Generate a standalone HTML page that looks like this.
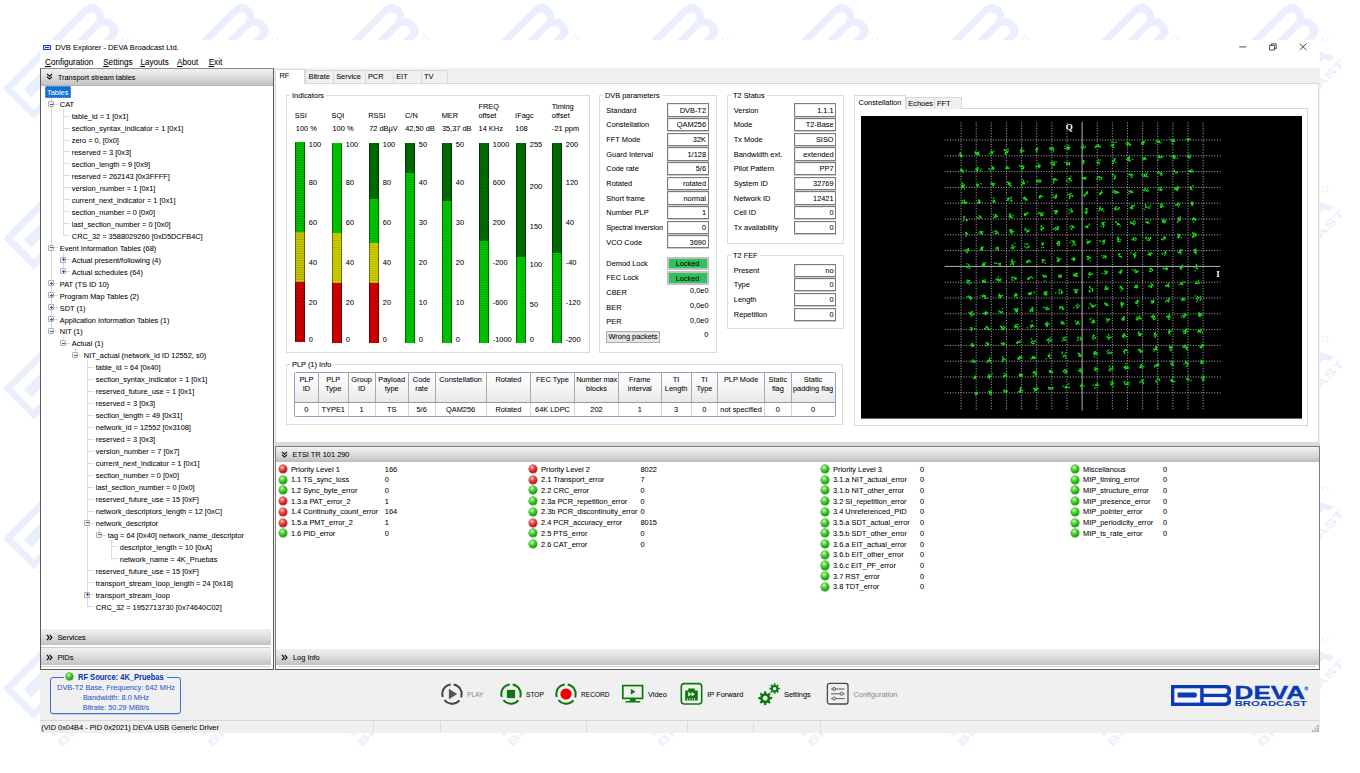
<!DOCTYPE html><html><head><meta charset="utf-8"><title>DVB Explorer</title><style>
html,body{margin:0;padding:0;}
body{width:1360px;height:773px;overflow:hidden;position:relative;background:#fff;font-family:"Liberation Sans",sans-serif;font-size:7.4px;color:#000;}
.a{position:absolute;box-sizing:border-box;}
.t{position:absolute;white-space:nowrap;-webkit-text-stroke:0.05px currentColor;}
.hdr{background:linear-gradient(#f1f1f1 0%,#e0e0e0 45%,#c2c2c2 100%);}
.grp{border:1px solid #dcdcdc;border-radius:1px;}
.leg{background:#fff;padding:0 2px;}
.fld{border:1px solid #7a7a7a;background:#fff;box-shadow:inset 0 0 0 0.5px #ddd;}
u{text-decoration:underline;text-decoration-thickness:0.6px;text-underline-offset:0.6px;}
</style></head><body>
<svg class="a" style="left:0;top:0" width="1360" height="773" viewBox="0 0 1360 773"><g transform="translate(-147 -61.599999999999994) rotate(-45) scale(2.09)"><path d="M0 0H54.5Q60.1 0 60.1 5.4Q60.1 9.4 57.6 10.45Q60.1 11.5 60.1 15.5Q60.1 20.9 54.5 20.9H0Z" fill="#e9effc"/><rect x="3.3" y="3.3" width="25.9" height="14.3" fill="#fff"/><path d="M6.6 7.5H23.4a2.5 2.5 0 0 1 0 5.1H6.6Z" fill="#e9effc"/><path d="M32.6 3.3H53.6a2.7 2.7 0 0 1 0 5.5H32.6Z" fill="#fff"/><path d="M32.6 12.1H53.6a2.7 2.7 0 0 1 0 5.5H32.6Z" fill="#fff"/><text x="-0.4" y="33.4" font-family="Liberation Sans" font-weight="bold" font-size="14.4" textLength="56" lengthAdjust="spacingAndGlyphs" fill="#e9effc">DEVA</text><text x="0" y="39.8" font-family="Liberation Sans" font-weight="bold" font-size="5.2" textLength="56.5" lengthAdjust="spacingAndGlyphs" fill="#e9effc">BROADCAST</text><circle cx="58" cy="24.6" r="1.4" fill="none" stroke="#e9effc" stroke-width="0.45"/></g><g transform="translate(3 -61.599999999999994) rotate(-45) scale(2.09)"><path d="M0 0H54.5Q60.1 0 60.1 5.4Q60.1 9.4 57.6 10.45Q60.1 11.5 60.1 15.5Q60.1 20.9 54.5 20.9H0Z" fill="#e9effc"/><rect x="3.3" y="3.3" width="25.9" height="14.3" fill="#fff"/><path d="M6.6 7.5H23.4a2.5 2.5 0 0 1 0 5.1H6.6Z" fill="#e9effc"/><path d="M32.6 3.3H53.6a2.7 2.7 0 0 1 0 5.5H32.6Z" fill="#fff"/><path d="M32.6 12.1H53.6a2.7 2.7 0 0 1 0 5.5H32.6Z" fill="#fff"/><text x="-0.4" y="33.4" font-family="Liberation Sans" font-weight="bold" font-size="14.4" textLength="56" lengthAdjust="spacingAndGlyphs" fill="#e9effc">DEVA</text><text x="0" y="39.8" font-family="Liberation Sans" font-weight="bold" font-size="5.2" textLength="56.5" lengthAdjust="spacingAndGlyphs" fill="#e9effc">BROADCAST</text><circle cx="58" cy="24.6" r="1.4" fill="none" stroke="#e9effc" stroke-width="0.45"/></g><g transform="translate(153 -61.599999999999994) rotate(-45) scale(2.09)"><path d="M0 0H54.5Q60.1 0 60.1 5.4Q60.1 9.4 57.6 10.45Q60.1 11.5 60.1 15.5Q60.1 20.9 54.5 20.9H0Z" fill="#e9effc"/><rect x="3.3" y="3.3" width="25.9" height="14.3" fill="#fff"/><path d="M6.6 7.5H23.4a2.5 2.5 0 0 1 0 5.1H6.6Z" fill="#e9effc"/><path d="M32.6 3.3H53.6a2.7 2.7 0 0 1 0 5.5H32.6Z" fill="#fff"/><path d="M32.6 12.1H53.6a2.7 2.7 0 0 1 0 5.5H32.6Z" fill="#fff"/><text x="-0.4" y="33.4" font-family="Liberation Sans" font-weight="bold" font-size="14.4" textLength="56" lengthAdjust="spacingAndGlyphs" fill="#e9effc">DEVA</text><text x="0" y="39.8" font-family="Liberation Sans" font-weight="bold" font-size="5.2" textLength="56.5" lengthAdjust="spacingAndGlyphs" fill="#e9effc">BROADCAST</text><circle cx="58" cy="24.6" r="1.4" fill="none" stroke="#e9effc" stroke-width="0.45"/></g><g transform="translate(303 -61.599999999999994) rotate(-45) scale(2.09)"><path d="M0 0H54.5Q60.1 0 60.1 5.4Q60.1 9.4 57.6 10.45Q60.1 11.5 60.1 15.5Q60.1 20.9 54.5 20.9H0Z" fill="#e9effc"/><rect x="3.3" y="3.3" width="25.9" height="14.3" fill="#fff"/><path d="M6.6 7.5H23.4a2.5 2.5 0 0 1 0 5.1H6.6Z" fill="#e9effc"/><path d="M32.6 3.3H53.6a2.7 2.7 0 0 1 0 5.5H32.6Z" fill="#fff"/><path d="M32.6 12.1H53.6a2.7 2.7 0 0 1 0 5.5H32.6Z" fill="#fff"/><text x="-0.4" y="33.4" font-family="Liberation Sans" font-weight="bold" font-size="14.4" textLength="56" lengthAdjust="spacingAndGlyphs" fill="#e9effc">DEVA</text><text x="0" y="39.8" font-family="Liberation Sans" font-weight="bold" font-size="5.2" textLength="56.5" lengthAdjust="spacingAndGlyphs" fill="#e9effc">BROADCAST</text><circle cx="58" cy="24.6" r="1.4" fill="none" stroke="#e9effc" stroke-width="0.45"/></g><g transform="translate(453 -61.599999999999994) rotate(-45) scale(2.09)"><path d="M0 0H54.5Q60.1 0 60.1 5.4Q60.1 9.4 57.6 10.45Q60.1 11.5 60.1 15.5Q60.1 20.9 54.5 20.9H0Z" fill="#e9effc"/><rect x="3.3" y="3.3" width="25.9" height="14.3" fill="#fff"/><path d="M6.6 7.5H23.4a2.5 2.5 0 0 1 0 5.1H6.6Z" fill="#e9effc"/><path d="M32.6 3.3H53.6a2.7 2.7 0 0 1 0 5.5H32.6Z" fill="#fff"/><path d="M32.6 12.1H53.6a2.7 2.7 0 0 1 0 5.5H32.6Z" fill="#fff"/><text x="-0.4" y="33.4" font-family="Liberation Sans" font-weight="bold" font-size="14.4" textLength="56" lengthAdjust="spacingAndGlyphs" fill="#e9effc">DEVA</text><text x="0" y="39.8" font-family="Liberation Sans" font-weight="bold" font-size="5.2" textLength="56.5" lengthAdjust="spacingAndGlyphs" fill="#e9effc">BROADCAST</text><circle cx="58" cy="24.6" r="1.4" fill="none" stroke="#e9effc" stroke-width="0.45"/></g><g transform="translate(603 -61.599999999999994) rotate(-45) scale(2.09)"><path d="M0 0H54.5Q60.1 0 60.1 5.4Q60.1 9.4 57.6 10.45Q60.1 11.5 60.1 15.5Q60.1 20.9 54.5 20.9H0Z" fill="#e9effc"/><rect x="3.3" y="3.3" width="25.9" height="14.3" fill="#fff"/><path d="M6.6 7.5H23.4a2.5 2.5 0 0 1 0 5.1H6.6Z" fill="#e9effc"/><path d="M32.6 3.3H53.6a2.7 2.7 0 0 1 0 5.5H32.6Z" fill="#fff"/><path d="M32.6 12.1H53.6a2.7 2.7 0 0 1 0 5.5H32.6Z" fill="#fff"/><text x="-0.4" y="33.4" font-family="Liberation Sans" font-weight="bold" font-size="14.4" textLength="56" lengthAdjust="spacingAndGlyphs" fill="#e9effc">DEVA</text><text x="0" y="39.8" font-family="Liberation Sans" font-weight="bold" font-size="5.2" textLength="56.5" lengthAdjust="spacingAndGlyphs" fill="#e9effc">BROADCAST</text><circle cx="58" cy="24.6" r="1.4" fill="none" stroke="#e9effc" stroke-width="0.45"/></g><g transform="translate(753 -61.599999999999994) rotate(-45) scale(2.09)"><path d="M0 0H54.5Q60.1 0 60.1 5.4Q60.1 9.4 57.6 10.45Q60.1 11.5 60.1 15.5Q60.1 20.9 54.5 20.9H0Z" fill="#e9effc"/><rect x="3.3" y="3.3" width="25.9" height="14.3" fill="#fff"/><path d="M6.6 7.5H23.4a2.5 2.5 0 0 1 0 5.1H6.6Z" fill="#e9effc"/><path d="M32.6 3.3H53.6a2.7 2.7 0 0 1 0 5.5H32.6Z" fill="#fff"/><path d="M32.6 12.1H53.6a2.7 2.7 0 0 1 0 5.5H32.6Z" fill="#fff"/><text x="-0.4" y="33.4" font-family="Liberation Sans" font-weight="bold" font-size="14.4" textLength="56" lengthAdjust="spacingAndGlyphs" fill="#e9effc">DEVA</text><text x="0" y="39.8" font-family="Liberation Sans" font-weight="bold" font-size="5.2" textLength="56.5" lengthAdjust="spacingAndGlyphs" fill="#e9effc">BROADCAST</text><circle cx="58" cy="24.6" r="1.4" fill="none" stroke="#e9effc" stroke-width="0.45"/></g><g transform="translate(903 -61.599999999999994) rotate(-45) scale(2.09)"><path d="M0 0H54.5Q60.1 0 60.1 5.4Q60.1 9.4 57.6 10.45Q60.1 11.5 60.1 15.5Q60.1 20.9 54.5 20.9H0Z" fill="#e9effc"/><rect x="3.3" y="3.3" width="25.9" height="14.3" fill="#fff"/><path d="M6.6 7.5H23.4a2.5 2.5 0 0 1 0 5.1H6.6Z" fill="#e9effc"/><path d="M32.6 3.3H53.6a2.7 2.7 0 0 1 0 5.5H32.6Z" fill="#fff"/><path d="M32.6 12.1H53.6a2.7 2.7 0 0 1 0 5.5H32.6Z" fill="#fff"/><text x="-0.4" y="33.4" font-family="Liberation Sans" font-weight="bold" font-size="14.4" textLength="56" lengthAdjust="spacingAndGlyphs" fill="#e9effc">DEVA</text><text x="0" y="39.8" font-family="Liberation Sans" font-weight="bold" font-size="5.2" textLength="56.5" lengthAdjust="spacingAndGlyphs" fill="#e9effc">BROADCAST</text><circle cx="58" cy="24.6" r="1.4" fill="none" stroke="#e9effc" stroke-width="0.45"/></g><g transform="translate(1053 -61.599999999999994) rotate(-45) scale(2.09)"><path d="M0 0H54.5Q60.1 0 60.1 5.4Q60.1 9.4 57.6 10.45Q60.1 11.5 60.1 15.5Q60.1 20.9 54.5 20.9H0Z" fill="#e9effc"/><rect x="3.3" y="3.3" width="25.9" height="14.3" fill="#fff"/><path d="M6.6 7.5H23.4a2.5 2.5 0 0 1 0 5.1H6.6Z" fill="#e9effc"/><path d="M32.6 3.3H53.6a2.7 2.7 0 0 1 0 5.5H32.6Z" fill="#fff"/><path d="M32.6 12.1H53.6a2.7 2.7 0 0 1 0 5.5H32.6Z" fill="#fff"/><text x="-0.4" y="33.4" font-family="Liberation Sans" font-weight="bold" font-size="14.4" textLength="56" lengthAdjust="spacingAndGlyphs" fill="#e9effc">DEVA</text><text x="0" y="39.8" font-family="Liberation Sans" font-weight="bold" font-size="5.2" textLength="56.5" lengthAdjust="spacingAndGlyphs" fill="#e9effc">BROADCAST</text><circle cx="58" cy="24.6" r="1.4" fill="none" stroke="#e9effc" stroke-width="0.45"/></g><g transform="translate(1203 -61.599999999999994) rotate(-45) scale(2.09)"><path d="M0 0H54.5Q60.1 0 60.1 5.4Q60.1 9.4 57.6 10.45Q60.1 11.5 60.1 15.5Q60.1 20.9 54.5 20.9H0Z" fill="#e9effc"/><rect x="3.3" y="3.3" width="25.9" height="14.3" fill="#fff"/><path d="M6.6 7.5H23.4a2.5 2.5 0 0 1 0 5.1H6.6Z" fill="#e9effc"/><path d="M32.6 3.3H53.6a2.7 2.7 0 0 1 0 5.5H32.6Z" fill="#fff"/><path d="M32.6 12.1H53.6a2.7 2.7 0 0 1 0 5.5H32.6Z" fill="#fff"/><text x="-0.4" y="33.4" font-family="Liberation Sans" font-weight="bold" font-size="14.4" textLength="56" lengthAdjust="spacingAndGlyphs" fill="#e9effc">DEVA</text><text x="0" y="39.8" font-family="Liberation Sans" font-weight="bold" font-size="5.2" textLength="56.5" lengthAdjust="spacingAndGlyphs" fill="#e9effc">BROADCAST</text><circle cx="58" cy="24.6" r="1.4" fill="none" stroke="#e9effc" stroke-width="0.45"/></g><g transform="translate(-147 88.4) rotate(-45) scale(2.09)"><path d="M0 0H54.5Q60.1 0 60.1 5.4Q60.1 9.4 57.6 10.45Q60.1 11.5 60.1 15.5Q60.1 20.9 54.5 20.9H0Z" fill="#e9effc"/><rect x="3.3" y="3.3" width="25.9" height="14.3" fill="#fff"/><path d="M6.6 7.5H23.4a2.5 2.5 0 0 1 0 5.1H6.6Z" fill="#e9effc"/><path d="M32.6 3.3H53.6a2.7 2.7 0 0 1 0 5.5H32.6Z" fill="#fff"/><path d="M32.6 12.1H53.6a2.7 2.7 0 0 1 0 5.5H32.6Z" fill="#fff"/><text x="-0.4" y="33.4" font-family="Liberation Sans" font-weight="bold" font-size="14.4" textLength="56" lengthAdjust="spacingAndGlyphs" fill="#e9effc">DEVA</text><text x="0" y="39.8" font-family="Liberation Sans" font-weight="bold" font-size="5.2" textLength="56.5" lengthAdjust="spacingAndGlyphs" fill="#e9effc">BROADCAST</text><circle cx="58" cy="24.6" r="1.4" fill="none" stroke="#e9effc" stroke-width="0.45"/></g><g transform="translate(3 88.4) rotate(-45) scale(2.09)"><path d="M0 0H54.5Q60.1 0 60.1 5.4Q60.1 9.4 57.6 10.45Q60.1 11.5 60.1 15.5Q60.1 20.9 54.5 20.9H0Z" fill="#e9effc"/><rect x="3.3" y="3.3" width="25.9" height="14.3" fill="#fff"/><path d="M6.6 7.5H23.4a2.5 2.5 0 0 1 0 5.1H6.6Z" fill="#e9effc"/><path d="M32.6 3.3H53.6a2.7 2.7 0 0 1 0 5.5H32.6Z" fill="#fff"/><path d="M32.6 12.1H53.6a2.7 2.7 0 0 1 0 5.5H32.6Z" fill="#fff"/><text x="-0.4" y="33.4" font-family="Liberation Sans" font-weight="bold" font-size="14.4" textLength="56" lengthAdjust="spacingAndGlyphs" fill="#e9effc">DEVA</text><text x="0" y="39.8" font-family="Liberation Sans" font-weight="bold" font-size="5.2" textLength="56.5" lengthAdjust="spacingAndGlyphs" fill="#e9effc">BROADCAST</text><circle cx="58" cy="24.6" r="1.4" fill="none" stroke="#e9effc" stroke-width="0.45"/></g><g transform="translate(153 88.4) rotate(-45) scale(2.09)"><path d="M0 0H54.5Q60.1 0 60.1 5.4Q60.1 9.4 57.6 10.45Q60.1 11.5 60.1 15.5Q60.1 20.9 54.5 20.9H0Z" fill="#e9effc"/><rect x="3.3" y="3.3" width="25.9" height="14.3" fill="#fff"/><path d="M6.6 7.5H23.4a2.5 2.5 0 0 1 0 5.1H6.6Z" fill="#e9effc"/><path d="M32.6 3.3H53.6a2.7 2.7 0 0 1 0 5.5H32.6Z" fill="#fff"/><path d="M32.6 12.1H53.6a2.7 2.7 0 0 1 0 5.5H32.6Z" fill="#fff"/><text x="-0.4" y="33.4" font-family="Liberation Sans" font-weight="bold" font-size="14.4" textLength="56" lengthAdjust="spacingAndGlyphs" fill="#e9effc">DEVA</text><text x="0" y="39.8" font-family="Liberation Sans" font-weight="bold" font-size="5.2" textLength="56.5" lengthAdjust="spacingAndGlyphs" fill="#e9effc">BROADCAST</text><circle cx="58" cy="24.6" r="1.4" fill="none" stroke="#e9effc" stroke-width="0.45"/></g><g transform="translate(303 88.4) rotate(-45) scale(2.09)"><path d="M0 0H54.5Q60.1 0 60.1 5.4Q60.1 9.4 57.6 10.45Q60.1 11.5 60.1 15.5Q60.1 20.9 54.5 20.9H0Z" fill="#e9effc"/><rect x="3.3" y="3.3" width="25.9" height="14.3" fill="#fff"/><path d="M6.6 7.5H23.4a2.5 2.5 0 0 1 0 5.1H6.6Z" fill="#e9effc"/><path d="M32.6 3.3H53.6a2.7 2.7 0 0 1 0 5.5H32.6Z" fill="#fff"/><path d="M32.6 12.1H53.6a2.7 2.7 0 0 1 0 5.5H32.6Z" fill="#fff"/><text x="-0.4" y="33.4" font-family="Liberation Sans" font-weight="bold" font-size="14.4" textLength="56" lengthAdjust="spacingAndGlyphs" fill="#e9effc">DEVA</text><text x="0" y="39.8" font-family="Liberation Sans" font-weight="bold" font-size="5.2" textLength="56.5" lengthAdjust="spacingAndGlyphs" fill="#e9effc">BROADCAST</text><circle cx="58" cy="24.6" r="1.4" fill="none" stroke="#e9effc" stroke-width="0.45"/></g><g transform="translate(453 88.4) rotate(-45) scale(2.09)"><path d="M0 0H54.5Q60.1 0 60.1 5.4Q60.1 9.4 57.6 10.45Q60.1 11.5 60.1 15.5Q60.1 20.9 54.5 20.9H0Z" fill="#e9effc"/><rect x="3.3" y="3.3" width="25.9" height="14.3" fill="#fff"/><path d="M6.6 7.5H23.4a2.5 2.5 0 0 1 0 5.1H6.6Z" fill="#e9effc"/><path d="M32.6 3.3H53.6a2.7 2.7 0 0 1 0 5.5H32.6Z" fill="#fff"/><path d="M32.6 12.1H53.6a2.7 2.7 0 0 1 0 5.5H32.6Z" fill="#fff"/><text x="-0.4" y="33.4" font-family="Liberation Sans" font-weight="bold" font-size="14.4" textLength="56" lengthAdjust="spacingAndGlyphs" fill="#e9effc">DEVA</text><text x="0" y="39.8" font-family="Liberation Sans" font-weight="bold" font-size="5.2" textLength="56.5" lengthAdjust="spacingAndGlyphs" fill="#e9effc">BROADCAST</text><circle cx="58" cy="24.6" r="1.4" fill="none" stroke="#e9effc" stroke-width="0.45"/></g><g transform="translate(603 88.4) rotate(-45) scale(2.09)"><path d="M0 0H54.5Q60.1 0 60.1 5.4Q60.1 9.4 57.6 10.45Q60.1 11.5 60.1 15.5Q60.1 20.9 54.5 20.9H0Z" fill="#e9effc"/><rect x="3.3" y="3.3" width="25.9" height="14.3" fill="#fff"/><path d="M6.6 7.5H23.4a2.5 2.5 0 0 1 0 5.1H6.6Z" fill="#e9effc"/><path d="M32.6 3.3H53.6a2.7 2.7 0 0 1 0 5.5H32.6Z" fill="#fff"/><path d="M32.6 12.1H53.6a2.7 2.7 0 0 1 0 5.5H32.6Z" fill="#fff"/><text x="-0.4" y="33.4" font-family="Liberation Sans" font-weight="bold" font-size="14.4" textLength="56" lengthAdjust="spacingAndGlyphs" fill="#e9effc">DEVA</text><text x="0" y="39.8" font-family="Liberation Sans" font-weight="bold" font-size="5.2" textLength="56.5" lengthAdjust="spacingAndGlyphs" fill="#e9effc">BROADCAST</text><circle cx="58" cy="24.6" r="1.4" fill="none" stroke="#e9effc" stroke-width="0.45"/></g><g transform="translate(753 88.4) rotate(-45) scale(2.09)"><path d="M0 0H54.5Q60.1 0 60.1 5.4Q60.1 9.4 57.6 10.45Q60.1 11.5 60.1 15.5Q60.1 20.9 54.5 20.9H0Z" fill="#e9effc"/><rect x="3.3" y="3.3" width="25.9" height="14.3" fill="#fff"/><path d="M6.6 7.5H23.4a2.5 2.5 0 0 1 0 5.1H6.6Z" fill="#e9effc"/><path d="M32.6 3.3H53.6a2.7 2.7 0 0 1 0 5.5H32.6Z" fill="#fff"/><path d="M32.6 12.1H53.6a2.7 2.7 0 0 1 0 5.5H32.6Z" fill="#fff"/><text x="-0.4" y="33.4" font-family="Liberation Sans" font-weight="bold" font-size="14.4" textLength="56" lengthAdjust="spacingAndGlyphs" fill="#e9effc">DEVA</text><text x="0" y="39.8" font-family="Liberation Sans" font-weight="bold" font-size="5.2" textLength="56.5" lengthAdjust="spacingAndGlyphs" fill="#e9effc">BROADCAST</text><circle cx="58" cy="24.6" r="1.4" fill="none" stroke="#e9effc" stroke-width="0.45"/></g><g transform="translate(903 88.4) rotate(-45) scale(2.09)"><path d="M0 0H54.5Q60.1 0 60.1 5.4Q60.1 9.4 57.6 10.45Q60.1 11.5 60.1 15.5Q60.1 20.9 54.5 20.9H0Z" fill="#e9effc"/><rect x="3.3" y="3.3" width="25.9" height="14.3" fill="#fff"/><path d="M6.6 7.5H23.4a2.5 2.5 0 0 1 0 5.1H6.6Z" fill="#e9effc"/><path d="M32.6 3.3H53.6a2.7 2.7 0 0 1 0 5.5H32.6Z" fill="#fff"/><path d="M32.6 12.1H53.6a2.7 2.7 0 0 1 0 5.5H32.6Z" fill="#fff"/><text x="-0.4" y="33.4" font-family="Liberation Sans" font-weight="bold" font-size="14.4" textLength="56" lengthAdjust="spacingAndGlyphs" fill="#e9effc">DEVA</text><text x="0" y="39.8" font-family="Liberation Sans" font-weight="bold" font-size="5.2" textLength="56.5" lengthAdjust="spacingAndGlyphs" fill="#e9effc">BROADCAST</text><circle cx="58" cy="24.6" r="1.4" fill="none" stroke="#e9effc" stroke-width="0.45"/></g><g transform="translate(1053 88.4) rotate(-45) scale(2.09)"><path d="M0 0H54.5Q60.1 0 60.1 5.4Q60.1 9.4 57.6 10.45Q60.1 11.5 60.1 15.5Q60.1 20.9 54.5 20.9H0Z" fill="#e9effc"/><rect x="3.3" y="3.3" width="25.9" height="14.3" fill="#fff"/><path d="M6.6 7.5H23.4a2.5 2.5 0 0 1 0 5.1H6.6Z" fill="#e9effc"/><path d="M32.6 3.3H53.6a2.7 2.7 0 0 1 0 5.5H32.6Z" fill="#fff"/><path d="M32.6 12.1H53.6a2.7 2.7 0 0 1 0 5.5H32.6Z" fill="#fff"/><text x="-0.4" y="33.4" font-family="Liberation Sans" font-weight="bold" font-size="14.4" textLength="56" lengthAdjust="spacingAndGlyphs" fill="#e9effc">DEVA</text><text x="0" y="39.8" font-family="Liberation Sans" font-weight="bold" font-size="5.2" textLength="56.5" lengthAdjust="spacingAndGlyphs" fill="#e9effc">BROADCAST</text><circle cx="58" cy="24.6" r="1.4" fill="none" stroke="#e9effc" stroke-width="0.45"/></g><g transform="translate(1203 88.4) rotate(-45) scale(2.09)"><path d="M0 0H54.5Q60.1 0 60.1 5.4Q60.1 9.4 57.6 10.45Q60.1 11.5 60.1 15.5Q60.1 20.9 54.5 20.9H0Z" fill="#e9effc"/><rect x="3.3" y="3.3" width="25.9" height="14.3" fill="#fff"/><path d="M6.6 7.5H23.4a2.5 2.5 0 0 1 0 5.1H6.6Z" fill="#e9effc"/><path d="M32.6 3.3H53.6a2.7 2.7 0 0 1 0 5.5H32.6Z" fill="#fff"/><path d="M32.6 12.1H53.6a2.7 2.7 0 0 1 0 5.5H32.6Z" fill="#fff"/><text x="-0.4" y="33.4" font-family="Liberation Sans" font-weight="bold" font-size="14.4" textLength="56" lengthAdjust="spacingAndGlyphs" fill="#e9effc">DEVA</text><text x="0" y="39.8" font-family="Liberation Sans" font-weight="bold" font-size="5.2" textLength="56.5" lengthAdjust="spacingAndGlyphs" fill="#e9effc">BROADCAST</text><circle cx="58" cy="24.6" r="1.4" fill="none" stroke="#e9effc" stroke-width="0.45"/></g><g transform="translate(-147 238.4) rotate(-45) scale(2.09)"><path d="M0 0H54.5Q60.1 0 60.1 5.4Q60.1 9.4 57.6 10.45Q60.1 11.5 60.1 15.5Q60.1 20.9 54.5 20.9H0Z" fill="#e9effc"/><rect x="3.3" y="3.3" width="25.9" height="14.3" fill="#fff"/><path d="M6.6 7.5H23.4a2.5 2.5 0 0 1 0 5.1H6.6Z" fill="#e9effc"/><path d="M32.6 3.3H53.6a2.7 2.7 0 0 1 0 5.5H32.6Z" fill="#fff"/><path d="M32.6 12.1H53.6a2.7 2.7 0 0 1 0 5.5H32.6Z" fill="#fff"/><text x="-0.4" y="33.4" font-family="Liberation Sans" font-weight="bold" font-size="14.4" textLength="56" lengthAdjust="spacingAndGlyphs" fill="#e9effc">DEVA</text><text x="0" y="39.8" font-family="Liberation Sans" font-weight="bold" font-size="5.2" textLength="56.5" lengthAdjust="spacingAndGlyphs" fill="#e9effc">BROADCAST</text><circle cx="58" cy="24.6" r="1.4" fill="none" stroke="#e9effc" stroke-width="0.45"/></g><g transform="translate(3 238.4) rotate(-45) scale(2.09)"><path d="M0 0H54.5Q60.1 0 60.1 5.4Q60.1 9.4 57.6 10.45Q60.1 11.5 60.1 15.5Q60.1 20.9 54.5 20.9H0Z" fill="#e9effc"/><rect x="3.3" y="3.3" width="25.9" height="14.3" fill="#fff"/><path d="M6.6 7.5H23.4a2.5 2.5 0 0 1 0 5.1H6.6Z" fill="#e9effc"/><path d="M32.6 3.3H53.6a2.7 2.7 0 0 1 0 5.5H32.6Z" fill="#fff"/><path d="M32.6 12.1H53.6a2.7 2.7 0 0 1 0 5.5H32.6Z" fill="#fff"/><text x="-0.4" y="33.4" font-family="Liberation Sans" font-weight="bold" font-size="14.4" textLength="56" lengthAdjust="spacingAndGlyphs" fill="#e9effc">DEVA</text><text x="0" y="39.8" font-family="Liberation Sans" font-weight="bold" font-size="5.2" textLength="56.5" lengthAdjust="spacingAndGlyphs" fill="#e9effc">BROADCAST</text><circle cx="58" cy="24.6" r="1.4" fill="none" stroke="#e9effc" stroke-width="0.45"/></g><g transform="translate(1203 238.4) rotate(-45) scale(2.09)"><path d="M0 0H54.5Q60.1 0 60.1 5.4Q60.1 9.4 57.6 10.45Q60.1 11.5 60.1 15.5Q60.1 20.9 54.5 20.9H0Z" fill="#e9effc"/><rect x="3.3" y="3.3" width="25.9" height="14.3" fill="#fff"/><path d="M6.6 7.5H23.4a2.5 2.5 0 0 1 0 5.1H6.6Z" fill="#e9effc"/><path d="M32.6 3.3H53.6a2.7 2.7 0 0 1 0 5.5H32.6Z" fill="#fff"/><path d="M32.6 12.1H53.6a2.7 2.7 0 0 1 0 5.5H32.6Z" fill="#fff"/><text x="-0.4" y="33.4" font-family="Liberation Sans" font-weight="bold" font-size="14.4" textLength="56" lengthAdjust="spacingAndGlyphs" fill="#e9effc">DEVA</text><text x="0" y="39.8" font-family="Liberation Sans" font-weight="bold" font-size="5.2" textLength="56.5" lengthAdjust="spacingAndGlyphs" fill="#e9effc">BROADCAST</text><circle cx="58" cy="24.6" r="1.4" fill="none" stroke="#e9effc" stroke-width="0.45"/></g><g transform="translate(-147 388.4) rotate(-45) scale(2.09)"><path d="M0 0H54.5Q60.1 0 60.1 5.4Q60.1 9.4 57.6 10.45Q60.1 11.5 60.1 15.5Q60.1 20.9 54.5 20.9H0Z" fill="#e9effc"/><rect x="3.3" y="3.3" width="25.9" height="14.3" fill="#fff"/><path d="M6.6 7.5H23.4a2.5 2.5 0 0 1 0 5.1H6.6Z" fill="#e9effc"/><path d="M32.6 3.3H53.6a2.7 2.7 0 0 1 0 5.5H32.6Z" fill="#fff"/><path d="M32.6 12.1H53.6a2.7 2.7 0 0 1 0 5.5H32.6Z" fill="#fff"/><text x="-0.4" y="33.4" font-family="Liberation Sans" font-weight="bold" font-size="14.4" textLength="56" lengthAdjust="spacingAndGlyphs" fill="#e9effc">DEVA</text><text x="0" y="39.8" font-family="Liberation Sans" font-weight="bold" font-size="5.2" textLength="56.5" lengthAdjust="spacingAndGlyphs" fill="#e9effc">BROADCAST</text><circle cx="58" cy="24.6" r="1.4" fill="none" stroke="#e9effc" stroke-width="0.45"/></g><g transform="translate(3 388.4) rotate(-45) scale(2.09)"><path d="M0 0H54.5Q60.1 0 60.1 5.4Q60.1 9.4 57.6 10.45Q60.1 11.5 60.1 15.5Q60.1 20.9 54.5 20.9H0Z" fill="#e9effc"/><rect x="3.3" y="3.3" width="25.9" height="14.3" fill="#fff"/><path d="M6.6 7.5H23.4a2.5 2.5 0 0 1 0 5.1H6.6Z" fill="#e9effc"/><path d="M32.6 3.3H53.6a2.7 2.7 0 0 1 0 5.5H32.6Z" fill="#fff"/><path d="M32.6 12.1H53.6a2.7 2.7 0 0 1 0 5.5H32.6Z" fill="#fff"/><text x="-0.4" y="33.4" font-family="Liberation Sans" font-weight="bold" font-size="14.4" textLength="56" lengthAdjust="spacingAndGlyphs" fill="#e9effc">DEVA</text><text x="0" y="39.8" font-family="Liberation Sans" font-weight="bold" font-size="5.2" textLength="56.5" lengthAdjust="spacingAndGlyphs" fill="#e9effc">BROADCAST</text><circle cx="58" cy="24.6" r="1.4" fill="none" stroke="#e9effc" stroke-width="0.45"/></g><g transform="translate(1203 388.4) rotate(-45) scale(2.09)"><path d="M0 0H54.5Q60.1 0 60.1 5.4Q60.1 9.4 57.6 10.45Q60.1 11.5 60.1 15.5Q60.1 20.9 54.5 20.9H0Z" fill="#e9effc"/><rect x="3.3" y="3.3" width="25.9" height="14.3" fill="#fff"/><path d="M6.6 7.5H23.4a2.5 2.5 0 0 1 0 5.1H6.6Z" fill="#e9effc"/><path d="M32.6 3.3H53.6a2.7 2.7 0 0 1 0 5.5H32.6Z" fill="#fff"/><path d="M32.6 12.1H53.6a2.7 2.7 0 0 1 0 5.5H32.6Z" fill="#fff"/><text x="-0.4" y="33.4" font-family="Liberation Sans" font-weight="bold" font-size="14.4" textLength="56" lengthAdjust="spacingAndGlyphs" fill="#e9effc">DEVA</text><text x="0" y="39.8" font-family="Liberation Sans" font-weight="bold" font-size="5.2" textLength="56.5" lengthAdjust="spacingAndGlyphs" fill="#e9effc">BROADCAST</text><circle cx="58" cy="24.6" r="1.4" fill="none" stroke="#e9effc" stroke-width="0.45"/></g><g transform="translate(-147 538.4) rotate(-45) scale(2.09)"><path d="M0 0H54.5Q60.1 0 60.1 5.4Q60.1 9.4 57.6 10.45Q60.1 11.5 60.1 15.5Q60.1 20.9 54.5 20.9H0Z" fill="#e9effc"/><rect x="3.3" y="3.3" width="25.9" height="14.3" fill="#fff"/><path d="M6.6 7.5H23.4a2.5 2.5 0 0 1 0 5.1H6.6Z" fill="#e9effc"/><path d="M32.6 3.3H53.6a2.7 2.7 0 0 1 0 5.5H32.6Z" fill="#fff"/><path d="M32.6 12.1H53.6a2.7 2.7 0 0 1 0 5.5H32.6Z" fill="#fff"/><text x="-0.4" y="33.4" font-family="Liberation Sans" font-weight="bold" font-size="14.4" textLength="56" lengthAdjust="spacingAndGlyphs" fill="#e9effc">DEVA</text><text x="0" y="39.8" font-family="Liberation Sans" font-weight="bold" font-size="5.2" textLength="56.5" lengthAdjust="spacingAndGlyphs" fill="#e9effc">BROADCAST</text><circle cx="58" cy="24.6" r="1.4" fill="none" stroke="#e9effc" stroke-width="0.45"/></g><g transform="translate(3 538.4) rotate(-45) scale(2.09)"><path d="M0 0H54.5Q60.1 0 60.1 5.4Q60.1 9.4 57.6 10.45Q60.1 11.5 60.1 15.5Q60.1 20.9 54.5 20.9H0Z" fill="#e9effc"/><rect x="3.3" y="3.3" width="25.9" height="14.3" fill="#fff"/><path d="M6.6 7.5H23.4a2.5 2.5 0 0 1 0 5.1H6.6Z" fill="#e9effc"/><path d="M32.6 3.3H53.6a2.7 2.7 0 0 1 0 5.5H32.6Z" fill="#fff"/><path d="M32.6 12.1H53.6a2.7 2.7 0 0 1 0 5.5H32.6Z" fill="#fff"/><text x="-0.4" y="33.4" font-family="Liberation Sans" font-weight="bold" font-size="14.4" textLength="56" lengthAdjust="spacingAndGlyphs" fill="#e9effc">DEVA</text><text x="0" y="39.8" font-family="Liberation Sans" font-weight="bold" font-size="5.2" textLength="56.5" lengthAdjust="spacingAndGlyphs" fill="#e9effc">BROADCAST</text><circle cx="58" cy="24.6" r="1.4" fill="none" stroke="#e9effc" stroke-width="0.45"/></g><g transform="translate(1203 538.4) rotate(-45) scale(2.09)"><path d="M0 0H54.5Q60.1 0 60.1 5.4Q60.1 9.4 57.6 10.45Q60.1 11.5 60.1 15.5Q60.1 20.9 54.5 20.9H0Z" fill="#e9effc"/><rect x="3.3" y="3.3" width="25.9" height="14.3" fill="#fff"/><path d="M6.6 7.5H23.4a2.5 2.5 0 0 1 0 5.1H6.6Z" fill="#e9effc"/><path d="M32.6 3.3H53.6a2.7 2.7 0 0 1 0 5.5H32.6Z" fill="#fff"/><path d="M32.6 12.1H53.6a2.7 2.7 0 0 1 0 5.5H32.6Z" fill="#fff"/><text x="-0.4" y="33.4" font-family="Liberation Sans" font-weight="bold" font-size="14.4" textLength="56" lengthAdjust="spacingAndGlyphs" fill="#e9effc">DEVA</text><text x="0" y="39.8" font-family="Liberation Sans" font-weight="bold" font-size="5.2" textLength="56.5" lengthAdjust="spacingAndGlyphs" fill="#e9effc">BROADCAST</text><circle cx="58" cy="24.6" r="1.4" fill="none" stroke="#e9effc" stroke-width="0.45"/></g><g transform="translate(-147 688.4) rotate(-45) scale(2.09)"><path d="M0 0H54.5Q60.1 0 60.1 5.4Q60.1 9.4 57.6 10.45Q60.1 11.5 60.1 15.5Q60.1 20.9 54.5 20.9H0Z" fill="#e9effc"/><rect x="3.3" y="3.3" width="25.9" height="14.3" fill="#fff"/><path d="M6.6 7.5H23.4a2.5 2.5 0 0 1 0 5.1H6.6Z" fill="#e9effc"/><path d="M32.6 3.3H53.6a2.7 2.7 0 0 1 0 5.5H32.6Z" fill="#fff"/><path d="M32.6 12.1H53.6a2.7 2.7 0 0 1 0 5.5H32.6Z" fill="#fff"/><text x="-0.4" y="33.4" font-family="Liberation Sans" font-weight="bold" font-size="14.4" textLength="56" lengthAdjust="spacingAndGlyphs" fill="#e9effc">DEVA</text><text x="0" y="39.8" font-family="Liberation Sans" font-weight="bold" font-size="5.2" textLength="56.5" lengthAdjust="spacingAndGlyphs" fill="#e9effc">BROADCAST</text><circle cx="58" cy="24.6" r="1.4" fill="none" stroke="#e9effc" stroke-width="0.45"/></g><g transform="translate(3 688.4) rotate(-45) scale(2.09)"><path d="M0 0H54.5Q60.1 0 60.1 5.4Q60.1 9.4 57.6 10.45Q60.1 11.5 60.1 15.5Q60.1 20.9 54.5 20.9H0Z" fill="#e9effc"/><rect x="3.3" y="3.3" width="25.9" height="14.3" fill="#fff"/><path d="M6.6 7.5H23.4a2.5 2.5 0 0 1 0 5.1H6.6Z" fill="#e9effc"/><path d="M32.6 3.3H53.6a2.7 2.7 0 0 1 0 5.5H32.6Z" fill="#fff"/><path d="M32.6 12.1H53.6a2.7 2.7 0 0 1 0 5.5H32.6Z" fill="#fff"/><text x="-0.4" y="33.4" font-family="Liberation Sans" font-weight="bold" font-size="14.4" textLength="56" lengthAdjust="spacingAndGlyphs" fill="#e9effc">DEVA</text><text x="0" y="39.8" font-family="Liberation Sans" font-weight="bold" font-size="5.2" textLength="56.5" lengthAdjust="spacingAndGlyphs" fill="#e9effc">BROADCAST</text><circle cx="58" cy="24.6" r="1.4" fill="none" stroke="#e9effc" stroke-width="0.45"/></g><g transform="translate(153 688.4) rotate(-45) scale(2.09)"><path d="M0 0H54.5Q60.1 0 60.1 5.4Q60.1 9.4 57.6 10.45Q60.1 11.5 60.1 15.5Q60.1 20.9 54.5 20.9H0Z" fill="#e9effc"/><rect x="3.3" y="3.3" width="25.9" height="14.3" fill="#fff"/><path d="M6.6 7.5H23.4a2.5 2.5 0 0 1 0 5.1H6.6Z" fill="#e9effc"/><path d="M32.6 3.3H53.6a2.7 2.7 0 0 1 0 5.5H32.6Z" fill="#fff"/><path d="M32.6 12.1H53.6a2.7 2.7 0 0 1 0 5.5H32.6Z" fill="#fff"/><text x="-0.4" y="33.4" font-family="Liberation Sans" font-weight="bold" font-size="14.4" textLength="56" lengthAdjust="spacingAndGlyphs" fill="#e9effc">DEVA</text><text x="0" y="39.8" font-family="Liberation Sans" font-weight="bold" font-size="5.2" textLength="56.5" lengthAdjust="spacingAndGlyphs" fill="#e9effc">BROADCAST</text><circle cx="58" cy="24.6" r="1.4" fill="none" stroke="#e9effc" stroke-width="0.45"/></g><g transform="translate(303 688.4) rotate(-45) scale(2.09)"><path d="M0 0H54.5Q60.1 0 60.1 5.4Q60.1 9.4 57.6 10.45Q60.1 11.5 60.1 15.5Q60.1 20.9 54.5 20.9H0Z" fill="#e9effc"/><rect x="3.3" y="3.3" width="25.9" height="14.3" fill="#fff"/><path d="M6.6 7.5H23.4a2.5 2.5 0 0 1 0 5.1H6.6Z" fill="#e9effc"/><path d="M32.6 3.3H53.6a2.7 2.7 0 0 1 0 5.5H32.6Z" fill="#fff"/><path d="M32.6 12.1H53.6a2.7 2.7 0 0 1 0 5.5H32.6Z" fill="#fff"/><text x="-0.4" y="33.4" font-family="Liberation Sans" font-weight="bold" font-size="14.4" textLength="56" lengthAdjust="spacingAndGlyphs" fill="#e9effc">DEVA</text><text x="0" y="39.8" font-family="Liberation Sans" font-weight="bold" font-size="5.2" textLength="56.5" lengthAdjust="spacingAndGlyphs" fill="#e9effc">BROADCAST</text><circle cx="58" cy="24.6" r="1.4" fill="none" stroke="#e9effc" stroke-width="0.45"/></g><g transform="translate(453 688.4) rotate(-45) scale(2.09)"><path d="M0 0H54.5Q60.1 0 60.1 5.4Q60.1 9.4 57.6 10.45Q60.1 11.5 60.1 15.5Q60.1 20.9 54.5 20.9H0Z" fill="#e9effc"/><rect x="3.3" y="3.3" width="25.9" height="14.3" fill="#fff"/><path d="M6.6 7.5H23.4a2.5 2.5 0 0 1 0 5.1H6.6Z" fill="#e9effc"/><path d="M32.6 3.3H53.6a2.7 2.7 0 0 1 0 5.5H32.6Z" fill="#fff"/><path d="M32.6 12.1H53.6a2.7 2.7 0 0 1 0 5.5H32.6Z" fill="#fff"/><text x="-0.4" y="33.4" font-family="Liberation Sans" font-weight="bold" font-size="14.4" textLength="56" lengthAdjust="spacingAndGlyphs" fill="#e9effc">DEVA</text><text x="0" y="39.8" font-family="Liberation Sans" font-weight="bold" font-size="5.2" textLength="56.5" lengthAdjust="spacingAndGlyphs" fill="#e9effc">BROADCAST</text><circle cx="58" cy="24.6" r="1.4" fill="none" stroke="#e9effc" stroke-width="0.45"/></g><g transform="translate(603 688.4) rotate(-45) scale(2.09)"><path d="M0 0H54.5Q60.1 0 60.1 5.4Q60.1 9.4 57.6 10.45Q60.1 11.5 60.1 15.5Q60.1 20.9 54.5 20.9H0Z" fill="#e9effc"/><rect x="3.3" y="3.3" width="25.9" height="14.3" fill="#fff"/><path d="M6.6 7.5H23.4a2.5 2.5 0 0 1 0 5.1H6.6Z" fill="#e9effc"/><path d="M32.6 3.3H53.6a2.7 2.7 0 0 1 0 5.5H32.6Z" fill="#fff"/><path d="M32.6 12.1H53.6a2.7 2.7 0 0 1 0 5.5H32.6Z" fill="#fff"/><text x="-0.4" y="33.4" font-family="Liberation Sans" font-weight="bold" font-size="14.4" textLength="56" lengthAdjust="spacingAndGlyphs" fill="#e9effc">DEVA</text><text x="0" y="39.8" font-family="Liberation Sans" font-weight="bold" font-size="5.2" textLength="56.5" lengthAdjust="spacingAndGlyphs" fill="#e9effc">BROADCAST</text><circle cx="58" cy="24.6" r="1.4" fill="none" stroke="#e9effc" stroke-width="0.45"/></g><g transform="translate(753 688.4) rotate(-45) scale(2.09)"><path d="M0 0H54.5Q60.1 0 60.1 5.4Q60.1 9.4 57.6 10.45Q60.1 11.5 60.1 15.5Q60.1 20.9 54.5 20.9H0Z" fill="#e9effc"/><rect x="3.3" y="3.3" width="25.9" height="14.3" fill="#fff"/><path d="M6.6 7.5H23.4a2.5 2.5 0 0 1 0 5.1H6.6Z" fill="#e9effc"/><path d="M32.6 3.3H53.6a2.7 2.7 0 0 1 0 5.5H32.6Z" fill="#fff"/><path d="M32.6 12.1H53.6a2.7 2.7 0 0 1 0 5.5H32.6Z" fill="#fff"/><text x="-0.4" y="33.4" font-family="Liberation Sans" font-weight="bold" font-size="14.4" textLength="56" lengthAdjust="spacingAndGlyphs" fill="#e9effc">DEVA</text><text x="0" y="39.8" font-family="Liberation Sans" font-weight="bold" font-size="5.2" textLength="56.5" lengthAdjust="spacingAndGlyphs" fill="#e9effc">BROADCAST</text><circle cx="58" cy="24.6" r="1.4" fill="none" stroke="#e9effc" stroke-width="0.45"/></g><g transform="translate(903 688.4) rotate(-45) scale(2.09)"><path d="M0 0H54.5Q60.1 0 60.1 5.4Q60.1 9.4 57.6 10.45Q60.1 11.5 60.1 15.5Q60.1 20.9 54.5 20.9H0Z" fill="#e9effc"/><rect x="3.3" y="3.3" width="25.9" height="14.3" fill="#fff"/><path d="M6.6 7.5H23.4a2.5 2.5 0 0 1 0 5.1H6.6Z" fill="#e9effc"/><path d="M32.6 3.3H53.6a2.7 2.7 0 0 1 0 5.5H32.6Z" fill="#fff"/><path d="M32.6 12.1H53.6a2.7 2.7 0 0 1 0 5.5H32.6Z" fill="#fff"/><text x="-0.4" y="33.4" font-family="Liberation Sans" font-weight="bold" font-size="14.4" textLength="56" lengthAdjust="spacingAndGlyphs" fill="#e9effc">DEVA</text><text x="0" y="39.8" font-family="Liberation Sans" font-weight="bold" font-size="5.2" textLength="56.5" lengthAdjust="spacingAndGlyphs" fill="#e9effc">BROADCAST</text><circle cx="58" cy="24.6" r="1.4" fill="none" stroke="#e9effc" stroke-width="0.45"/></g><g transform="translate(1053 688.4) rotate(-45) scale(2.09)"><path d="M0 0H54.5Q60.1 0 60.1 5.4Q60.1 9.4 57.6 10.45Q60.1 11.5 60.1 15.5Q60.1 20.9 54.5 20.9H0Z" fill="#e9effc"/><rect x="3.3" y="3.3" width="25.9" height="14.3" fill="#fff"/><path d="M6.6 7.5H23.4a2.5 2.5 0 0 1 0 5.1H6.6Z" fill="#e9effc"/><path d="M32.6 3.3H53.6a2.7 2.7 0 0 1 0 5.5H32.6Z" fill="#fff"/><path d="M32.6 12.1H53.6a2.7 2.7 0 0 1 0 5.5H32.6Z" fill="#fff"/><text x="-0.4" y="33.4" font-family="Liberation Sans" font-weight="bold" font-size="14.4" textLength="56" lengthAdjust="spacingAndGlyphs" fill="#e9effc">DEVA</text><text x="0" y="39.8" font-family="Liberation Sans" font-weight="bold" font-size="5.2" textLength="56.5" lengthAdjust="spacingAndGlyphs" fill="#e9effc">BROADCAST</text><circle cx="58" cy="24.6" r="1.4" fill="none" stroke="#e9effc" stroke-width="0.45"/></g><g transform="translate(1203 688.4) rotate(-45) scale(2.09)"><path d="M0 0H54.5Q60.1 0 60.1 5.4Q60.1 9.4 57.6 10.45Q60.1 11.5 60.1 15.5Q60.1 20.9 54.5 20.9H0Z" fill="#e9effc"/><rect x="3.3" y="3.3" width="25.9" height="14.3" fill="#fff"/><path d="M6.6 7.5H23.4a2.5 2.5 0 0 1 0 5.1H6.6Z" fill="#e9effc"/><path d="M32.6 3.3H53.6a2.7 2.7 0 0 1 0 5.5H32.6Z" fill="#fff"/><path d="M32.6 12.1H53.6a2.7 2.7 0 0 1 0 5.5H32.6Z" fill="#fff"/><text x="-0.4" y="33.4" font-family="Liberation Sans" font-weight="bold" font-size="14.4" textLength="56" lengthAdjust="spacingAndGlyphs" fill="#e9effc">DEVA</text><text x="0" y="39.8" font-family="Liberation Sans" font-weight="bold" font-size="5.2" textLength="56.5" lengthAdjust="spacingAndGlyphs" fill="#e9effc">BROADCAST</text><circle cx="58" cy="24.6" r="1.4" fill="none" stroke="#e9effc" stroke-width="0.45"/></g></svg>
<div class="a" style="left:40.0px;top:40.0px;width:1280.0px;height:693.0px;background:#f0f0f0;"></div>
<div class="a" style="left:40.0px;top:40.0px;width:1280.0px;height:28.0px;background:#fff;"></div>
<div class="a" style="left:43.0px;top:44.6px;width:8.0px;height:5.8px;background:#1430d8;border-radius:1px;"></div>
<div class="a" style="left:44.4px;top:46.0px;width:5.2px;height:3.0px;border:0.9px solid #e8ecff;border-radius:0.8px;"></div>
<div class="t" style="left:55.3px;top:41.6px;line-height:12px;font-size:7.6px;">DVB Explorer - DEVA Broadcast Ltd.</div>
<div class="t" style="left:45.0px;top:57.2px;line-height:12px;font-size:8.15px;"><u>C</u>onfiguration</div>
<div class="t" style="left:103.2px;top:57.2px;line-height:12px;font-size:8.15px;"><u>S</u>ettings</div>
<div class="t" style="left:140.4px;top:57.2px;line-height:12px;font-size:8.15px;"><u>L</u>ayouts</div>
<div class="t" style="left:177.0px;top:57.2px;line-height:12px;font-size:8.15px;"><u>A</u>bout</div>
<div class="t" style="left:208.7px;top:57.2px;line-height:12px;font-size:8.15px;"><u>E</u>xit</div>
<svg class="a" style="left:1230px;top:40px" width="90" height="16" viewBox="0 0 90 16"><g stroke="#222" stroke-width="0.8" fill="none"><path d="M9.3 6.9H16.3"/><path d="M39.6 5.4h5v4.6h-5z M41.2 5.4V3.9h5v4.6h-1.6"/><path d="M69.7 3.5l6.8 6.6M76.5 3.5l-6.8 6.6"/></g></svg>
<div class="a" style="left:40.0px;top:68.0px;width:234.0px;height:601.8px;background:#fff;border:1px solid #5a5a5a;border-top-color:#8a8a8a;"></div>
<div class="a hdr" style="left:41px;top:69px;width:232px;height:16.5px;border-bottom:1px solid #b8b8b8;"></div>
<svg class="a" style="left:45.8px;top:73.2px" width="7" height="7" viewBox="0 0 8 8"><path d="M1 1l3 2.6 3-2.6M1 4.2l3 2.6 3-2.6" stroke="#111" stroke-width="1.35" fill="none"/></svg>
<div class="t" style="left:57.8px;top:71.9px;line-height:12px;">Transport stream tables</div>
<div class="a" style="left:45.4px;top:86.2px;width:25.4px;height:11.4px;background:#0a72dc;border:1px dotted rgba(255,200,140,0.55);"></div>
<div class="t" style="left:47.0px;top:86.6px;line-height:12px;color:#fff;">Tables</div>
<div class="a" style="left:51.0px;top:103.5px;width:6.8px;height:1.0px;background:#dadada;"></div>
<div class="a" style="left:62.5px;top:109.0px;width:1.0px;height:126.7px;background:#dadada;"></div>
<div class="a" style="left:63.0px;top:115.5px;width:6.8px;height:1.0px;background:#dadada;"></div>
<div class="a" style="left:63.0px;top:127.5px;width:6.8px;height:1.0px;background:#dadada;"></div>
<div class="a" style="left:63.0px;top:139.5px;width:6.8px;height:1.0px;background:#dadada;"></div>
<div class="a" style="left:63.0px;top:151.4px;width:6.8px;height:1.0px;background:#dadada;"></div>
<div class="a" style="left:63.0px;top:163.4px;width:6.8px;height:1.0px;background:#dadada;"></div>
<div class="a" style="left:63.0px;top:175.4px;width:6.8px;height:1.0px;background:#dadada;"></div>
<div class="a" style="left:63.0px;top:187.3px;width:6.8px;height:1.0px;background:#dadada;"></div>
<div class="a" style="left:63.0px;top:199.3px;width:6.8px;height:1.0px;background:#dadada;"></div>
<div class="a" style="left:63.0px;top:211.3px;width:6.8px;height:1.0px;background:#dadada;"></div>
<div class="a" style="left:63.0px;top:223.2px;width:6.8px;height:1.0px;background:#dadada;"></div>
<div class="a" style="left:63.0px;top:235.2px;width:6.8px;height:1.0px;background:#dadada;"></div>
<div class="a" style="left:51.0px;top:247.2px;width:6.8px;height:1.0px;background:#dadada;"></div>
<div class="a" style="left:62.5px;top:252.7px;width:1.0px;height:18.9px;background:#dadada;"></div>
<div class="a" style="left:63.0px;top:259.2px;width:6.8px;height:1.0px;background:#dadada;"></div>
<div class="a" style="left:63.0px;top:271.1px;width:6.8px;height:1.0px;background:#dadada;"></div>
<div class="a" style="left:51.0px;top:283.1px;width:6.8px;height:1.0px;background:#dadada;"></div>
<div class="a" style="left:51.0px;top:295.1px;width:6.8px;height:1.0px;background:#dadada;"></div>
<div class="a" style="left:51.0px;top:307.0px;width:6.8px;height:1.0px;background:#dadada;"></div>
<div class="a" style="left:51.0px;top:319.0px;width:6.8px;height:1.0px;background:#dadada;"></div>
<div class="a" style="left:51.0px;top:331.0px;width:6.8px;height:1.0px;background:#dadada;"></div>
<div class="a" style="left:62.5px;top:336.5px;width:1.0px;height:7.0px;background:#dadada;"></div>
<div class="a" style="left:63.0px;top:342.9px;width:6.8px;height:1.0px;background:#dadada;"></div>
<div class="a" style="left:74.5px;top:348.4px;width:1.0px;height:7.0px;background:#dadada;"></div>
<div class="a" style="left:75.0px;top:354.9px;width:6.8px;height:1.0px;background:#dadada;"></div>
<div class="a" style="left:86.5px;top:360.4px;width:1.0px;height:246.4px;background:#dadada;"></div>
<div class="a" style="left:87.0px;top:366.9px;width:6.8px;height:1.0px;background:#dadada;"></div>
<div class="a" style="left:87.0px;top:378.9px;width:6.8px;height:1.0px;background:#dadada;"></div>
<div class="a" style="left:87.0px;top:390.8px;width:6.8px;height:1.0px;background:#dadada;"></div>
<div class="a" style="left:87.0px;top:402.8px;width:6.8px;height:1.0px;background:#dadada;"></div>
<div class="a" style="left:87.0px;top:414.8px;width:6.8px;height:1.0px;background:#dadada;"></div>
<div class="a" style="left:87.0px;top:426.7px;width:6.8px;height:1.0px;background:#dadada;"></div>
<div class="a" style="left:87.0px;top:438.7px;width:6.8px;height:1.0px;background:#dadada;"></div>
<div class="a" style="left:87.0px;top:450.7px;width:6.8px;height:1.0px;background:#dadada;"></div>
<div class="a" style="left:87.0px;top:462.7px;width:6.8px;height:1.0px;background:#dadada;"></div>
<div class="a" style="left:87.0px;top:474.6px;width:6.8px;height:1.0px;background:#dadada;"></div>
<div class="a" style="left:87.0px;top:486.6px;width:6.8px;height:1.0px;background:#dadada;"></div>
<div class="a" style="left:87.0px;top:498.6px;width:6.8px;height:1.0px;background:#dadada;"></div>
<div class="a" style="left:87.0px;top:510.5px;width:6.8px;height:1.0px;background:#dadada;"></div>
<div class="a" style="left:87.0px;top:522.5px;width:6.8px;height:1.0px;background:#dadada;"></div>
<div class="a" style="left:98.5px;top:528.0px;width:1.0px;height:7.0px;background:#dadada;"></div>
<div class="a" style="left:99.0px;top:534.5px;width:6.8px;height:1.0px;background:#dadada;"></div>
<div class="a" style="left:110.5px;top:540.0px;width:1.0px;height:18.9px;background:#dadada;"></div>
<div class="a" style="left:111.0px;top:546.4px;width:6.8px;height:1.0px;background:#dadada;"></div>
<div class="a" style="left:111.0px;top:558.4px;width:6.8px;height:1.0px;background:#dadada;"></div>
<div class="a" style="left:87.0px;top:570.4px;width:6.8px;height:1.0px;background:#dadada;"></div>
<div class="a" style="left:87.0px;top:582.4px;width:6.8px;height:1.0px;background:#dadada;"></div>
<div class="a" style="left:87.0px;top:594.3px;width:6.8px;height:1.0px;background:#dadada;"></div>
<div class="a" style="left:87.0px;top:606.3px;width:6.8px;height:1.0px;background:#dadada;"></div>
<div class="a" style="left:50.5px;top:98.0px;width:1.0px;height:233.5px;background:#dadada;"></div>
<div class="a" style="left:48.0px;top:100.8px;width:6.0px;height:6.0px;background:linear-gradient(135deg,#fff,#e8e8e8);border:1px solid #acacac;border-radius:1px;"></div>
<div class="a" style="left:49.5px;top:103.5px;width:3.0px;height:0.9px;background:#4558b8;"></div>
<div class="t" style="left:59.8px;top:99.0px;line-height:12px;">CAT</div>
<div class="t" style="left:71.8px;top:111.0px;line-height:12px;">table_id = 1 [0x1]</div>
<div class="t" style="left:71.8px;top:122.9px;line-height:12px;">section_syntax_indicator = 1 [0x1]</div>
<div class="t" style="left:71.8px;top:134.9px;line-height:12px;">zero = 0, [0x0]</div>
<div class="t" style="left:71.8px;top:146.9px;line-height:12px;">reserved = 3 [0x3]</div>
<div class="t" style="left:71.8px;top:158.9px;line-height:12px;">section_length = 9 [0x9]</div>
<div class="t" style="left:71.8px;top:170.8px;line-height:12px;">reserved = 262143 [0x3FFFF]</div>
<div class="t" style="left:71.8px;top:182.8px;line-height:12px;">version_number = 1 [0x1]</div>
<div class="t" style="left:71.8px;top:194.8px;line-height:12px;">current_next_indicator = 1 [0x1]</div>
<div class="t" style="left:71.8px;top:206.7px;line-height:12px;">section_number = 0 [0x0]</div>
<div class="t" style="left:71.8px;top:218.7px;line-height:12px;">last_section_number = 0 [0x0]</div>
<div class="t" style="left:71.8px;top:230.7px;line-height:12px;">CRC_32 = 3588029260 [0xD5DCFB4C]</div>
<div class="a" style="left:48.0px;top:244.5px;width:6.0px;height:6.0px;background:linear-gradient(135deg,#fff,#e8e8e8);border:1px solid #acacac;border-radius:1px;"></div>
<div class="a" style="left:49.5px;top:247.1px;width:3.0px;height:0.9px;background:#4558b8;"></div>
<div class="t" style="left:59.8px;top:242.6px;line-height:12px;">Event Information Tables (68)</div>
<div class="a" style="left:60.0px;top:256.5px;width:6.0px;height:6.0px;background:linear-gradient(135deg,#fff,#e8e8e8);border:1px solid #acacac;border-radius:1px;"></div>
<div class="a" style="left:61.5px;top:259.1px;width:3.0px;height:0.9px;background:#4558b8;"></div>
<div class="a" style="left:62.5px;top:258.0px;width:0.9px;height:3.0px;background:#4558b8;"></div>
<div class="t" style="left:71.8px;top:254.6px;line-height:12px;">Actual present/following (4)</div>
<div class="a" style="left:60.0px;top:268.4px;width:6.0px;height:6.0px;background:linear-gradient(135deg,#fff,#e8e8e8);border:1px solid #acacac;border-radius:1px;"></div>
<div class="a" style="left:61.5px;top:271.0px;width:3.0px;height:0.9px;background:#4558b8;"></div>
<div class="a" style="left:62.5px;top:269.9px;width:0.9px;height:3.0px;background:#4558b8;"></div>
<div class="t" style="left:71.8px;top:266.6px;line-height:12px;">Actual schedules (64)</div>
<div class="a" style="left:48.0px;top:280.4px;width:6.0px;height:6.0px;background:linear-gradient(135deg,#fff,#e8e8e8);border:1px solid #acacac;border-radius:1px;"></div>
<div class="a" style="left:49.5px;top:283.0px;width:3.0px;height:0.9px;background:#4558b8;"></div>
<div class="a" style="left:50.5px;top:281.9px;width:0.9px;height:3.0px;background:#4558b8;"></div>
<div class="t" style="left:59.8px;top:278.6px;line-height:12px;">PAT (TS ID 10)</div>
<div class="a" style="left:48.0px;top:292.4px;width:6.0px;height:6.0px;background:linear-gradient(135deg,#fff,#e8e8e8);border:1px solid #acacac;border-radius:1px;"></div>
<div class="a" style="left:49.5px;top:295.0px;width:3.0px;height:0.9px;background:#4558b8;"></div>
<div class="a" style="left:50.5px;top:293.9px;width:0.9px;height:3.0px;background:#4558b8;"></div>
<div class="t" style="left:59.8px;top:290.5px;line-height:12px;">Program Map Tables (2)</div>
<div class="a" style="left:48.0px;top:304.3px;width:6.0px;height:6.0px;background:linear-gradient(135deg,#fff,#e8e8e8);border:1px solid #acacac;border-radius:1px;"></div>
<div class="a" style="left:49.5px;top:306.9px;width:3.0px;height:0.9px;background:#4558b8;"></div>
<div class="a" style="left:50.5px;top:305.8px;width:0.9px;height:3.0px;background:#4558b8;"></div>
<div class="t" style="left:59.8px;top:302.5px;line-height:12px;">SDT (1)</div>
<div class="a" style="left:48.0px;top:316.3px;width:6.0px;height:6.0px;background:linear-gradient(135deg,#fff,#e8e8e8);border:1px solid #acacac;border-radius:1px;"></div>
<div class="a" style="left:49.5px;top:318.9px;width:3.0px;height:0.9px;background:#4558b8;"></div>
<div class="a" style="left:50.5px;top:317.8px;width:0.9px;height:3.0px;background:#4558b8;"></div>
<div class="t" style="left:59.8px;top:314.5px;line-height:12px;">Application Information Tables (1)</div>
<div class="a" style="left:48.0px;top:328.3px;width:6.0px;height:6.0px;background:linear-gradient(135deg,#fff,#e8e8e8);border:1px solid #acacac;border-radius:1px;"></div>
<div class="a" style="left:49.5px;top:330.9px;width:3.0px;height:0.9px;background:#4558b8;"></div>
<div class="t" style="left:59.8px;top:326.4px;line-height:12px;">NIT (1)</div>
<div class="a" style="left:60.0px;top:340.2px;width:6.0px;height:6.0px;background:linear-gradient(135deg,#fff,#e8e8e8);border:1px solid #acacac;border-radius:1px;"></div>
<div class="a" style="left:61.5px;top:342.8px;width:3.0px;height:0.9px;background:#4558b8;"></div>
<div class="t" style="left:71.8px;top:338.4px;line-height:12px;">Actual (1)</div>
<div class="a" style="left:72.0px;top:352.2px;width:6.0px;height:6.0px;background:linear-gradient(135deg,#fff,#e8e8e8);border:1px solid #acacac;border-radius:1px;"></div>
<div class="a" style="left:73.5px;top:354.8px;width:3.0px;height:0.9px;background:#4558b8;"></div>
<div class="t" style="left:83.8px;top:350.4px;line-height:12px;">NIT_actual (network_id ID 12552, s0)</div>
<div class="t" style="left:95.8px;top:362.3px;line-height:12px;">table_id = 64 [0x40]</div>
<div class="t" style="left:95.8px;top:374.3px;line-height:12px;">section_syntax_indicator = 1 [0x1]</div>
<div class="t" style="left:95.8px;top:386.3px;line-height:12px;">reserved_future_use = 1 [0x1]</div>
<div class="t" style="left:95.8px;top:398.2px;line-height:12px;">reserved = 3 [0x3]</div>
<div class="t" style="left:95.8px;top:410.2px;line-height:12px;">section_length = 49 [0x31]</div>
<div class="t" style="left:95.8px;top:422.2px;line-height:12px;">network_id = 12552 [0x3108]</div>
<div class="t" style="left:95.8px;top:434.2px;line-height:12px;">reserved = 3 [0x3]</div>
<div class="t" style="left:95.8px;top:446.1px;line-height:12px;">version_number = 7 [0x7]</div>
<div class="t" style="left:95.8px;top:458.1px;line-height:12px;">current_next_indicator = 1 [0x1]</div>
<div class="t" style="left:95.8px;top:470.1px;line-height:12px;">section_number = 0 [0x0]</div>
<div class="t" style="left:95.8px;top:482.0px;line-height:12px;">last_section_number = 0 [0x0]</div>
<div class="t" style="left:95.8px;top:494.0px;line-height:12px;">reserved_future_use = 15 [0xF]</div>
<div class="t" style="left:95.8px;top:506.0px;line-height:12px;">network_descriptors_length = 12 [0xC]</div>
<div class="a" style="left:84.0px;top:519.8px;width:6.0px;height:6.0px;background:linear-gradient(135deg,#fff,#e8e8e8);border:1px solid #acacac;border-radius:1px;"></div>
<div class="a" style="left:85.5px;top:522.4px;width:3.0px;height:0.9px;background:#4558b8;"></div>
<div class="t" style="left:95.8px;top:517.9px;line-height:12px;">network_descriptor</div>
<div class="a" style="left:96.0px;top:531.8px;width:6.0px;height:6.0px;background:linear-gradient(135deg,#fff,#e8e8e8);border:1px solid #acacac;border-radius:1px;"></div>
<div class="a" style="left:97.5px;top:534.4px;width:3.0px;height:0.9px;background:#4558b8;"></div>
<div class="t" style="left:107.8px;top:529.9px;line-height:12px;">tag = 64 [0x40] network_name_descriptor</div>
<div class="t" style="left:119.8px;top:541.9px;line-height:12px;">descriptor_length = 10 [0xA]</div>
<div class="t" style="left:119.8px;top:553.9px;line-height:12px;">network_name = 4K_Pruebas</div>
<div class="t" style="left:95.8px;top:565.8px;line-height:12px;">reserved_future_use = 15 [0xF]</div>
<div class="t" style="left:95.8px;top:577.8px;line-height:12px;">transport_stream_loop_length = 24 [0x18]</div>
<div class="a" style="left:84.0px;top:591.6px;width:6.0px;height:6.0px;background:linear-gradient(135deg,#fff,#e8e8e8);border:1px solid #acacac;border-radius:1px;"></div>
<div class="a" style="left:85.5px;top:594.2px;width:3.0px;height:0.9px;background:#4558b8;"></div>
<div class="a" style="left:86.5px;top:593.1px;width:0.9px;height:3.0px;background:#4558b8;"></div>
<div class="t" style="left:95.8px;top:589.8px;line-height:12px;">transport_stream_loop</div>
<div class="t" style="left:95.8px;top:601.7px;line-height:12px;">CRC_32 = 1952713730 [0x74640C02]</div>
<div class="a hdr" style="left:41px;top:629px;width:229.8px;height:15.6px;"></div>
<div class="a" style="left:41.0px;top:646.6px;width:228.5px;height:1.0px;background:#cdcdcd;"></div>
<div class="a hdr" style="left:41px;top:648px;width:229.8px;height:16.6px;"></div>
<div class="a" style="left:41.0px;top:666.4px;width:228.5px;height:1.0px;background:#cdcdcd;"></div>
<svg class="a" style="left:45.6px;top:633.6px" width="7" height="7" viewBox="0 0 8 8"><path d="M1 1l2.6 3-2.6 3M4.2 1l2.6 3-2.6 3" stroke="#111" stroke-width="1.35" fill="none"/></svg>
<div class="t" style="left:57.4px;top:631.6px;line-height:12px;">Services</div>
<svg class="a" style="left:45.6px;top:653.6px" width="7" height="7" viewBox="0 0 8 8"><path d="M1 1l2.6 3-2.6 3M4.2 1l2.6 3-2.6 3" stroke="#111" stroke-width="1.35" fill="none"/></svg>
<div class="t" style="left:57.4px;top:651.6px;line-height:12px;">PIDs</div>
<div class="a" style="left:275.0px;top:83.0px;width:1043.9px;height:360.3px;background:#fff;border:1px solid #d9d9d9;"></div>
<div class="a" style="left:275.4px;top:68.5px;width:29.9px;height:15.5px;background:#fff;border:1px solid #d9d9d9;border-bottom:none;"></div>
<div class="t" style="left:279.4px;top:69.6px;line-height:12px;">RF</div>
<div class="a" style="left:305.3px;top:70.0px;width:28.7px;height:13.3px;background:#f0f0f0;border:1px solid #d9d9d9;border-bottom:none;"></div>
<div class="t" style="left:308.5px;top:71.0px;line-height:12px;">Bitrate</div>
<div class="a" style="left:333.0px;top:70.0px;width:32.7px;height:13.3px;background:#f0f0f0;border:1px solid #d9d9d9;border-bottom:none;"></div>
<div class="t" style="left:336.2px;top:71.0px;line-height:12px;">Service</div>
<div class="a" style="left:364.7px;top:70.0px;width:29.3px;height:13.3px;background:#f0f0f0;border:1px solid #d9d9d9;border-bottom:none;"></div>
<div class="t" style="left:367.9px;top:71.0px;line-height:12px;">PCR</div>
<div class="a" style="left:393.0px;top:70.0px;width:28.7px;height:13.3px;background:#f0f0f0;border:1px solid #d9d9d9;border-bottom:none;"></div>
<div class="t" style="left:396.2px;top:71.0px;line-height:12px;">EIT</div>
<div class="a" style="left:420.7px;top:70.0px;width:27.8px;height:13.3px;background:#f0f0f0;border:1px solid #d9d9d9;border-bottom:none;"></div>
<div class="t" style="left:423.9px;top:71.0px;line-height:12px;">TV</div>
<div class="a" style="left:286.3px;top:95.2px;width:303.3px;height:257.8px;border:1px solid #dcdcdc;"></div>
<div class="t" style="left:290.0px;top:90.1px;line-height:12px;background:#fff;padding:0 2px;">Indicators</div>
<div class="t" style="left:294.8px;top:110.4px;line-height:12px;">SSI</div>
<div class="t" style="left:295.8px;top:122.6px;line-height:12px;">100 %</div>
<div class="a" style="left:295.0px;top:282.3px;width:10.0px;height:60.1px;background:#e00000;"></div>
<div class="a" style="left:295.0px;top:232.3px;width:10.0px;height:50.1px;background:#dcdc00;"></div>
<div class="a" style="left:295.0px;top:142.2px;width:10.0px;height:90.1px;background:#00d400;"></div>
<svg class="a" style="left:295.0px;top:142.2px" width="10" height="200.2" viewBox="0 0 10 200.2"><path d="M0 1.20h10M0 2.95h10M0 4.70h10M0 6.45h10M0 8.20h10M0 9.95h10M0 11.70h10M0 13.45h10M0 15.20h10M0 16.95h10M0 18.70h10M0 20.45h10M0 22.20h10M0 23.95h10M0 25.70h10M0 27.45h10M0 29.20h10M0 30.95h10M0 32.70h10M0 34.45h10M0 36.20h10M0 37.95h10M0 39.70h10M0 41.45h10M0 43.20h10M0 44.95h10M0 46.70h10M0 48.45h10M0 50.20h10M0 51.95h10M0 53.70h10M0 55.45h10M0 57.20h10M0 58.95h10M0 60.70h10M0 62.45h10M0 64.20h10M0 65.95h10M0 67.70h10M0 69.45h10M0 71.20h10M0 72.95h10M0 74.70h10M0 76.45h10M0 78.20h10M0 79.95h10M0 81.70h10M0 83.45h10M0 85.20h10M0 86.95h10M0 88.70h10M0 90.45h10M0 92.20h10M0 93.95h10M0 95.70h10M0 97.45h10M0 99.20h10M0 100.95h10M0 102.70h10M0 104.45h10M0 106.20h10M0 107.95h10M0 109.70h10M0 111.45h10M0 113.20h10M0 114.95h10M0 116.70h10M0 118.45h10M0 120.20h10M0 121.95h10M0 123.70h10M0 125.45h10M0 127.20h10M0 128.95h10M0 130.70h10M0 132.45h10M0 134.20h10M0 135.95h10M0 137.70h10M0 139.45h10M0 141.20h10M0 142.95h10M0 144.70h10M0 146.45h10M0 148.20h10M0 149.95h10M0 151.70h10M0 153.45h10M0 155.20h10M0 156.95h10M0 158.70h10M0 160.45h10M0 162.20h10M0 163.95h10M0 165.70h10M0 167.45h10M0 169.20h10M0 170.95h10M0 172.70h10M0 174.45h10M0 176.20h10M0 177.95h10M0 179.70h10M0 181.45h10M0 183.20h10M0 184.95h10M0 186.70h10M0 188.45h10M0 190.20h10M0 191.95h10M0 193.70h10M0 195.45h10M0 197.20h10M0 198.95h10" stroke="rgba(0,0,0,0.42)" stroke-width="0.62" fill="none"/><path d="M0.4 0V200.2M9.6 0V200.2" stroke="rgba(0,0,0,0.62)" stroke-width="0.8"/></svg>
<div class="t" style="left:308.8px;top:139.0px;line-height:12px;">100</div>
<div class="t" style="left:308.8px;top:176.6px;line-height:12px;">80</div>
<div class="t" style="left:308.8px;top:216.6px;line-height:12px;">60</div>
<div class="t" style="left:308.8px;top:256.6px;line-height:12px;">40</div>
<div class="t" style="left:308.8px;top:296.6px;line-height:12px;">20</div>
<div class="t" style="left:308.8px;top:333.8px;line-height:12px;">0</div>
<div class="t" style="left:331.5px;top:110.4px;line-height:12px;">SQI</div>
<div class="t" style="left:332.5px;top:122.6px;line-height:12px;">100 %</div>
<div class="a" style="left:332.0px;top:282.8px;width:10.0px;height:60.1px;background:#e00000;"></div>
<div class="a" style="left:332.0px;top:232.8px;width:10.0px;height:50.1px;background:#dcdc00;"></div>
<div class="a" style="left:332.0px;top:142.7px;width:10.0px;height:90.1px;background:#00d400;"></div>
<svg class="a" style="left:332.0px;top:142.7px" width="10" height="200.2" viewBox="0 0 10 200.2"><path d="M0 1.20h10M0 2.95h10M0 4.70h10M0 6.45h10M0 8.20h10M0 9.95h10M0 11.70h10M0 13.45h10M0 15.20h10M0 16.95h10M0 18.70h10M0 20.45h10M0 22.20h10M0 23.95h10M0 25.70h10M0 27.45h10M0 29.20h10M0 30.95h10M0 32.70h10M0 34.45h10M0 36.20h10M0 37.95h10M0 39.70h10M0 41.45h10M0 43.20h10M0 44.95h10M0 46.70h10M0 48.45h10M0 50.20h10M0 51.95h10M0 53.70h10M0 55.45h10M0 57.20h10M0 58.95h10M0 60.70h10M0 62.45h10M0 64.20h10M0 65.95h10M0 67.70h10M0 69.45h10M0 71.20h10M0 72.95h10M0 74.70h10M0 76.45h10M0 78.20h10M0 79.95h10M0 81.70h10M0 83.45h10M0 85.20h10M0 86.95h10M0 88.70h10M0 90.45h10M0 92.20h10M0 93.95h10M0 95.70h10M0 97.45h10M0 99.20h10M0 100.95h10M0 102.70h10M0 104.45h10M0 106.20h10M0 107.95h10M0 109.70h10M0 111.45h10M0 113.20h10M0 114.95h10M0 116.70h10M0 118.45h10M0 120.20h10M0 121.95h10M0 123.70h10M0 125.45h10M0 127.20h10M0 128.95h10M0 130.70h10M0 132.45h10M0 134.20h10M0 135.95h10M0 137.70h10M0 139.45h10M0 141.20h10M0 142.95h10M0 144.70h10M0 146.45h10M0 148.20h10M0 149.95h10M0 151.70h10M0 153.45h10M0 155.20h10M0 156.95h10M0 158.70h10M0 160.45h10M0 162.20h10M0 163.95h10M0 165.70h10M0 167.45h10M0 169.20h10M0 170.95h10M0 172.70h10M0 174.45h10M0 176.20h10M0 177.95h10M0 179.70h10M0 181.45h10M0 183.20h10M0 184.95h10M0 186.70h10M0 188.45h10M0 190.20h10M0 191.95h10M0 193.70h10M0 195.45h10M0 197.20h10M0 198.95h10" stroke="rgba(0,0,0,0.3)" stroke-width="0.62" fill="none"/><path d="M0.4 0V200.2M9.6 0V200.2" stroke="rgba(0,0,0,0.62)" stroke-width="0.8"/></svg>
<div class="t" style="left:345.8px;top:139.0px;line-height:12px;">100</div>
<div class="t" style="left:345.8px;top:176.6px;line-height:12px;">80</div>
<div class="t" style="left:345.8px;top:216.6px;line-height:12px;">60</div>
<div class="t" style="left:345.8px;top:256.6px;line-height:12px;">40</div>
<div class="t" style="left:345.8px;top:296.6px;line-height:12px;">20</div>
<div class="t" style="left:345.8px;top:333.8px;line-height:12px;">0</div>
<div class="t" style="left:368.2px;top:110.4px;line-height:12px;">RSSI</div>
<div class="t" style="left:369.2px;top:122.6px;line-height:12px;">72 dBµV</div>
<div class="a" style="left:369.0px;top:282.8px;width:10.0px;height:60.1px;background:#e00000;"></div>
<div class="a" style="left:369.0px;top:242.8px;width:10.0px;height:40.0px;background:#dcdc00;"></div>
<div class="a" style="left:369.0px;top:198.8px;width:10.0px;height:44.0px;background:#00d400;"></div>
<div class="a" style="left:369.0px;top:142.7px;width:10.0px;height:56.1px;background:#007400;"></div>
<svg class="a" style="left:369.0px;top:142.7px" width="10" height="200.2" viewBox="0 0 10 200.2"><path d="M0 1.20h10M0 2.95h10M0 4.70h10M0 6.45h10M0 8.20h10M0 9.95h10M0 11.70h10M0 13.45h10M0 15.20h10M0 16.95h10M0 18.70h10M0 20.45h10M0 22.20h10M0 23.95h10M0 25.70h10M0 27.45h10M0 29.20h10M0 30.95h10M0 32.70h10M0 34.45h10M0 36.20h10M0 37.95h10M0 39.70h10M0 41.45h10M0 43.20h10M0 44.95h10M0 46.70h10M0 48.45h10M0 50.20h10M0 51.95h10M0 53.70h10M0 55.45h10M0 57.20h10M0 58.95h10M0 60.70h10M0 62.45h10M0 64.20h10M0 65.95h10M0 67.70h10M0 69.45h10M0 71.20h10M0 72.95h10M0 74.70h10M0 76.45h10M0 78.20h10M0 79.95h10M0 81.70h10M0 83.45h10M0 85.20h10M0 86.95h10M0 88.70h10M0 90.45h10M0 92.20h10M0 93.95h10M0 95.70h10M0 97.45h10M0 99.20h10M0 100.95h10M0 102.70h10M0 104.45h10M0 106.20h10M0 107.95h10M0 109.70h10M0 111.45h10M0 113.20h10M0 114.95h10M0 116.70h10M0 118.45h10M0 120.20h10M0 121.95h10M0 123.70h10M0 125.45h10M0 127.20h10M0 128.95h10M0 130.70h10M0 132.45h10M0 134.20h10M0 135.95h10M0 137.70h10M0 139.45h10M0 141.20h10M0 142.95h10M0 144.70h10M0 146.45h10M0 148.20h10M0 149.95h10M0 151.70h10M0 153.45h10M0 155.20h10M0 156.95h10M0 158.70h10M0 160.45h10M0 162.20h10M0 163.95h10M0 165.70h10M0 167.45h10M0 169.20h10M0 170.95h10M0 172.70h10M0 174.45h10M0 176.20h10M0 177.95h10M0 179.70h10M0 181.45h10M0 183.20h10M0 184.95h10M0 186.70h10M0 188.45h10M0 190.20h10M0 191.95h10M0 193.70h10M0 195.45h10M0 197.20h10M0 198.95h10" stroke="rgba(0,0,0,0.3)" stroke-width="0.62" fill="none"/><path d="M0.4 0V200.2M9.6 0V200.2" stroke="rgba(0,0,0,0.62)" stroke-width="0.8"/></svg>
<div class="t" style="left:382.8px;top:139.0px;line-height:12px;">100</div>
<div class="t" style="left:382.8px;top:176.6px;line-height:12px;">80</div>
<div class="t" style="left:382.8px;top:216.6px;line-height:12px;">60</div>
<div class="t" style="left:382.8px;top:256.6px;line-height:12px;">40</div>
<div class="t" style="left:382.8px;top:296.6px;line-height:12px;">20</div>
<div class="t" style="left:382.8px;top:333.8px;line-height:12px;">0</div>
<div class="t" style="left:405.0px;top:110.4px;line-height:12px;">C/N</div>
<div class="t" style="left:405.2px;top:122.6px;line-height:12px;">42,50 dB</div>
<div class="a" style="left:405.0px;top:172.7px;width:10.0px;height:170.2px;background:#00d400;"></div>
<div class="a" style="left:405.0px;top:142.7px;width:10.0px;height:30.0px;background:#007400;"></div>
<svg class="a" style="left:405.0px;top:142.7px" width="10" height="200.2" viewBox="0 0 10 200.2"><path d="M0 1.20h10M0 2.95h10M0 4.70h10M0 6.45h10M0 8.20h10M0 9.95h10M0 11.70h10M0 13.45h10M0 15.20h10M0 16.95h10M0 18.70h10M0 20.45h10M0 22.20h10M0 23.95h10M0 25.70h10M0 27.45h10M0 29.20h10M0 30.95h10M0 32.70h10M0 34.45h10M0 36.20h10M0 37.95h10M0 39.70h10M0 41.45h10M0 43.20h10M0 44.95h10M0 46.70h10M0 48.45h10M0 50.20h10M0 51.95h10M0 53.70h10M0 55.45h10M0 57.20h10M0 58.95h10M0 60.70h10M0 62.45h10M0 64.20h10M0 65.95h10M0 67.70h10M0 69.45h10M0 71.20h10M0 72.95h10M0 74.70h10M0 76.45h10M0 78.20h10M0 79.95h10M0 81.70h10M0 83.45h10M0 85.20h10M0 86.95h10M0 88.70h10M0 90.45h10M0 92.20h10M0 93.95h10M0 95.70h10M0 97.45h10M0 99.20h10M0 100.95h10M0 102.70h10M0 104.45h10M0 106.20h10M0 107.95h10M0 109.70h10M0 111.45h10M0 113.20h10M0 114.95h10M0 116.70h10M0 118.45h10M0 120.20h10M0 121.95h10M0 123.70h10M0 125.45h10M0 127.20h10M0 128.95h10M0 130.70h10M0 132.45h10M0 134.20h10M0 135.95h10M0 137.70h10M0 139.45h10M0 141.20h10M0 142.95h10M0 144.70h10M0 146.45h10M0 148.20h10M0 149.95h10M0 151.70h10M0 153.45h10M0 155.20h10M0 156.95h10M0 158.70h10M0 160.45h10M0 162.20h10M0 163.95h10M0 165.70h10M0 167.45h10M0 169.20h10M0 170.95h10M0 172.70h10M0 174.45h10M0 176.20h10M0 177.95h10M0 179.70h10M0 181.45h10M0 183.20h10M0 184.95h10M0 186.70h10M0 188.45h10M0 190.20h10M0 191.95h10M0 193.70h10M0 195.45h10M0 197.20h10M0 198.95h10" stroke="rgba(0,0,0,0.3)" stroke-width="0.62" fill="none"/><path d="M0.4 0V200.2M9.6 0V200.2" stroke="rgba(0,0,0,0.62)" stroke-width="0.8"/></svg>
<div class="t" style="left:418.8px;top:139.0px;line-height:12px;">50</div>
<div class="t" style="left:418.8px;top:176.6px;line-height:12px;">40</div>
<div class="t" style="left:418.8px;top:216.6px;line-height:12px;">30</div>
<div class="t" style="left:418.8px;top:256.6px;line-height:12px;">20</div>
<div class="t" style="left:418.8px;top:296.6px;line-height:12px;">10</div>
<div class="t" style="left:418.8px;top:333.8px;line-height:12px;">0</div>
<div class="t" style="left:441.7px;top:110.4px;line-height:12px;">MER</div>
<div class="t" style="left:441.9px;top:122.6px;line-height:12px;">35,37 dB</div>
<div class="a" style="left:442.0px;top:201.3px;width:10.0px;height:141.6px;background:#00d400;"></div>
<div class="a" style="left:442.0px;top:142.7px;width:10.0px;height:58.6px;background:#007400;"></div>
<svg class="a" style="left:442.0px;top:142.7px" width="10" height="200.2" viewBox="0 0 10 200.2"><path d="M0 1.20h10M0 2.95h10M0 4.70h10M0 6.45h10M0 8.20h10M0 9.95h10M0 11.70h10M0 13.45h10M0 15.20h10M0 16.95h10M0 18.70h10M0 20.45h10M0 22.20h10M0 23.95h10M0 25.70h10M0 27.45h10M0 29.20h10M0 30.95h10M0 32.70h10M0 34.45h10M0 36.20h10M0 37.95h10M0 39.70h10M0 41.45h10M0 43.20h10M0 44.95h10M0 46.70h10M0 48.45h10M0 50.20h10M0 51.95h10M0 53.70h10M0 55.45h10M0 57.20h10M0 58.95h10M0 60.70h10M0 62.45h10M0 64.20h10M0 65.95h10M0 67.70h10M0 69.45h10M0 71.20h10M0 72.95h10M0 74.70h10M0 76.45h10M0 78.20h10M0 79.95h10M0 81.70h10M0 83.45h10M0 85.20h10M0 86.95h10M0 88.70h10M0 90.45h10M0 92.20h10M0 93.95h10M0 95.70h10M0 97.45h10M0 99.20h10M0 100.95h10M0 102.70h10M0 104.45h10M0 106.20h10M0 107.95h10M0 109.70h10M0 111.45h10M0 113.20h10M0 114.95h10M0 116.70h10M0 118.45h10M0 120.20h10M0 121.95h10M0 123.70h10M0 125.45h10M0 127.20h10M0 128.95h10M0 130.70h10M0 132.45h10M0 134.20h10M0 135.95h10M0 137.70h10M0 139.45h10M0 141.20h10M0 142.95h10M0 144.70h10M0 146.45h10M0 148.20h10M0 149.95h10M0 151.70h10M0 153.45h10M0 155.20h10M0 156.95h10M0 158.70h10M0 160.45h10M0 162.20h10M0 163.95h10M0 165.70h10M0 167.45h10M0 169.20h10M0 170.95h10M0 172.70h10M0 174.45h10M0 176.20h10M0 177.95h10M0 179.70h10M0 181.45h10M0 183.20h10M0 184.95h10M0 186.70h10M0 188.45h10M0 190.20h10M0 191.95h10M0 193.70h10M0 195.45h10M0 197.20h10M0 198.95h10" stroke="rgba(0,0,0,0.3)" stroke-width="0.62" fill="none"/><path d="M0.4 0V200.2M9.6 0V200.2" stroke="rgba(0,0,0,0.62)" stroke-width="0.8"/></svg>
<div class="t" style="left:455.8px;top:139.0px;line-height:12px;">50</div>
<div class="t" style="left:455.8px;top:176.6px;line-height:12px;">40</div>
<div class="t" style="left:455.8px;top:216.6px;line-height:12px;">30</div>
<div class="t" style="left:455.8px;top:256.6px;line-height:12px;">20</div>
<div class="t" style="left:455.8px;top:296.6px;line-height:12px;">10</div>
<div class="t" style="left:455.8px;top:333.8px;line-height:12px;">0</div>
<div class="t" style="left:478.4px;top:101.4px;line-height:12px;">FREQ</div>
<div class="t" style="left:478.4px;top:110.4px;line-height:12px;">offset</div>
<div class="t" style="left:478.6px;top:122.6px;line-height:12px;">14 KHz</div>
<div class="a" style="left:479.0px;top:241.4px;width:10.0px;height:101.5px;background:#00d400;"></div>
<div class="a" style="left:479.0px;top:142.7px;width:10.0px;height:98.7px;background:#007400;"></div>
<svg class="a" style="left:479.0px;top:142.7px" width="10" height="200.2" viewBox="0 0 10 200.2"><path d="M0 1.20h10M0 2.95h10M0 4.70h10M0 6.45h10M0 8.20h10M0 9.95h10M0 11.70h10M0 13.45h10M0 15.20h10M0 16.95h10M0 18.70h10M0 20.45h10M0 22.20h10M0 23.95h10M0 25.70h10M0 27.45h10M0 29.20h10M0 30.95h10M0 32.70h10M0 34.45h10M0 36.20h10M0 37.95h10M0 39.70h10M0 41.45h10M0 43.20h10M0 44.95h10M0 46.70h10M0 48.45h10M0 50.20h10M0 51.95h10M0 53.70h10M0 55.45h10M0 57.20h10M0 58.95h10M0 60.70h10M0 62.45h10M0 64.20h10M0 65.95h10M0 67.70h10M0 69.45h10M0 71.20h10M0 72.95h10M0 74.70h10M0 76.45h10M0 78.20h10M0 79.95h10M0 81.70h10M0 83.45h10M0 85.20h10M0 86.95h10M0 88.70h10M0 90.45h10M0 92.20h10M0 93.95h10M0 95.70h10M0 97.45h10M0 99.20h10M0 100.95h10M0 102.70h10M0 104.45h10M0 106.20h10M0 107.95h10M0 109.70h10M0 111.45h10M0 113.20h10M0 114.95h10M0 116.70h10M0 118.45h10M0 120.20h10M0 121.95h10M0 123.70h10M0 125.45h10M0 127.20h10M0 128.95h10M0 130.70h10M0 132.45h10M0 134.20h10M0 135.95h10M0 137.70h10M0 139.45h10M0 141.20h10M0 142.95h10M0 144.70h10M0 146.45h10M0 148.20h10M0 149.95h10M0 151.70h10M0 153.45h10M0 155.20h10M0 156.95h10M0 158.70h10M0 160.45h10M0 162.20h10M0 163.95h10M0 165.70h10M0 167.45h10M0 169.20h10M0 170.95h10M0 172.70h10M0 174.45h10M0 176.20h10M0 177.95h10M0 179.70h10M0 181.45h10M0 183.20h10M0 184.95h10M0 186.70h10M0 188.45h10M0 190.20h10M0 191.95h10M0 193.70h10M0 195.45h10M0 197.20h10M0 198.95h10" stroke="rgba(0,0,0,0.3)" stroke-width="0.62" fill="none"/><path d="M0.4 0V200.2M9.6 0V200.2" stroke="rgba(0,0,0,0.62)" stroke-width="0.8"/></svg>
<div class="t" style="left:492.8px;top:139.0px;line-height:12px;">1000</div>
<div class="t" style="left:492.8px;top:176.6px;line-height:12px;">600</div>
<div class="t" style="left:492.8px;top:216.6px;line-height:12px;">200</div>
<div class="t" style="left:492.8px;top:256.6px;line-height:12px;">-200</div>
<div class="t" style="left:492.8px;top:296.6px;line-height:12px;">-600</div>
<div class="t" style="left:492.8px;top:333.8px;line-height:12px;">-1000</div>
<div class="t" style="left:515.1px;top:110.4px;line-height:12px;">IFagc</div>
<div class="t" style="left:515.3px;top:122.6px;line-height:12px;">108</div>
<div class="a" style="left:516.0px;top:256.8px;width:10.0px;height:86.1px;background:#00d400;"></div>
<div class="a" style="left:516.0px;top:142.7px;width:10.0px;height:114.1px;background:#007400;"></div>
<svg class="a" style="left:516.0px;top:142.7px" width="10" height="200.2" viewBox="0 0 10 200.2"><path d="M0 1.20h10M0 2.95h10M0 4.70h10M0 6.45h10M0 8.20h10M0 9.95h10M0 11.70h10M0 13.45h10M0 15.20h10M0 16.95h10M0 18.70h10M0 20.45h10M0 22.20h10M0 23.95h10M0 25.70h10M0 27.45h10M0 29.20h10M0 30.95h10M0 32.70h10M0 34.45h10M0 36.20h10M0 37.95h10M0 39.70h10M0 41.45h10M0 43.20h10M0 44.95h10M0 46.70h10M0 48.45h10M0 50.20h10M0 51.95h10M0 53.70h10M0 55.45h10M0 57.20h10M0 58.95h10M0 60.70h10M0 62.45h10M0 64.20h10M0 65.95h10M0 67.70h10M0 69.45h10M0 71.20h10M0 72.95h10M0 74.70h10M0 76.45h10M0 78.20h10M0 79.95h10M0 81.70h10M0 83.45h10M0 85.20h10M0 86.95h10M0 88.70h10M0 90.45h10M0 92.20h10M0 93.95h10M0 95.70h10M0 97.45h10M0 99.20h10M0 100.95h10M0 102.70h10M0 104.45h10M0 106.20h10M0 107.95h10M0 109.70h10M0 111.45h10M0 113.20h10M0 114.95h10M0 116.70h10M0 118.45h10M0 120.20h10M0 121.95h10M0 123.70h10M0 125.45h10M0 127.20h10M0 128.95h10M0 130.70h10M0 132.45h10M0 134.20h10M0 135.95h10M0 137.70h10M0 139.45h10M0 141.20h10M0 142.95h10M0 144.70h10M0 146.45h10M0 148.20h10M0 149.95h10M0 151.70h10M0 153.45h10M0 155.20h10M0 156.95h10M0 158.70h10M0 160.45h10M0 162.20h10M0 163.95h10M0 165.70h10M0 167.45h10M0 169.20h10M0 170.95h10M0 172.70h10M0 174.45h10M0 176.20h10M0 177.95h10M0 179.70h10M0 181.45h10M0 183.20h10M0 184.95h10M0 186.70h10M0 188.45h10M0 190.20h10M0 191.95h10M0 193.70h10M0 195.45h10M0 197.20h10M0 198.95h10" stroke="rgba(0,0,0,0.3)" stroke-width="0.62" fill="none"/><path d="M0.4 0V200.2M9.6 0V200.2" stroke="rgba(0,0,0,0.62)" stroke-width="0.8"/></svg>
<div class="t" style="left:529.8px;top:139.0px;line-height:12px;">255</div>
<div class="t" style="left:529.8px;top:181.0px;line-height:12px;">200</div>
<div class="t" style="left:529.8px;top:221.0px;line-height:12px;">150</div>
<div class="t" style="left:529.8px;top:259.0px;line-height:12px;">100</div>
<div class="t" style="left:529.8px;top:299.0px;line-height:12px;">50</div>
<div class="t" style="left:529.8px;top:333.8px;line-height:12px;">0</div>
<div class="t" style="left:551.8px;top:101.4px;line-height:12px;">Timing</div>
<div class="t" style="left:551.8px;top:110.4px;line-height:12px;">offset</div>
<div class="t" style="left:552.0px;top:122.6px;line-height:12px;">-21 ppm</div>
<div class="a" style="left:552.0px;top:253.3px;width:10.0px;height:89.6px;background:#00d400;"></div>
<div class="a" style="left:552.0px;top:142.7px;width:10.0px;height:110.6px;background:#007400;"></div>
<svg class="a" style="left:552.0px;top:142.7px" width="10" height="200.2" viewBox="0 0 10 200.2"><path d="M0 1.20h10M0 2.95h10M0 4.70h10M0 6.45h10M0 8.20h10M0 9.95h10M0 11.70h10M0 13.45h10M0 15.20h10M0 16.95h10M0 18.70h10M0 20.45h10M0 22.20h10M0 23.95h10M0 25.70h10M0 27.45h10M0 29.20h10M0 30.95h10M0 32.70h10M0 34.45h10M0 36.20h10M0 37.95h10M0 39.70h10M0 41.45h10M0 43.20h10M0 44.95h10M0 46.70h10M0 48.45h10M0 50.20h10M0 51.95h10M0 53.70h10M0 55.45h10M0 57.20h10M0 58.95h10M0 60.70h10M0 62.45h10M0 64.20h10M0 65.95h10M0 67.70h10M0 69.45h10M0 71.20h10M0 72.95h10M0 74.70h10M0 76.45h10M0 78.20h10M0 79.95h10M0 81.70h10M0 83.45h10M0 85.20h10M0 86.95h10M0 88.70h10M0 90.45h10M0 92.20h10M0 93.95h10M0 95.70h10M0 97.45h10M0 99.20h10M0 100.95h10M0 102.70h10M0 104.45h10M0 106.20h10M0 107.95h10M0 109.70h10M0 111.45h10M0 113.20h10M0 114.95h10M0 116.70h10M0 118.45h10M0 120.20h10M0 121.95h10M0 123.70h10M0 125.45h10M0 127.20h10M0 128.95h10M0 130.70h10M0 132.45h10M0 134.20h10M0 135.95h10M0 137.70h10M0 139.45h10M0 141.20h10M0 142.95h10M0 144.70h10M0 146.45h10M0 148.20h10M0 149.95h10M0 151.70h10M0 153.45h10M0 155.20h10M0 156.95h10M0 158.70h10M0 160.45h10M0 162.20h10M0 163.95h10M0 165.70h10M0 167.45h10M0 169.20h10M0 170.95h10M0 172.70h10M0 174.45h10M0 176.20h10M0 177.95h10M0 179.70h10M0 181.45h10M0 183.20h10M0 184.95h10M0 186.70h10M0 188.45h10M0 190.20h10M0 191.95h10M0 193.70h10M0 195.45h10M0 197.20h10M0 198.95h10" stroke="rgba(0,0,0,0.3)" stroke-width="0.62" fill="none"/><path d="M0.4 0V200.2M9.6 0V200.2" stroke="rgba(0,0,0,0.62)" stroke-width="0.8"/></svg>
<div class="t" style="left:565.8px;top:139.0px;line-height:12px;">200</div>
<div class="t" style="left:565.8px;top:176.6px;line-height:12px;">120</div>
<div class="t" style="left:565.8px;top:216.6px;line-height:12px;">40</div>
<div class="t" style="left:565.8px;top:256.6px;line-height:12px;">-40</div>
<div class="t" style="left:565.8px;top:296.6px;line-height:12px;">-120</div>
<div class="t" style="left:565.8px;top:333.8px;line-height:12px;">-200</div>
<div class="a" style="left:599.2px;top:95.2px;width:117.7px;height:257.8px;border:1px solid #dcdcdc;"></div>
<div class="t" style="left:603.0px;top:90.1px;line-height:12px;background:#fff;padding:0 2px;">DVB parameters</div>
<div class="t" style="left:606.3px;top:104.6px;line-height:12px;">Standard</div>
<div class="a" style="left:666.5px;top:103.4px;width:42.1px;height:13.2px;background:#fff;border:1px solid #7d7d7d;box-shadow:0 0.9px 0 #c4c4c4, inset 0.6px 0.6px 0 #d8d8d8;"></div>
<div class="t" style="left:666.5px;top:104.6px;line-height:12px;width:39.5px;text-align:right;">DVB-T2</div>
<div class="t" style="left:606.3px;top:119.3px;line-height:12px;">Constellation</div>
<div class="a" style="left:666.5px;top:118.1px;width:42.1px;height:13.2px;background:#fff;border:1px solid #7d7d7d;box-shadow:0 0.9px 0 #c4c4c4, inset 0.6px 0.6px 0 #d8d8d8;"></div>
<div class="t" style="left:666.5px;top:119.3px;line-height:12px;width:39.5px;text-align:right;">QAM256</div>
<div class="t" style="left:606.3px;top:133.9px;line-height:12px;">FFT Mode</div>
<div class="a" style="left:666.5px;top:132.7px;width:42.1px;height:13.2px;background:#fff;border:1px solid #7d7d7d;box-shadow:0 0.9px 0 #c4c4c4, inset 0.6px 0.6px 0 #d8d8d8;"></div>
<div class="t" style="left:666.5px;top:133.9px;line-height:12px;width:39.5px;text-align:right;">32K</div>
<div class="t" style="left:606.3px;top:148.6px;line-height:12px;">Guard Interval</div>
<div class="a" style="left:666.5px;top:147.4px;width:42.1px;height:13.2px;background:#fff;border:1px solid #7d7d7d;box-shadow:0 0.9px 0 #c4c4c4, inset 0.6px 0.6px 0 #d8d8d8;"></div>
<div class="t" style="left:666.5px;top:148.6px;line-height:12px;width:39.5px;text-align:right;">1/128</div>
<div class="t" style="left:606.3px;top:163.2px;line-height:12px;">Code rate</div>
<div class="a" style="left:666.5px;top:162.0px;width:42.1px;height:13.2px;background:#fff;border:1px solid #7d7d7d;box-shadow:0 0.9px 0 #c4c4c4, inset 0.6px 0.6px 0 #d8d8d8;"></div>
<div class="t" style="left:666.5px;top:163.2px;line-height:12px;width:39.5px;text-align:right;">5/6</div>
<div class="t" style="left:606.3px;top:177.9px;line-height:12px;">Rotated</div>
<div class="a" style="left:666.5px;top:176.7px;width:42.1px;height:13.2px;background:#fff;border:1px solid #7d7d7d;box-shadow:0 0.9px 0 #c4c4c4, inset 0.6px 0.6px 0 #d8d8d8;"></div>
<div class="t" style="left:666.5px;top:177.9px;line-height:12px;width:39.5px;text-align:right;">rotated</div>
<div class="t" style="left:606.3px;top:192.6px;line-height:12px;">Short frame</div>
<div class="a" style="left:666.5px;top:191.4px;width:42.1px;height:13.2px;background:#fff;border:1px solid #7d7d7d;box-shadow:0 0.9px 0 #c4c4c4, inset 0.6px 0.6px 0 #d8d8d8;"></div>
<div class="t" style="left:666.5px;top:192.6px;line-height:12px;width:39.5px;text-align:right;">normal </div>
<div class="t" style="left:606.3px;top:207.2px;line-height:12px;">Number PLP</div>
<div class="a" style="left:666.5px;top:206.0px;width:42.1px;height:13.2px;background:#fff;border:1px solid #7d7d7d;box-shadow:0 0.9px 0 #c4c4c4, inset 0.6px 0.6px 0 #d8d8d8;"></div>
<div class="t" style="left:666.5px;top:207.2px;line-height:12px;width:39.5px;text-align:right;">1</div>
<div class="t" style="left:606.3px;top:221.9px;line-height:12px;letter-spacing:-0.12px;">Spectral inversion</div>
<div class="a" style="left:666.5px;top:220.7px;width:42.1px;height:13.2px;background:#fff;border:1px solid #7d7d7d;box-shadow:0 0.9px 0 #c4c4c4, inset 0.6px 0.6px 0 #d8d8d8;"></div>
<div class="t" style="left:666.5px;top:221.9px;line-height:12px;width:39.5px;text-align:right;">0</div>
<div class="t" style="left:606.3px;top:236.5px;line-height:12px;">VCO Code</div>
<div class="a" style="left:666.5px;top:235.3px;width:42.1px;height:13.2px;background:#fff;border:1px solid #7d7d7d;box-shadow:0 0.9px 0 #c4c4c4, inset 0.6px 0.6px 0 #d8d8d8;"></div>
<div class="t" style="left:666.5px;top:236.5px;line-height:12px;width:39.5px;text-align:right;">3690</div>
<div class="t" style="left:606.3px;top:257.7px;line-height:12px;">Demod Lock</div>
<div class="a" style="left:666.5px;top:256.5px;width:42.1px;height:13.6px;background:#2fc25c;border:2px solid #c2bec2;"></div>
<div class="t" style="left:666.5px;top:257.8px;line-height:12px;width:42.1px;text-align:center;">Locked</div>
<div class="t" style="left:606.3px;top:272.4px;line-height:12px;">FEC Lock</div>
<div class="a" style="left:666.5px;top:271.2px;width:42.1px;height:13.6px;background:#2fc25c;border:2px solid #c2bec2;"></div>
<div class="t" style="left:666.5px;top:272.5px;line-height:12px;width:42.1px;text-align:center;">Locked</div>
<div class="t" style="left:606.3px;top:287.1px;line-height:12px;">CBER</div>
<div class="t" style="left:650.0px;top:285.4px;line-height:12px;width:58.6px;text-align:right;">0,0e0</div>
<div class="t" style="left:606.3px;top:301.6px;line-height:12px;">BER</div>
<div class="t" style="left:650.0px;top:299.6px;line-height:12px;width:58.6px;text-align:right;">0,0e0</div>
<div class="t" style="left:606.3px;top:316.4px;line-height:12px;">PER</div>
<div class="t" style="left:650.0px;top:314.5px;line-height:12px;width:58.6px;text-align:right;">0,0e0</div>
<div class="a" style="left:606.0px;top:330.8px;width:54.0px;height:11.8px;background:#e6e6e6;border:1px solid #adadad;"></div>
<div class="t" style="left:606.0px;top:331.3px;line-height:12px;width:54.0px;text-align:center;">Wrong packets</div>
<div class="t" style="left:650.0px;top:329.2px;line-height:12px;width:58.3px;text-align:right;">0</div>
<div class="a" style="left:726.7px;top:95.2px;width:117.3px;height:148.8px;border:1px solid #dcdcdc;"></div>
<div class="t" style="left:731.0px;top:90.1px;line-height:12px;background:#fff;padding:0 2px;">T2 Status</div>
<div class="t" style="left:733.8px;top:104.6px;line-height:12px;">Version</div>
<div class="a" style="left:794.2px;top:103.4px;width:42.0px;height:13.2px;background:#fff;border:1px solid #7d7d7d;box-shadow:0 0.9px 0 #c4c4c4, inset 0.6px 0.6px 0 #d8d8d8;"></div>
<div class="t" style="left:794.2px;top:104.6px;line-height:12px;width:39.4px;text-align:right;">1.1.1</div>
<div class="t" style="left:733.8px;top:119.3px;line-height:12px;">Mode</div>
<div class="a" style="left:794.2px;top:118.1px;width:42.0px;height:13.2px;background:#fff;border:1px solid #7d7d7d;box-shadow:0 0.9px 0 #c4c4c4, inset 0.6px 0.6px 0 #d8d8d8;"></div>
<div class="t" style="left:794.2px;top:119.3px;line-height:12px;width:39.4px;text-align:right;">T2-Base</div>
<div class="t" style="left:733.8px;top:133.9px;line-height:12px;">Tx Mode</div>
<div class="a" style="left:794.2px;top:132.7px;width:42.0px;height:13.2px;background:#fff;border:1px solid #7d7d7d;box-shadow:0 0.9px 0 #c4c4c4, inset 0.6px 0.6px 0 #d8d8d8;"></div>
<div class="t" style="left:794.2px;top:133.9px;line-height:12px;width:39.4px;text-align:right;">SISO</div>
<div class="t" style="left:733.8px;top:148.6px;line-height:12px;">Bandwidth ext.</div>
<div class="a" style="left:794.2px;top:147.4px;width:42.0px;height:13.2px;background:#fff;border:1px solid #7d7d7d;box-shadow:0 0.9px 0 #c4c4c4, inset 0.6px 0.6px 0 #d8d8d8;"></div>
<div class="t" style="left:794.2px;top:148.6px;line-height:12px;width:39.4px;text-align:right;">extended</div>
<div class="t" style="left:733.8px;top:163.2px;line-height:12px;">Pilot Pattern</div>
<div class="a" style="left:794.2px;top:162.0px;width:42.0px;height:13.2px;background:#fff;border:1px solid #7d7d7d;box-shadow:0 0.9px 0 #c4c4c4, inset 0.6px 0.6px 0 #d8d8d8;"></div>
<div class="t" style="left:794.2px;top:163.2px;line-height:12px;width:39.4px;text-align:right;">PP7</div>
<div class="t" style="left:733.8px;top:177.9px;line-height:12px;">System ID</div>
<div class="a" style="left:794.2px;top:176.7px;width:42.0px;height:13.2px;background:#fff;border:1px solid #7d7d7d;box-shadow:0 0.9px 0 #c4c4c4, inset 0.6px 0.6px 0 #d8d8d8;"></div>
<div class="t" style="left:794.2px;top:177.9px;line-height:12px;width:39.4px;text-align:right;">32769</div>
<div class="t" style="left:733.8px;top:192.6px;line-height:12px;">Network ID</div>
<div class="a" style="left:794.2px;top:191.4px;width:42.0px;height:13.2px;background:#fff;border:1px solid #7d7d7d;box-shadow:0 0.9px 0 #c4c4c4, inset 0.6px 0.6px 0 #d8d8d8;"></div>
<div class="t" style="left:794.2px;top:192.6px;line-height:12px;width:39.4px;text-align:right;">12421</div>
<div class="t" style="left:733.8px;top:207.2px;line-height:12px;">Cell ID</div>
<div class="a" style="left:794.2px;top:206.0px;width:42.0px;height:13.2px;background:#fff;border:1px solid #7d7d7d;box-shadow:0 0.9px 0 #c4c4c4, inset 0.6px 0.6px 0 #d8d8d8;"></div>
<div class="t" style="left:794.2px;top:207.2px;line-height:12px;width:39.4px;text-align:right;">0</div>
<div class="t" style="left:733.8px;top:221.9px;line-height:12px;">Tx availability</div>
<div class="a" style="left:794.2px;top:220.7px;width:42.0px;height:13.2px;background:#fff;border:1px solid #7d7d7d;box-shadow:0 0.9px 0 #c4c4c4, inset 0.6px 0.6px 0 #d8d8d8;"></div>
<div class="t" style="left:794.2px;top:221.9px;line-height:12px;width:39.4px;text-align:right;">0</div>
<div class="a" style="left:726.7px;top:254.9px;width:117.3px;height:74.6px;border:1px solid #dcdcdc;"></div>
<div class="t" style="left:731.0px;top:249.8px;line-height:12px;background:#fff;padding:0 2px;">T2 FEF</div>
<div class="t" style="left:733.8px;top:264.8px;line-height:12px;">Present</div>
<div class="a" style="left:794.2px;top:263.6px;width:42.0px;height:13.2px;background:#fff;border:1px solid #7d7d7d;box-shadow:0 0.9px 0 #c4c4c4, inset 0.6px 0.6px 0 #d8d8d8;"></div>
<div class="t" style="left:794.2px;top:264.8px;line-height:12px;width:39.4px;text-align:right;">no</div>
<div class="t" style="left:733.8px;top:279.4px;line-height:12px;">Type</div>
<div class="a" style="left:794.2px;top:278.2px;width:42.0px;height:13.2px;background:#fff;border:1px solid #7d7d7d;box-shadow:0 0.9px 0 #c4c4c4, inset 0.6px 0.6px 0 #d8d8d8;"></div>
<div class="t" style="left:794.2px;top:279.4px;line-height:12px;width:39.4px;text-align:right;">0</div>
<div class="t" style="left:733.8px;top:294.1px;line-height:12px;">Length</div>
<div class="a" style="left:794.2px;top:292.9px;width:42.0px;height:13.2px;background:#fff;border:1px solid #7d7d7d;box-shadow:0 0.9px 0 #c4c4c4, inset 0.6px 0.6px 0 #d8d8d8;"></div>
<div class="t" style="left:794.2px;top:294.1px;line-height:12px;width:39.4px;text-align:right;">0</div>
<div class="t" style="left:733.8px;top:308.7px;line-height:12px;">Repetition</div>
<div class="a" style="left:794.2px;top:307.5px;width:42.0px;height:13.2px;background:#fff;border:1px solid #7d7d7d;box-shadow:0 0.9px 0 #c4c4c4, inset 0.6px 0.6px 0 #d8d8d8;"></div>
<div class="t" style="left:794.2px;top:308.7px;line-height:12px;width:39.4px;text-align:right;">0</div>
<div class="a" style="left:285.8px;top:364.3px;width:557.7px;height:60.7px;border:1px solid #dcdcdc;"></div>
<div class="t" style="left:290.0px;top:359.2px;line-height:12px;background:#fff;padding:0 2px;">PLP (1) Info</div>
<div class="a" style="left:293.9px;top:371.8px;width:541.8px;height:45.3px;background:#fff;border:1px solid #8da2c0;border-radius:1.5px;"></div>
<div class="a" style="left:294.9px;top:372.8px;width:539.8px;height:30.0px;background:linear-gradient(#ffffff,#f6f6f6 50%,#e8e8e8);border-bottom:1px solid #9a9a9a;"></div>
<div class="t" style="left:294.6px;top:374.4px;line-height:12px;width:23.6px;text-align:center;">PLP</div>
<div class="t" style="left:294.6px;top:383.2px;line-height:12px;width:23.6px;text-align:center;">ID</div>
<div class="t" style="left:294.6px;top:403.7px;line-height:12px;width:23.6px;text-align:center;">0</div>
<div class="a" style="left:317.8px;top:372.8px;width:1.0px;height:29.5px;background:#a9a9a9;"></div>
<div class="a" style="left:317.8px;top:402.8px;width:1.0px;height:13.4px;background:#d6d6d6;"></div>
<div class="t" style="left:318.2px;top:374.4px;line-height:12px;width:30.2px;text-align:center;">PLP</div>
<div class="t" style="left:318.2px;top:383.2px;line-height:12px;width:30.2px;text-align:center;">Type</div>
<div class="t" style="left:318.2px;top:403.7px;line-height:12px;width:30.2px;text-align:center;">TYPE1</div>
<div class="a" style="left:348.0px;top:372.8px;width:1.0px;height:29.5px;background:#a9a9a9;"></div>
<div class="a" style="left:348.0px;top:402.8px;width:1.0px;height:13.4px;background:#d6d6d6;"></div>
<div class="t" style="left:348.4px;top:374.4px;line-height:12px;width:26.5px;text-align:center;">Group</div>
<div class="t" style="left:348.4px;top:383.2px;line-height:12px;width:26.5px;text-align:center;">ID</div>
<div class="t" style="left:348.4px;top:403.7px;line-height:12px;width:26.5px;text-align:center;">1</div>
<div class="a" style="left:374.5px;top:372.8px;width:1.0px;height:29.5px;background:#a9a9a9;"></div>
<div class="a" style="left:374.5px;top:402.8px;width:1.0px;height:13.4px;background:#d6d6d6;"></div>
<div class="t" style="left:374.9px;top:374.4px;line-height:12px;width:33.5px;text-align:center;">Payload</div>
<div class="t" style="left:374.9px;top:383.2px;line-height:12px;width:33.5px;text-align:center;">type</div>
<div class="t" style="left:374.9px;top:403.7px;line-height:12px;width:33.5px;text-align:center;">TS</div>
<div class="a" style="left:408.0px;top:372.8px;width:1.0px;height:29.5px;background:#a9a9a9;"></div>
<div class="a" style="left:408.0px;top:402.8px;width:1.0px;height:13.4px;background:#d6d6d6;"></div>
<div class="t" style="left:408.4px;top:374.4px;line-height:12px;width:26.5px;text-align:center;">Code</div>
<div class="t" style="left:408.4px;top:383.2px;line-height:12px;width:26.5px;text-align:center;">rate</div>
<div class="t" style="left:408.4px;top:403.7px;line-height:12px;width:26.5px;text-align:center;">5/6</div>
<div class="a" style="left:434.5px;top:372.8px;width:1.0px;height:29.5px;background:#a9a9a9;"></div>
<div class="a" style="left:434.5px;top:402.8px;width:1.0px;height:13.4px;background:#d6d6d6;"></div>
<div class="t" style="left:434.9px;top:374.4px;line-height:12px;width:51.4px;text-align:center;">Constellation</div>
<div class="t" style="left:434.9px;top:403.7px;line-height:12px;width:51.4px;text-align:center;">QAM256</div>
<div class="a" style="left:485.9px;top:372.8px;width:1.0px;height:29.5px;background:#a9a9a9;"></div>
<div class="a" style="left:485.9px;top:402.8px;width:1.0px;height:13.4px;background:#d6d6d6;"></div>
<div class="t" style="left:486.3px;top:374.4px;line-height:12px;width:44.1px;text-align:center;">Rotated</div>
<div class="t" style="left:486.3px;top:403.7px;line-height:12px;width:44.1px;text-align:center;">Rotated</div>
<div class="a" style="left:530.0px;top:372.8px;width:1.0px;height:29.5px;background:#a9a9a9;"></div>
<div class="a" style="left:530.0px;top:402.8px;width:1.0px;height:13.4px;background:#d6d6d6;"></div>
<div class="t" style="left:530.4px;top:374.4px;line-height:12px;width:44.2px;text-align:center;">FEC Type</div>
<div class="t" style="left:530.4px;top:403.7px;line-height:12px;width:44.2px;text-align:center;">64K LDPC</div>
<div class="a" style="left:574.2px;top:372.8px;width:1.0px;height:29.5px;background:#a9a9a9;"></div>
<div class="a" style="left:574.2px;top:402.8px;width:1.0px;height:13.4px;background:#d6d6d6;"></div>
<div class="t" style="left:574.6px;top:374.4px;line-height:12px;width:43.9px;text-align:center;letter-spacing:-0.15px;">Number max</div>
<div class="t" style="left:574.6px;top:383.2px;line-height:12px;width:43.9px;text-align:center;">blocks</div>
<div class="t" style="left:574.6px;top:403.7px;line-height:12px;width:43.9px;text-align:center;">202</div>
<div class="a" style="left:618.1px;top:372.8px;width:1.0px;height:29.5px;background:#a9a9a9;"></div>
<div class="a" style="left:618.1px;top:402.8px;width:1.0px;height:13.4px;background:#d6d6d6;"></div>
<div class="t" style="left:618.5px;top:374.4px;line-height:12px;width:42.5px;text-align:center;">Frame</div>
<div class="t" style="left:618.5px;top:383.2px;line-height:12px;width:42.5px;text-align:center;">interval</div>
<div class="t" style="left:618.5px;top:403.7px;line-height:12px;width:42.5px;text-align:center;">1</div>
<div class="a" style="left:660.6px;top:372.8px;width:1.0px;height:29.5px;background:#a9a9a9;"></div>
<div class="a" style="left:660.6px;top:402.8px;width:1.0px;height:13.4px;background:#d6d6d6;"></div>
<div class="t" style="left:661.0px;top:374.4px;line-height:12px;width:30.3px;text-align:center;">TI</div>
<div class="t" style="left:661.0px;top:383.2px;line-height:12px;width:30.3px;text-align:center;">Length</div>
<div class="t" style="left:661.0px;top:403.7px;line-height:12px;width:30.3px;text-align:center;">3</div>
<div class="a" style="left:690.9px;top:372.8px;width:1.0px;height:29.5px;background:#a9a9a9;"></div>
<div class="a" style="left:690.9px;top:402.8px;width:1.0px;height:13.4px;background:#d6d6d6;"></div>
<div class="t" style="left:691.3px;top:374.4px;line-height:12px;width:26.2px;text-align:center;">TI</div>
<div class="t" style="left:691.3px;top:383.2px;line-height:12px;width:26.2px;text-align:center;">Type</div>
<div class="t" style="left:691.3px;top:403.7px;line-height:12px;width:26.2px;text-align:center;">0</div>
<div class="a" style="left:717.1px;top:372.8px;width:1.0px;height:29.5px;background:#a9a9a9;"></div>
<div class="a" style="left:717.1px;top:402.8px;width:1.0px;height:13.4px;background:#d6d6d6;"></div>
<div class="t" style="left:717.5px;top:374.4px;line-height:12px;width:47.2px;text-align:center;">PLP Mode</div>
<div class="t" style="left:717.5px;top:403.7px;line-height:12px;width:47.2px;text-align:center;">not specified</div>
<div class="a" style="left:764.3px;top:372.8px;width:1.0px;height:29.5px;background:#a9a9a9;"></div>
<div class="a" style="left:764.3px;top:402.8px;width:1.0px;height:13.4px;background:#d6d6d6;"></div>
<div class="t" style="left:764.7px;top:374.4px;line-height:12px;width:26.3px;text-align:center;">Static</div>
<div class="t" style="left:764.7px;top:383.2px;line-height:12px;width:26.3px;text-align:center;">flag</div>
<div class="t" style="left:764.7px;top:403.7px;line-height:12px;width:26.3px;text-align:center;">0</div>
<div class="a" style="left:790.6px;top:372.8px;width:1.0px;height:29.5px;background:#a9a9a9;"></div>
<div class="a" style="left:790.6px;top:402.8px;width:1.0px;height:13.4px;background:#d6d6d6;"></div>
<div class="t" style="left:791.0px;top:374.4px;line-height:12px;width:44.1px;text-align:center;">Static</div>
<div class="t" style="left:791.0px;top:383.2px;line-height:12px;width:44.1px;text-align:center;">padding flag</div>
<div class="t" style="left:791.0px;top:403.7px;line-height:12px;width:44.1px;text-align:center;">0</div>
<div class="a" style="left:854.1px;top:108.4px;width:454.1px;height:317.2px;background:#fff;border:1px solid #d9d9d9;"></div>
<div class="a" style="left:854.1px;top:95.2px;width:51.6px;height:14.0px;background:#fff;border:1px solid #d9d9d9;border-bottom:none;"></div>
<div class="t" style="left:858.6px;top:97.0px;line-height:12px;">Constellation</div>
<div class="a" style="left:905.7px;top:97.4px;width:29.7px;height:11.4px;background:#f0f0f0;border:1px solid #d9d9d9;border-bottom:none;"></div>
<div class="t" style="left:908.3px;top:98.0px;line-height:12px;">Echoes</div>
<div class="a" style="left:934.4px;top:97.4px;width:28.1px;height:11.4px;background:#f0f0f0;border:1px solid #d9d9d9;border-bottom:none;"></div>
<div class="t" style="left:937.0px;top:98.0px;line-height:12px;">FFT</div>
<svg class="a" style="left:861.2px;top:116px" width="441.3" height="302.6" viewBox="0 0 441.3 302.6"><rect width="441.3" height="302.6" fill="#000"/><path d="M100.06 6.5V294.0M115.19 6.5V294.0M130.32 6.5V294.0M145.45 6.5V294.0M160.58 6.5V294.0M175.71 6.5V294.0M190.84 6.5V294.0M205.97 6.5V294.0M236.23 6.5V294.0M251.36 6.5V294.0M266.49 6.5V294.0M281.62 6.5V294.0M296.75 6.5V294.0M311.88 6.5V294.0M327.01 6.5V294.0M342.14 6.5V294.0M83.6 24.00H359.4M83.6 39.80H359.4M83.6 55.60H359.4M83.6 71.40H359.4M83.6 87.20H359.4M83.6 103.00H359.4M83.6 118.80H359.4M83.6 134.60H359.4M83.6 166.20H359.4M83.6 182.00H359.4M83.6 197.80H359.4M83.6 213.60H359.4M83.6 229.40H359.4M83.6 245.20H359.4M83.6 261.00H359.4M83.6 276.80H359.4" stroke="#b4b4b4" stroke-width="0.95" stroke-dasharray="1.05 1.62" fill="none"/><path d="M221.10 6.0V294.5M83.6 150.40H359.4" stroke="#c8c8c8" stroke-width="0.9" fill="none"/><path d="M114.9 276.0h1.3v1.3h-1.3zM115.9 277.0h1.3v1.3h-1.3zM115.1 277.3h1.3v1.3h-1.3zM114.5 275.9h1.3v1.3h-1.3zM114.9 277.0h1.3v1.3h-1.3zM113.9 277.9h1.3v1.3h-1.3zM115.2 276.9h1.3v1.3h-1.3zM115.4 275.8h1.3v1.3h-1.3zM113.4 276.2h1.3v1.3h-1.3zM113.5 276.2h1.3v1.3h-1.3zM114.1 277.9h1.3v1.3h-1.3zM128.8 276.0h1.3v1.3h-1.3zM129.7 276.1h1.3v1.3h-1.3zM129.3 274.7h1.3v1.3h-1.3zM127.5 274.5h1.3v1.3h-1.3zM127.9 276.5h1.3v1.3h-1.3zM129.3 275.5h1.3v1.3h-1.3zM129.5 277.1h1.3v1.3h-1.3zM128.0 275.8h1.3v1.3h-1.3zM127.8 274.7h1.3v1.3h-1.3zM128.3 277.4h1.3v1.3h-1.3zM145.0 274.9h1.3v1.3h-1.3zM143.0 274.4h1.3v1.3h-1.3zM142.6 274.9h1.3v1.3h-1.3zM145.4 275.0h1.3v1.3h-1.3zM144.7 275.3h1.3v1.3h-1.3zM145.3 273.9h1.3v1.3h-1.3zM144.6 274.3h1.3v1.3h-1.3zM142.2 273.6h1.3v1.3h-1.3zM144.6 273.4h1.3v1.3h-1.3zM143.3 275.5h1.3v1.3h-1.3zM159.8 273.6h1.3v1.3h-1.3zM159.1 275.2h1.3v1.3h-1.3zM161.1 274.2h1.3v1.3h-1.3zM158.7 274.9h1.3v1.3h-1.3zM158.8 272.2h1.3v1.3h-1.3zM158.8 270.9h1.3v1.3h-1.3zM157.7 275.7h1.3v1.3h-1.3zM158.3 274.7h1.3v1.3h-1.3zM158.5 273.4h1.3v1.3h-1.3zM158.8 275.3h1.3v1.3h-1.3zM157.2 275.0h1.3v1.3h-1.3zM158.6 273.4h1.3v1.3h-1.3zM172.1 271.6h1.3v1.3h-1.3zM175.5 270.2h1.3v1.3h-1.3zM174.3 273.6h1.3v1.3h-1.3zM172.9 274.3h1.3v1.3h-1.3zM175.1 272.2h1.3v1.3h-1.3zM174.9 273.2h1.3v1.3h-1.3zM174.6 273.8h1.3v1.3h-1.3zM173.7 271.9h1.3v1.3h-1.3zM175.7 272.4h1.3v1.3h-1.3zM173.4 273.5h1.3v1.3h-1.3zM176.2 271.9h1.3v1.3h-1.3zM172.8 272.2h1.3v1.3h-1.3zM187.3 272.1h1.3v1.3h-1.3zM191.4 270.9h1.3v1.3h-1.3zM188.5 271.0h1.3v1.3h-1.3zM188.6 272.3h1.3v1.3h-1.3zM189.0 271.9h1.3v1.3h-1.3zM190.9 271.3h1.3v1.3h-1.3zM190.9 272.4h1.3v1.3h-1.3zM190.9 272.3h1.3v1.3h-1.3zM186.8 270.7h1.3v1.3h-1.3zM207.2 270.8h1.3v1.3h-1.3zM204.3 270.0h1.3v1.3h-1.3zM204.8 271.5h1.3v1.3h-1.3zM204.4 270.9h1.3v1.3h-1.3zM207.0 267.3h1.3v1.3h-1.3zM203.5 270.7h1.3v1.3h-1.3zM205.3 270.7h1.3v1.3h-1.3zM204.3 271.2h1.3v1.3h-1.3zM205.2 269.8h1.3v1.3h-1.3zM207.7 270.8h1.3v1.3h-1.3zM204.1 270.3h1.3v1.3h-1.3zM204.5 270.3h1.3v1.3h-1.3zM201.5 269.8h1.3v1.3h-1.3zM219.7 268.5h1.3v1.3h-1.3zM219.5 270.0h1.3v1.3h-1.3zM220.2 267.9h1.3v1.3h-1.3zM220.2 268.4h1.3v1.3h-1.3zM220.4 271.6h1.3v1.3h-1.3zM222.3 269.2h1.3v1.3h-1.3zM220.7 267.3h1.3v1.3h-1.3zM219.9 268.6h1.3v1.3h-1.3zM218.9 269.3h1.3v1.3h-1.3zM237.3 268.3h1.3v1.3h-1.3zM234.4 268.6h1.3v1.3h-1.3zM234.3 267.7h1.3v1.3h-1.3zM235.8 266.6h1.3v1.3h-1.3zM233.3 271.1h1.3v1.3h-1.3zM235.6 268.7h1.3v1.3h-1.3zM234.1 268.6h1.3v1.3h-1.3zM231.7 268.8h1.3v1.3h-1.3zM235.1 268.4h1.3v1.3h-1.3zM250.5 266.9h1.3v1.3h-1.3zM248.9 265.2h1.3v1.3h-1.3zM250.7 265.5h1.3v1.3h-1.3zM249.6 267.5h1.3v1.3h-1.3zM250.6 266.4h1.3v1.3h-1.3zM251.3 264.4h1.3v1.3h-1.3zM249.4 268.2h1.3v1.3h-1.3zM252.1 266.8h1.3v1.3h-1.3zM250.6 268.0h1.3v1.3h-1.3zM251.8 269.5h1.3v1.3h-1.3zM250.6 266.8h1.3v1.3h-1.3zM267.2 266.2h1.3v1.3h-1.3zM264.6 267.7h1.3v1.3h-1.3zM265.6 266.6h1.3v1.3h-1.3zM267.2 266.1h1.3v1.3h-1.3zM262.7 266.0h1.3v1.3h-1.3zM263.3 267.4h1.3v1.3h-1.3zM265.9 265.7h1.3v1.3h-1.3zM265.5 267.4h1.3v1.3h-1.3zM265.6 268.0h1.3v1.3h-1.3zM265.4 267.7h1.3v1.3h-1.3zM267.3 268.4h1.3v1.3h-1.3zM264.7 267.5h1.3v1.3h-1.3zM263.2 265.1h1.3v1.3h-1.3zM281.8 263.3h1.3v1.3h-1.3zM281.1 265.9h1.3v1.3h-1.3zM278.2 265.3h1.3v1.3h-1.3zM280.9 263.8h1.3v1.3h-1.3zM280.8 264.8h1.3v1.3h-1.3zM281.7 266.7h1.3v1.3h-1.3zM281.0 265.7h1.3v1.3h-1.3zM280.1 264.1h1.3v1.3h-1.3zM278.6 265.7h1.3v1.3h-1.3zM281.0 265.2h1.3v1.3h-1.3zM280.8 265.8h1.3v1.3h-1.3zM281.7 266.2h1.3v1.3h-1.3zM296.0 261.8h1.3v1.3h-1.3zM294.3 265.0h1.3v1.3h-1.3zM294.4 264.4h1.3v1.3h-1.3zM295.4 263.2h1.3v1.3h-1.3zM294.5 264.2h1.3v1.3h-1.3zM297.6 263.8h1.3v1.3h-1.3zM297.9 262.4h1.3v1.3h-1.3zM295.7 266.0h1.3v1.3h-1.3zM298.0 263.6h1.3v1.3h-1.3zM310.0 264.0h1.3v1.3h-1.3zM310.3 265.1h1.3v1.3h-1.3zM310.3 263.8h1.3v1.3h-1.3zM310.8 264.0h1.3v1.3h-1.3zM311.5 260.6h1.3v1.3h-1.3zM310.3 262.6h1.3v1.3h-1.3zM311.0 264.1h1.3v1.3h-1.3zM309.1 263.8h1.3v1.3h-1.3zM313.1 264.8h1.3v1.3h-1.3zM311.9 265.0h1.3v1.3h-1.3zM326.8 263.5h1.3v1.3h-1.3zM325.1 262.3h1.3v1.3h-1.3zM326.5 263.4h1.3v1.3h-1.3zM326.1 262.2h1.3v1.3h-1.3zM325.0 262.0h1.3v1.3h-1.3zM327.2 262.6h1.3v1.3h-1.3zM325.2 261.4h1.3v1.3h-1.3zM329.4 263.8h1.3v1.3h-1.3zM326.9 259.3h1.3v1.3h-1.3zM326.9 263.0h1.3v1.3h-1.3zM342.0 261.0h1.3v1.3h-1.3zM341.4 259.2h1.3v1.3h-1.3zM342.4 260.0h1.3v1.3h-1.3zM342.5 261.1h1.3v1.3h-1.3zM339.9 261.1h1.3v1.3h-1.3zM340.3 261.5h1.3v1.3h-1.3zM341.0 263.6h1.3v1.3h-1.3zM342.4 263.8h1.3v1.3h-1.3zM341.3 261.7h1.3v1.3h-1.3zM113.0 260.0h1.3v1.3h-1.3zM113.1 260.1h1.3v1.3h-1.3zM113.7 259.5h1.3v1.3h-1.3zM112.0 261.8h1.3v1.3h-1.3zM113.7 260.1h1.3v1.3h-1.3zM113.9 261.5h1.3v1.3h-1.3zM112.9 261.1h1.3v1.3h-1.3zM113.0 260.8h1.3v1.3h-1.3zM113.2 261.5h1.3v1.3h-1.3zM127.2 259.3h1.3v1.3h-1.3zM126.3 260.1h1.3v1.3h-1.3zM127.7 261.6h1.3v1.3h-1.3zM128.3 259.5h1.3v1.3h-1.3zM129.4 259.7h1.3v1.3h-1.3zM129.4 259.3h1.3v1.3h-1.3zM128.0 260.8h1.3v1.3h-1.3zM127.1 258.0h1.3v1.3h-1.3zM127.2 258.2h1.3v1.3h-1.3zM130.4 257.4h1.3v1.3h-1.3zM127.7 260.3h1.3v1.3h-1.3zM141.9 260.4h1.3v1.3h-1.3zM142.7 256.9h1.3v1.3h-1.3zM142.3 259.1h1.3v1.3h-1.3zM143.8 258.7h1.3v1.3h-1.3zM145.0 259.3h1.3v1.3h-1.3zM143.2 259.2h1.3v1.3h-1.3zM145.2 259.7h1.3v1.3h-1.3zM144.4 257.2h1.3v1.3h-1.3zM143.0 259.4h1.3v1.3h-1.3zM142.8 259.8h1.3v1.3h-1.3zM158.3 257.6h1.3v1.3h-1.3zM157.6 258.3h1.3v1.3h-1.3zM159.4 257.4h1.3v1.3h-1.3zM160.8 258.0h1.3v1.3h-1.3zM158.5 258.2h1.3v1.3h-1.3zM158.1 257.9h1.3v1.3h-1.3zM158.0 259.2h1.3v1.3h-1.3zM158.4 259.6h1.3v1.3h-1.3zM160.2 258.7h1.3v1.3h-1.3zM159.3 258.8h1.3v1.3h-1.3zM174.5 256.7h1.3v1.3h-1.3zM173.7 258.1h1.3v1.3h-1.3zM171.6 256.1h1.3v1.3h-1.3zM172.5 254.9h1.3v1.3h-1.3zM174.4 255.7h1.3v1.3h-1.3zM171.9 259.6h1.3v1.3h-1.3zM174.7 258.1h1.3v1.3h-1.3zM173.3 256.2h1.3v1.3h-1.3zM174.8 254.3h1.3v1.3h-1.3zM172.2 255.1h1.3v1.3h-1.3zM173.8 255.9h1.3v1.3h-1.3zM172.1 256.3h1.3v1.3h-1.3zM189.4 254.1h1.3v1.3h-1.3zM190.1 254.4h1.3v1.3h-1.3zM188.4 254.7h1.3v1.3h-1.3zM189.3 255.6h1.3v1.3h-1.3zM188.3 255.9h1.3v1.3h-1.3zM189.5 254.2h1.3v1.3h-1.3zM187.5 254.3h1.3v1.3h-1.3zM188.1 254.3h1.3v1.3h-1.3zM190.8 255.6h1.3v1.3h-1.3zM204.3 254.2h1.3v1.3h-1.3zM201.9 254.2h1.3v1.3h-1.3zM201.7 254.9h1.3v1.3h-1.3zM204.4 253.8h1.3v1.3h-1.3zM203.9 253.7h1.3v1.3h-1.3zM203.1 253.4h1.3v1.3h-1.3zM204.1 254.1h1.3v1.3h-1.3zM204.7 254.0h1.3v1.3h-1.3zM205.5 255.0h1.3v1.3h-1.3zM204.4 256.1h1.3v1.3h-1.3zM203.0 256.0h1.3v1.3h-1.3zM203.3 253.0h1.3v1.3h-1.3zM204.8 255.5h1.3v1.3h-1.3zM218.8 255.3h1.3v1.3h-1.3zM218.4 251.8h1.3v1.3h-1.3zM218.7 254.9h1.3v1.3h-1.3zM217.7 253.8h1.3v1.3h-1.3zM220.9 255.2h1.3v1.3h-1.3zM220.1 256.7h1.3v1.3h-1.3zM219.2 253.4h1.3v1.3h-1.3zM216.9 254.1h1.3v1.3h-1.3zM220.3 253.3h1.3v1.3h-1.3zM218.9 254.3h1.3v1.3h-1.3zM219.8 253.2h1.3v1.3h-1.3zM218.5 253.2h1.3v1.3h-1.3zM234.1 253.7h1.3v1.3h-1.3zM232.9 251.5h1.3v1.3h-1.3zM234.1 253.1h1.3v1.3h-1.3zM233.3 253.6h1.3v1.3h-1.3zM235.1 251.7h1.3v1.3h-1.3zM235.8 255.0h1.3v1.3h-1.3zM233.7 251.4h1.3v1.3h-1.3zM234.0 251.3h1.3v1.3h-1.3zM233.8 253.0h1.3v1.3h-1.3zM233.7 253.5h1.3v1.3h-1.3zM233.6 253.6h1.3v1.3h-1.3zM234.9 252.2h1.3v1.3h-1.3zM236.2 252.7h1.3v1.3h-1.3zM248.5 252.4h1.3v1.3h-1.3zM251.0 251.5h1.3v1.3h-1.3zM248.6 252.5h1.3v1.3h-1.3zM249.3 251.9h1.3v1.3h-1.3zM251.2 252.9h1.3v1.3h-1.3zM248.8 254.3h1.3v1.3h-1.3zM249.4 252.5h1.3v1.3h-1.3zM248.6 251.5h1.3v1.3h-1.3zM247.3 253.7h1.3v1.3h-1.3zM251.0 250.1h1.3v1.3h-1.3zM247.6 249.6h1.3v1.3h-1.3zM262.7 250.0h1.3v1.3h-1.3zM266.4 251.1h1.3v1.3h-1.3zM262.6 251.2h1.3v1.3h-1.3zM263.9 249.8h1.3v1.3h-1.3zM267.2 251.4h1.3v1.3h-1.3zM265.5 251.5h1.3v1.3h-1.3zM264.0 251.4h1.3v1.3h-1.3zM264.3 247.3h1.3v1.3h-1.3zM264.4 252.3h1.3v1.3h-1.3zM264.1 252.0h1.3v1.3h-1.3zM264.0 251.0h1.3v1.3h-1.3zM265.0 251.2h1.3v1.3h-1.3zM265.7 249.8h1.3v1.3h-1.3zM278.7 249.9h1.3v1.3h-1.3zM279.8 248.3h1.3v1.3h-1.3zM278.9 249.3h1.3v1.3h-1.3zM280.4 250.9h1.3v1.3h-1.3zM279.2 250.6h1.3v1.3h-1.3zM280.0 248.8h1.3v1.3h-1.3zM282.1 249.9h1.3v1.3h-1.3zM278.2 250.9h1.3v1.3h-1.3zM280.0 250.5h1.3v1.3h-1.3zM279.7 248.1h1.3v1.3h-1.3zM295.5 248.4h1.3v1.3h-1.3zM293.2 248.5h1.3v1.3h-1.3zM295.4 247.9h1.3v1.3h-1.3zM294.8 249.5h1.3v1.3h-1.3zM293.8 249.3h1.3v1.3h-1.3zM297.1 247.9h1.3v1.3h-1.3zM295.1 248.4h1.3v1.3h-1.3zM296.7 248.9h1.3v1.3h-1.3zM296.0 247.7h1.3v1.3h-1.3zM294.9 248.5h1.3v1.3h-1.3zM292.8 250.3h1.3v1.3h-1.3zM296.0 246.5h1.3v1.3h-1.3zM295.8 248.4h1.3v1.3h-1.3zM310.2 248.2h1.3v1.3h-1.3zM310.6 247.5h1.3v1.3h-1.3zM310.9 245.9h1.3v1.3h-1.3zM311.5 245.5h1.3v1.3h-1.3zM311.8 248.6h1.3v1.3h-1.3zM310.7 247.6h1.3v1.3h-1.3zM309.8 247.4h1.3v1.3h-1.3zM309.4 244.6h1.3v1.3h-1.3zM309.0 246.5h1.3v1.3h-1.3zM325.0 246.0h1.3v1.3h-1.3zM326.5 247.2h1.3v1.3h-1.3zM324.2 246.0h1.3v1.3h-1.3zM325.5 248.2h1.3v1.3h-1.3zM326.2 246.6h1.3v1.3h-1.3zM322.3 247.3h1.3v1.3h-1.3zM323.7 244.6h1.3v1.3h-1.3zM324.4 246.7h1.3v1.3h-1.3zM325.3 249.6h1.3v1.3h-1.3zM324.9 245.6h1.3v1.3h-1.3zM326.6 246.8h1.3v1.3h-1.3zM324.7 245.5h1.3v1.3h-1.3zM340.6 246.8h1.3v1.3h-1.3zM339.4 246.6h1.3v1.3h-1.3zM339.8 243.8h1.3v1.3h-1.3zM339.6 246.5h1.3v1.3h-1.3zM341.4 245.6h1.3v1.3h-1.3zM340.6 245.2h1.3v1.3h-1.3zM339.6 245.6h1.3v1.3h-1.3zM340.5 244.8h1.3v1.3h-1.3zM339.5 245.8h1.3v1.3h-1.3zM340.8 245.2h1.3v1.3h-1.3zM339.2 244.4h1.3v1.3h-1.3zM109.3 244.8h1.3v1.3h-1.3zM113.4 245.2h1.3v1.3h-1.3zM112.2 244.4h1.3v1.3h-1.3zM113.5 244.8h1.3v1.3h-1.3zM110.3 245.6h1.3v1.3h-1.3zM112.4 245.8h1.3v1.3h-1.3zM111.6 243.6h1.3v1.3h-1.3zM112.3 244.9h1.3v1.3h-1.3zM112.3 245.3h1.3v1.3h-1.3zM111.1 243.4h1.3v1.3h-1.3zM128.8 244.0h1.3v1.3h-1.3zM126.2 244.4h1.3v1.3h-1.3zM126.7 244.2h1.3v1.3h-1.3zM128.0 243.6h1.3v1.3h-1.3zM125.3 246.0h1.3v1.3h-1.3zM129.3 245.8h1.3v1.3h-1.3zM127.4 244.7h1.3v1.3h-1.3zM128.0 241.6h1.3v1.3h-1.3zM126.7 243.8h1.3v1.3h-1.3zM125.9 243.8h1.3v1.3h-1.3zM127.8 243.2h1.3v1.3h-1.3zM125.4 245.5h1.3v1.3h-1.3zM141.6 241.9h1.3v1.3h-1.3zM141.4 241.7h1.3v1.3h-1.3zM141.3 243.6h1.3v1.3h-1.3zM142.4 242.2h1.3v1.3h-1.3zM142.4 243.0h1.3v1.3h-1.3zM141.3 241.9h1.3v1.3h-1.3zM140.7 245.2h1.3v1.3h-1.3zM144.1 243.1h1.3v1.3h-1.3zM141.2 240.1h1.3v1.3h-1.3zM159.4 241.7h1.3v1.3h-1.3zM158.9 240.8h1.3v1.3h-1.3zM157.7 241.5h1.3v1.3h-1.3zM157.5 243.0h1.3v1.3h-1.3zM160.3 240.8h1.3v1.3h-1.3zM156.7 242.2h1.3v1.3h-1.3zM156.1 242.2h1.3v1.3h-1.3zM158.1 241.3h1.3v1.3h-1.3zM158.0 239.8h1.3v1.3h-1.3zM158.3 239.8h1.3v1.3h-1.3zM156.6 240.9h1.3v1.3h-1.3zM170.5 241.1h1.3v1.3h-1.3zM171.4 239.8h1.3v1.3h-1.3zM172.0 241.1h1.3v1.3h-1.3zM171.1 241.6h1.3v1.3h-1.3zM171.1 240.8h1.3v1.3h-1.3zM173.2 241.7h1.3v1.3h-1.3zM172.9 240.9h1.3v1.3h-1.3zM172.0 240.0h1.3v1.3h-1.3zM169.4 242.3h1.3v1.3h-1.3zM173.3 240.5h1.3v1.3h-1.3zM173.5 241.6h1.3v1.3h-1.3zM187.7 237.3h1.3v1.3h-1.3zM187.4 239.1h1.3v1.3h-1.3zM188.3 238.8h1.3v1.3h-1.3zM186.7 239.2h1.3v1.3h-1.3zM187.7 238.8h1.3v1.3h-1.3zM187.8 240.5h1.3v1.3h-1.3zM189.2 241.7h1.3v1.3h-1.3zM186.8 239.1h1.3v1.3h-1.3zM184.8 241.9h1.3v1.3h-1.3zM186.9 239.6h1.3v1.3h-1.3zM200.8 235.6h1.3v1.3h-1.3zM204.0 239.4h1.3v1.3h-1.3zM203.9 236.5h1.3v1.3h-1.3zM203.2 238.5h1.3v1.3h-1.3zM202.8 239.2h1.3v1.3h-1.3zM204.1 241.6h1.3v1.3h-1.3zM200.5 237.2h1.3v1.3h-1.3zM201.2 240.4h1.3v1.3h-1.3zM202.0 238.9h1.3v1.3h-1.3zM219.4 238.6h1.3v1.3h-1.3zM217.5 237.1h1.3v1.3h-1.3zM217.6 238.1h1.3v1.3h-1.3zM218.3 238.5h1.3v1.3h-1.3zM216.7 236.6h1.3v1.3h-1.3zM218.1 237.8h1.3v1.3h-1.3zM217.2 239.2h1.3v1.3h-1.3zM218.5 238.6h1.3v1.3h-1.3zM218.7 239.7h1.3v1.3h-1.3zM232.0 236.8h1.3v1.3h-1.3zM233.8 234.9h1.3v1.3h-1.3zM234.1 237.9h1.3v1.3h-1.3zM232.6 235.7h1.3v1.3h-1.3zM232.8 240.2h1.3v1.3h-1.3zM232.6 235.6h1.3v1.3h-1.3zM235.1 237.3h1.3v1.3h-1.3zM234.2 235.8h1.3v1.3h-1.3zM235.3 236.9h1.3v1.3h-1.3zM233.8 235.0h1.3v1.3h-1.3zM232.3 237.4h1.3v1.3h-1.3zM234.5 236.2h1.3v1.3h-1.3zM233.6 237.1h1.3v1.3h-1.3zM246.4 237.0h1.3v1.3h-1.3zM247.7 235.8h1.3v1.3h-1.3zM249.9 235.8h1.3v1.3h-1.3zM246.8 233.6h1.3v1.3h-1.3zM249.8 236.5h1.3v1.3h-1.3zM247.4 236.7h1.3v1.3h-1.3zM249.0 236.4h1.3v1.3h-1.3zM245.7 235.3h1.3v1.3h-1.3zM249.5 236.5h1.3v1.3h-1.3zM262.9 236.8h1.3v1.3h-1.3zM266.1 235.4h1.3v1.3h-1.3zM262.9 236.2h1.3v1.3h-1.3zM263.3 234.3h1.3v1.3h-1.3zM263.2 232.9h1.3v1.3h-1.3zM264.9 233.6h1.3v1.3h-1.3zM264.6 233.3h1.3v1.3h-1.3zM263.0 234.1h1.3v1.3h-1.3zM262.1 234.9h1.3v1.3h-1.3zM266.3 235.4h1.3v1.3h-1.3zM278.3 234.1h1.3v1.3h-1.3zM278.8 235.6h1.3v1.3h-1.3zM279.0 233.5h1.3v1.3h-1.3zM276.9 232.9h1.3v1.3h-1.3zM281.0 234.2h1.3v1.3h-1.3zM280.0 234.8h1.3v1.3h-1.3zM277.2 233.1h1.3v1.3h-1.3zM278.3 234.8h1.3v1.3h-1.3zM277.7 233.0h1.3v1.3h-1.3zM278.1 232.6h1.3v1.3h-1.3zM294.0 232.8h1.3v1.3h-1.3zM295.3 232.5h1.3v1.3h-1.3zM292.4 233.2h1.3v1.3h-1.3zM294.9 230.6h1.3v1.3h-1.3zM294.4 231.5h1.3v1.3h-1.3zM295.0 233.1h1.3v1.3h-1.3zM292.5 234.3h1.3v1.3h-1.3zM292.2 232.6h1.3v1.3h-1.3zM294.6 232.8h1.3v1.3h-1.3zM294.9 232.2h1.3v1.3h-1.3zM293.8 232.2h1.3v1.3h-1.3zM294.0 230.1h1.3v1.3h-1.3zM309.5 231.7h1.3v1.3h-1.3zM307.7 230.5h1.3v1.3h-1.3zM309.6 232.1h1.3v1.3h-1.3zM309.9 231.0h1.3v1.3h-1.3zM309.9 229.7h1.3v1.3h-1.3zM308.4 229.9h1.3v1.3h-1.3zM309.5 233.9h1.3v1.3h-1.3zM308.4 231.1h1.3v1.3h-1.3zM308.4 233.2h1.3v1.3h-1.3zM310.2 230.9h1.3v1.3h-1.3zM321.6 230.6h1.3v1.3h-1.3zM324.5 231.6h1.3v1.3h-1.3zM323.2 230.6h1.3v1.3h-1.3zM325.0 230.9h1.3v1.3h-1.3zM325.8 233.1h1.3v1.3h-1.3zM323.2 228.4h1.3v1.3h-1.3zM325.3 232.5h1.3v1.3h-1.3zM325.4 231.7h1.3v1.3h-1.3zM323.5 229.8h1.3v1.3h-1.3zM325.3 229.6h1.3v1.3h-1.3zM322.1 229.5h1.3v1.3h-1.3zM339.4 231.2h1.3v1.3h-1.3zM340.7 228.1h1.3v1.3h-1.3zM338.6 230.5h1.3v1.3h-1.3zM339.0 230.2h1.3v1.3h-1.3zM339.2 230.1h1.3v1.3h-1.3zM339.7 231.3h1.3v1.3h-1.3zM340.4 229.4h1.3v1.3h-1.3zM338.4 229.6h1.3v1.3h-1.3zM341.8 229.2h1.3v1.3h-1.3zM110.7 226.7h1.3v1.3h-1.3zM111.1 229.7h1.3v1.3h-1.3zM110.1 227.8h1.3v1.3h-1.3zM110.7 229.0h1.3v1.3h-1.3zM109.3 228.8h1.3v1.3h-1.3zM111.3 228.8h1.3v1.3h-1.3zM110.0 228.3h1.3v1.3h-1.3zM109.5 228.5h1.3v1.3h-1.3zM110.1 229.2h1.3v1.3h-1.3zM111.7 229.6h1.3v1.3h-1.3zM111.3 228.1h1.3v1.3h-1.3zM126.9 227.4h1.3v1.3h-1.3zM126.4 228.1h1.3v1.3h-1.3zM124.5 225.9h1.3v1.3h-1.3zM126.4 226.5h1.3v1.3h-1.3zM126.1 227.9h1.3v1.3h-1.3zM125.2 226.5h1.3v1.3h-1.3zM125.1 229.1h1.3v1.3h-1.3zM123.5 228.7h1.3v1.3h-1.3zM126.0 226.8h1.3v1.3h-1.3zM142.7 227.1h1.3v1.3h-1.3zM140.5 227.2h1.3v1.3h-1.3zM143.2 227.5h1.3v1.3h-1.3zM142.8 226.8h1.3v1.3h-1.3zM141.9 226.5h1.3v1.3h-1.3zM141.8 228.3h1.3v1.3h-1.3zM139.6 226.6h1.3v1.3h-1.3zM141.6 226.0h1.3v1.3h-1.3zM140.9 227.7h1.3v1.3h-1.3zM158.4 225.7h1.3v1.3h-1.3zM155.0 225.9h1.3v1.3h-1.3zM155.5 226.6h1.3v1.3h-1.3zM156.9 225.5h1.3v1.3h-1.3zM156.0 225.1h1.3v1.3h-1.3zM157.4 225.7h1.3v1.3h-1.3zM156.1 225.2h1.3v1.3h-1.3zM158.6 224.0h1.3v1.3h-1.3zM157.3 225.4h1.3v1.3h-1.3zM171.5 226.2h1.3v1.3h-1.3zM169.7 225.6h1.3v1.3h-1.3zM170.7 224.6h1.3v1.3h-1.3zM169.7 222.3h1.3v1.3h-1.3zM172.1 227.1h1.3v1.3h-1.3zM172.6 224.8h1.3v1.3h-1.3zM171.8 226.7h1.3v1.3h-1.3zM173.5 224.1h1.3v1.3h-1.3zM170.5 226.9h1.3v1.3h-1.3zM185.9 223.0h1.3v1.3h-1.3zM188.4 221.6h1.3v1.3h-1.3zM189.1 223.5h1.3v1.3h-1.3zM185.5 223.4h1.3v1.3h-1.3zM186.7 223.7h1.3v1.3h-1.3zM189.7 224.2h1.3v1.3h-1.3zM187.0 226.2h1.3v1.3h-1.3zM187.1 222.6h1.3v1.3h-1.3zM185.5 222.9h1.3v1.3h-1.3zM186.9 224.0h1.3v1.3h-1.3zM188.1 224.8h1.3v1.3h-1.3zM201.6 223.3h1.3v1.3h-1.3zM202.3 222.8h1.3v1.3h-1.3zM201.4 221.1h1.3v1.3h-1.3zM201.3 220.9h1.3v1.3h-1.3zM203.4 223.4h1.3v1.3h-1.3zM200.5 224.4h1.3v1.3h-1.3zM203.0 220.5h1.3v1.3h-1.3zM204.2 223.7h1.3v1.3h-1.3zM204.4 221.3h1.3v1.3h-1.3zM202.6 223.2h1.3v1.3h-1.3zM220.0 222.4h1.3v1.3h-1.3zM218.8 220.7h1.3v1.3h-1.3zM218.8 222.8h1.3v1.3h-1.3zM216.2 220.7h1.3v1.3h-1.3zM218.6 223.3h1.3v1.3h-1.3zM216.5 221.0h1.3v1.3h-1.3zM216.7 222.5h1.3v1.3h-1.3zM215.5 224.0h1.3v1.3h-1.3zM219.1 222.4h1.3v1.3h-1.3zM232.5 219.1h1.3v1.3h-1.3zM231.3 220.9h1.3v1.3h-1.3zM232.2 218.6h1.3v1.3h-1.3zM233.7 221.0h1.3v1.3h-1.3zM233.4 221.5h1.3v1.3h-1.3zM233.8 221.2h1.3v1.3h-1.3zM231.8 218.6h1.3v1.3h-1.3zM231.4 220.3h1.3v1.3h-1.3zM231.0 221.3h1.3v1.3h-1.3zM231.8 222.7h1.3v1.3h-1.3zM233.4 221.1h1.3v1.3h-1.3zM245.3 219.9h1.3v1.3h-1.3zM248.0 221.0h1.3v1.3h-1.3zM246.2 221.6h1.3v1.3h-1.3zM247.3 222.6h1.3v1.3h-1.3zM247.3 220.6h1.3v1.3h-1.3zM247.0 218.4h1.3v1.3h-1.3zM248.8 220.8h1.3v1.3h-1.3zM249.3 220.8h1.3v1.3h-1.3zM246.8 217.8h1.3v1.3h-1.3zM261.9 219.7h1.3v1.3h-1.3zM260.7 220.3h1.3v1.3h-1.3zM264.8 220.1h1.3v1.3h-1.3zM263.5 218.9h1.3v1.3h-1.3zM262.4 221.3h1.3v1.3h-1.3zM261.5 218.8h1.3v1.3h-1.3zM263.3 218.2h1.3v1.3h-1.3zM261.2 219.1h1.3v1.3h-1.3zM262.7 216.8h1.3v1.3h-1.3zM262.0 217.9h1.3v1.3h-1.3zM262.3 219.4h1.3v1.3h-1.3zM276.8 216.1h1.3v1.3h-1.3zM278.4 218.9h1.3v1.3h-1.3zM278.0 216.2h1.3v1.3h-1.3zM278.8 218.7h1.3v1.3h-1.3zM278.5 217.2h1.3v1.3h-1.3zM278.2 218.7h1.3v1.3h-1.3zM277.1 215.6h1.3v1.3h-1.3zM278.2 218.3h1.3v1.3h-1.3zM277.8 218.8h1.3v1.3h-1.3zM277.1 217.7h1.3v1.3h-1.3zM277.5 218.5h1.3v1.3h-1.3zM279.7 217.5h1.3v1.3h-1.3zM293.9 218.3h1.3v1.3h-1.3zM293.2 217.4h1.3v1.3h-1.3zM293.6 217.6h1.3v1.3h-1.3zM292.7 217.7h1.3v1.3h-1.3zM295.0 218.5h1.3v1.3h-1.3zM292.5 219.2h1.3v1.3h-1.3zM292.8 216.8h1.3v1.3h-1.3zM293.8 215.8h1.3v1.3h-1.3zM293.6 220.1h1.3v1.3h-1.3zM307.5 215.9h1.3v1.3h-1.3zM307.2 215.0h1.3v1.3h-1.3zM308.0 213.2h1.3v1.3h-1.3zM306.7 216.4h1.3v1.3h-1.3zM308.2 214.5h1.3v1.3h-1.3zM308.4 217.7h1.3v1.3h-1.3zM309.7 214.4h1.3v1.3h-1.3zM307.4 213.5h1.3v1.3h-1.3zM307.4 214.2h1.3v1.3h-1.3zM307.2 216.1h1.3v1.3h-1.3zM307.8 215.4h1.3v1.3h-1.3zM323.4 216.0h1.3v1.3h-1.3zM323.2 214.1h1.3v1.3h-1.3zM324.1 213.7h1.3v1.3h-1.3zM325.7 215.1h1.3v1.3h-1.3zM321.6 214.6h1.3v1.3h-1.3zM325.1 213.0h1.3v1.3h-1.3zM323.2 214.9h1.3v1.3h-1.3zM324.6 212.5h1.3v1.3h-1.3zM324.0 215.4h1.3v1.3h-1.3zM323.7 216.7h1.3v1.3h-1.3zM324.1 214.5h1.3v1.3h-1.3zM322.0 216.7h1.3v1.3h-1.3zM336.7 213.3h1.3v1.3h-1.3zM336.8 213.7h1.3v1.3h-1.3zM339.2 212.5h1.3v1.3h-1.3zM336.0 215.4h1.3v1.3h-1.3zM339.0 215.6h1.3v1.3h-1.3zM336.9 215.1h1.3v1.3h-1.3zM341.0 216.2h1.3v1.3h-1.3zM338.2 214.1h1.3v1.3h-1.3zM338.3 215.0h1.3v1.3h-1.3zM339.7 213.9h1.3v1.3h-1.3zM336.9 214.7h1.3v1.3h-1.3zM337.9 214.5h1.3v1.3h-1.3zM109.6 214.0h1.3v1.3h-1.3zM113.1 211.9h1.3v1.3h-1.3zM113.0 212.7h1.3v1.3h-1.3zM109.3 213.0h1.3v1.3h-1.3zM110.4 212.6h1.3v1.3h-1.3zM110.2 212.1h1.3v1.3h-1.3zM108.8 211.3h1.3v1.3h-1.3zM110.3 212.2h1.3v1.3h-1.3zM108.9 210.9h1.3v1.3h-1.3zM110.3 211.6h1.3v1.3h-1.3zM125.3 210.1h1.3v1.3h-1.3zM125.4 210.5h1.3v1.3h-1.3zM125.3 211.0h1.3v1.3h-1.3zM124.6 210.1h1.3v1.3h-1.3zM127.0 211.6h1.3v1.3h-1.3zM123.0 212.1h1.3v1.3h-1.3zM125.5 210.7h1.3v1.3h-1.3zM124.6 211.0h1.3v1.3h-1.3zM123.5 212.0h1.3v1.3h-1.3zM127.4 213.1h1.3v1.3h-1.3zM125.7 212.7h1.3v1.3h-1.3zM142.4 211.6h1.3v1.3h-1.3zM142.1 209.7h1.3v1.3h-1.3zM141.8 212.6h1.3v1.3h-1.3zM140.2 210.7h1.3v1.3h-1.3zM143.3 211.0h1.3v1.3h-1.3zM139.8 210.1h1.3v1.3h-1.3zM140.9 211.2h1.3v1.3h-1.3zM140.5 212.9h1.3v1.3h-1.3zM139.9 211.4h1.3v1.3h-1.3zM142.1 209.6h1.3v1.3h-1.3zM141.6 213.0h1.3v1.3h-1.3zM138.7 209.5h1.3v1.3h-1.3zM156.0 207.6h1.3v1.3h-1.3zM156.1 211.6h1.3v1.3h-1.3zM153.6 209.5h1.3v1.3h-1.3zM153.2 210.8h1.3v1.3h-1.3zM154.6 209.5h1.3v1.3h-1.3zM155.6 210.5h1.3v1.3h-1.3zM155.1 209.9h1.3v1.3h-1.3zM154.8 210.0h1.3v1.3h-1.3zM154.1 209.9h1.3v1.3h-1.3zM153.2 209.2h1.3v1.3h-1.3zM157.8 209.9h1.3v1.3h-1.3zM154.0 210.1h1.3v1.3h-1.3zM154.3 207.9h1.3v1.3h-1.3zM165.9 211.2h1.3v1.3h-1.3zM170.3 208.2h1.3v1.3h-1.3zM169.6 210.2h1.3v1.3h-1.3zM171.0 208.9h1.3v1.3h-1.3zM170.3 204.4h1.3v1.3h-1.3zM170.9 208.3h1.3v1.3h-1.3zM168.7 209.0h1.3v1.3h-1.3zM171.2 209.5h1.3v1.3h-1.3zM170.1 209.2h1.3v1.3h-1.3zM172.1 209.8h1.3v1.3h-1.3zM169.5 210.6h1.3v1.3h-1.3zM186.0 207.0h1.3v1.3h-1.3zM184.7 208.3h1.3v1.3h-1.3zM183.7 207.1h1.3v1.3h-1.3zM185.2 210.0h1.3v1.3h-1.3zM184.7 208.7h1.3v1.3h-1.3zM185.7 209.3h1.3v1.3h-1.3zM187.6 207.6h1.3v1.3h-1.3zM186.1 206.8h1.3v1.3h-1.3zM185.4 208.8h1.3v1.3h-1.3zM184.4 207.0h1.3v1.3h-1.3zM185.9 207.5h1.3v1.3h-1.3zM185.4 205.4h1.3v1.3h-1.3zM185.5 207.7h1.3v1.3h-1.3zM201.3 207.1h1.3v1.3h-1.3zM201.6 205.6h1.3v1.3h-1.3zM201.1 206.4h1.3v1.3h-1.3zM199.5 206.8h1.3v1.3h-1.3zM200.5 207.3h1.3v1.3h-1.3zM200.2 205.2h1.3v1.3h-1.3zM201.4 206.5h1.3v1.3h-1.3zM202.7 207.3h1.3v1.3h-1.3zM200.5 206.3h1.3v1.3h-1.3zM199.8 204.8h1.3v1.3h-1.3zM200.5 207.1h1.3v1.3h-1.3zM214.7 207.5h1.3v1.3h-1.3zM216.5 204.4h1.3v1.3h-1.3zM216.1 206.9h1.3v1.3h-1.3zM215.3 206.4h1.3v1.3h-1.3zM214.6 206.6h1.3v1.3h-1.3zM216.6 205.7h1.3v1.3h-1.3zM215.9 205.7h1.3v1.3h-1.3zM217.8 207.3h1.3v1.3h-1.3zM213.8 204.6h1.3v1.3h-1.3zM233.0 205.6h1.3v1.3h-1.3zM228.2 202.8h1.3v1.3h-1.3zM231.0 204.3h1.3v1.3h-1.3zM231.5 203.4h1.3v1.3h-1.3zM232.5 205.5h1.3v1.3h-1.3zM232.7 203.8h1.3v1.3h-1.3zM231.2 204.9h1.3v1.3h-1.3zM229.6 201.8h1.3v1.3h-1.3zM231.9 204.2h1.3v1.3h-1.3zM232.3 205.8h1.3v1.3h-1.3zM231.1 206.4h1.3v1.3h-1.3zM229.5 205.5h1.3v1.3h-1.3zM245.2 205.4h1.3v1.3h-1.3zM246.3 203.2h1.3v1.3h-1.3zM246.6 202.9h1.3v1.3h-1.3zM245.2 203.4h1.3v1.3h-1.3zM245.3 201.7h1.3v1.3h-1.3zM246.9 203.7h1.3v1.3h-1.3zM246.9 204.0h1.3v1.3h-1.3zM247.9 202.6h1.3v1.3h-1.3zM245.7 203.1h1.3v1.3h-1.3zM261.6 202.2h1.3v1.3h-1.3zM262.6 201.8h1.3v1.3h-1.3zM262.8 203.3h1.3v1.3h-1.3zM260.5 202.3h1.3v1.3h-1.3zM261.4 202.3h1.3v1.3h-1.3zM262.0 201.8h1.3v1.3h-1.3zM260.7 201.5h1.3v1.3h-1.3zM260.7 203.5h1.3v1.3h-1.3zM262.4 200.1h1.3v1.3h-1.3zM262.0 201.4h1.3v1.3h-1.3zM261.6 203.3h1.3v1.3h-1.3zM276.1 203.3h1.3v1.3h-1.3zM279.1 201.6h1.3v1.3h-1.3zM276.0 201.3h1.3v1.3h-1.3zM274.6 203.0h1.3v1.3h-1.3zM275.6 203.2h1.3v1.3h-1.3zM274.8 200.4h1.3v1.3h-1.3zM277.2 201.0h1.3v1.3h-1.3zM277.8 201.9h1.3v1.3h-1.3zM275.5 202.6h1.3v1.3h-1.3zM277.9 199.6h1.3v1.3h-1.3zM279.1 202.5h1.3v1.3h-1.3zM277.8 199.6h1.3v1.3h-1.3zM276.0 201.5h1.3v1.3h-1.3zM291.0 198.5h1.3v1.3h-1.3zM291.7 201.3h1.3v1.3h-1.3zM290.0 200.2h1.3v1.3h-1.3zM292.7 202.8h1.3v1.3h-1.3zM292.8 200.5h1.3v1.3h-1.3zM290.6 199.8h1.3v1.3h-1.3zM291.2 201.1h1.3v1.3h-1.3zM292.0 202.9h1.3v1.3h-1.3zM292.4 199.6h1.3v1.3h-1.3zM293.9 202.0h1.3v1.3h-1.3zM292.2 200.0h1.3v1.3h-1.3zM289.8 199.7h1.3v1.3h-1.3zM293.1 199.9h1.3v1.3h-1.3zM306.4 199.9h1.3v1.3h-1.3zM307.3 200.4h1.3v1.3h-1.3zM307.6 199.0h1.3v1.3h-1.3zM306.2 199.4h1.3v1.3h-1.3zM307.6 197.6h1.3v1.3h-1.3zM307.3 202.6h1.3v1.3h-1.3zM304.8 200.0h1.3v1.3h-1.3zM306.3 200.9h1.3v1.3h-1.3zM308.1 200.4h1.3v1.3h-1.3zM308.2 200.1h1.3v1.3h-1.3zM306.8 199.6h1.3v1.3h-1.3zM307.9 202.2h1.3v1.3h-1.3zM320.8 199.0h1.3v1.3h-1.3zM322.2 201.0h1.3v1.3h-1.3zM319.8 200.2h1.3v1.3h-1.3zM322.6 196.7h1.3v1.3h-1.3zM323.3 198.7h1.3v1.3h-1.3zM323.2 199.1h1.3v1.3h-1.3zM322.6 199.4h1.3v1.3h-1.3zM323.8 199.4h1.3v1.3h-1.3zM323.3 197.9h1.3v1.3h-1.3zM324.9 198.0h1.3v1.3h-1.3zM323.9 199.5h1.3v1.3h-1.3zM321.9 199.3h1.3v1.3h-1.3zM323.3 198.7h1.3v1.3h-1.3zM337.6 198.4h1.3v1.3h-1.3zM338.8 197.2h1.3v1.3h-1.3zM338.5 200.0h1.3v1.3h-1.3zM336.9 198.5h1.3v1.3h-1.3zM337.4 197.2h1.3v1.3h-1.3zM340.2 196.9h1.3v1.3h-1.3zM339.0 198.5h1.3v1.3h-1.3zM340.2 198.4h1.3v1.3h-1.3zM337.5 199.3h1.3v1.3h-1.3zM337.4 195.9h1.3v1.3h-1.3zM337.0 198.0h1.3v1.3h-1.3zM337.5 198.0h1.3v1.3h-1.3zM338.2 199.8h1.3v1.3h-1.3zM107.3 195.8h1.3v1.3h-1.3zM109.9 197.6h1.3v1.3h-1.3zM109.0 197.5h1.3v1.3h-1.3zM108.3 197.0h1.3v1.3h-1.3zM109.1 197.6h1.3v1.3h-1.3zM109.0 196.8h1.3v1.3h-1.3zM108.9 196.2h1.3v1.3h-1.3zM111.7 197.5h1.3v1.3h-1.3zM109.6 199.7h1.3v1.3h-1.3zM110.7 195.1h1.3v1.3h-1.3zM109.9 197.9h1.3v1.3h-1.3zM111.3 198.5h1.3v1.3h-1.3zM110.0 195.5h1.3v1.3h-1.3zM125.3 195.8h1.3v1.3h-1.3zM124.3 196.5h1.3v1.3h-1.3zM123.5 196.7h1.3v1.3h-1.3zM124.1 195.2h1.3v1.3h-1.3zM121.8 196.7h1.3v1.3h-1.3zM123.6 196.2h1.3v1.3h-1.3zM123.4 196.4h1.3v1.3h-1.3zM125.8 196.2h1.3v1.3h-1.3zM123.6 198.0h1.3v1.3h-1.3zM124.2 196.5h1.3v1.3h-1.3zM122.9 196.3h1.3v1.3h-1.3zM125.0 197.1h1.3v1.3h-1.3zM137.3 194.1h1.3v1.3h-1.3zM140.9 196.3h1.3v1.3h-1.3zM140.6 194.7h1.3v1.3h-1.3zM139.3 195.8h1.3v1.3h-1.3zM139.5 196.1h1.3v1.3h-1.3zM138.8 195.3h1.3v1.3h-1.3zM141.0 192.0h1.3v1.3h-1.3zM140.4 196.3h1.3v1.3h-1.3zM138.1 195.4h1.3v1.3h-1.3zM138.1 194.9h1.3v1.3h-1.3zM154.3 195.1h1.3v1.3h-1.3zM155.7 194.3h1.3v1.3h-1.3zM154.4 194.7h1.3v1.3h-1.3zM155.4 192.7h1.3v1.3h-1.3zM154.6 194.7h1.3v1.3h-1.3zM152.7 192.6h1.3v1.3h-1.3zM156.0 192.7h1.3v1.3h-1.3zM154.6 193.2h1.3v1.3h-1.3zM155.7 195.3h1.3v1.3h-1.3zM154.0 193.4h1.3v1.3h-1.3zM154.5 194.1h1.3v1.3h-1.3zM154.0 192.6h1.3v1.3h-1.3zM156.0 191.7h1.3v1.3h-1.3zM170.1 191.9h1.3v1.3h-1.3zM171.0 190.9h1.3v1.3h-1.3zM169.5 193.0h1.3v1.3h-1.3zM170.9 192.2h1.3v1.3h-1.3zM170.4 192.3h1.3v1.3h-1.3zM170.6 195.0h1.3v1.3h-1.3zM169.2 193.5h1.3v1.3h-1.3zM168.6 194.1h1.3v1.3h-1.3zM171.2 193.0h1.3v1.3h-1.3zM168.4 193.4h1.3v1.3h-1.3zM171.1 194.3h1.3v1.3h-1.3zM170.7 190.8h1.3v1.3h-1.3zM168.9 194.7h1.3v1.3h-1.3zM182.6 190.8h1.3v1.3h-1.3zM184.7 192.5h1.3v1.3h-1.3zM184.7 190.7h1.3v1.3h-1.3zM187.0 192.3h1.3v1.3h-1.3zM185.5 192.6h1.3v1.3h-1.3zM186.3 192.8h1.3v1.3h-1.3zM185.4 192.9h1.3v1.3h-1.3zM182.1 190.9h1.3v1.3h-1.3zM187.6 192.3h1.3v1.3h-1.3zM184.8 191.0h1.3v1.3h-1.3zM185.8 190.5h1.3v1.3h-1.3zM184.0 192.2h1.3v1.3h-1.3zM202.0 192.4h1.3v1.3h-1.3zM200.0 190.6h1.3v1.3h-1.3zM201.1 191.9h1.3v1.3h-1.3zM199.1 191.0h1.3v1.3h-1.3zM200.9 191.8h1.3v1.3h-1.3zM201.1 192.2h1.3v1.3h-1.3zM200.5 190.4h1.3v1.3h-1.3zM198.3 190.1h1.3v1.3h-1.3zM201.2 192.9h1.3v1.3h-1.3zM201.2 190.5h1.3v1.3h-1.3zM198.1 192.1h1.3v1.3h-1.3zM198.9 190.8h1.3v1.3h-1.3zM215.4 188.9h1.3v1.3h-1.3zM215.3 191.1h1.3v1.3h-1.3zM212.1 191.3h1.3v1.3h-1.3zM216.1 187.5h1.3v1.3h-1.3zM216.2 187.8h1.3v1.3h-1.3zM216.6 190.4h1.3v1.3h-1.3zM217.9 189.2h1.3v1.3h-1.3zM215.2 191.2h1.3v1.3h-1.3zM214.5 189.1h1.3v1.3h-1.3zM230.8 190.0h1.3v1.3h-1.3zM231.0 190.7h1.3v1.3h-1.3zM230.6 190.2h1.3v1.3h-1.3zM227.1 191.5h1.3v1.3h-1.3zM230.1 189.1h1.3v1.3h-1.3zM233.6 188.6h1.3v1.3h-1.3zM232.7 189.6h1.3v1.3h-1.3zM228.5 187.1h1.3v1.3h-1.3zM229.2 187.8h1.3v1.3h-1.3zM230.5 188.7h1.3v1.3h-1.3zM230.9 189.3h1.3v1.3h-1.3zM231.3 189.1h1.3v1.3h-1.3zM231.0 189.1h1.3v1.3h-1.3zM245.2 187.5h1.3v1.3h-1.3zM243.1 186.3h1.3v1.3h-1.3zM244.6 187.9h1.3v1.3h-1.3zM244.1 188.3h1.3v1.3h-1.3zM245.9 188.5h1.3v1.3h-1.3zM246.3 188.7h1.3v1.3h-1.3zM244.8 188.5h1.3v1.3h-1.3zM245.6 188.5h1.3v1.3h-1.3zM243.4 187.3h1.3v1.3h-1.3zM244.4 187.0h1.3v1.3h-1.3zM245.1 187.3h1.3v1.3h-1.3zM259.3 187.4h1.3v1.3h-1.3zM259.7 186.1h1.3v1.3h-1.3zM260.4 187.8h1.3v1.3h-1.3zM261.0 188.4h1.3v1.3h-1.3zM259.6 188.1h1.3v1.3h-1.3zM261.9 187.1h1.3v1.3h-1.3zM261.3 186.3h1.3v1.3h-1.3zM259.4 186.5h1.3v1.3h-1.3zM260.0 190.5h1.3v1.3h-1.3zM260.2 189.0h1.3v1.3h-1.3zM261.0 187.4h1.3v1.3h-1.3zM275.5 186.2h1.3v1.3h-1.3zM274.9 186.8h1.3v1.3h-1.3zM275.9 185.4h1.3v1.3h-1.3zM276.4 189.0h1.3v1.3h-1.3zM275.9 185.3h1.3v1.3h-1.3zM275.3 186.9h1.3v1.3h-1.3zM275.2 184.5h1.3v1.3h-1.3zM277.2 184.2h1.3v1.3h-1.3zM274.0 185.8h1.3v1.3h-1.3zM275.8 184.0h1.3v1.3h-1.3zM273.8 186.3h1.3v1.3h-1.3zM290.6 185.3h1.3v1.3h-1.3zM289.8 185.8h1.3v1.3h-1.3zM292.0 185.8h1.3v1.3h-1.3zM291.8 185.0h1.3v1.3h-1.3zM291.7 184.2h1.3v1.3h-1.3zM290.7 184.6h1.3v1.3h-1.3zM292.2 183.5h1.3v1.3h-1.3zM290.8 186.1h1.3v1.3h-1.3zM290.2 186.2h1.3v1.3h-1.3zM289.7 184.0h1.3v1.3h-1.3zM306.8 181.7h1.3v1.3h-1.3zM305.0 184.0h1.3v1.3h-1.3zM306.7 184.9h1.3v1.3h-1.3zM307.2 185.2h1.3v1.3h-1.3zM305.8 183.8h1.3v1.3h-1.3zM307.2 183.5h1.3v1.3h-1.3zM307.5 182.1h1.3v1.3h-1.3zM307.0 183.8h1.3v1.3h-1.3zM303.9 185.2h1.3v1.3h-1.3zM322.3 183.2h1.3v1.3h-1.3zM322.2 182.4h1.3v1.3h-1.3zM320.4 182.8h1.3v1.3h-1.3zM320.5 182.1h1.3v1.3h-1.3zM322.3 181.3h1.3v1.3h-1.3zM320.2 183.6h1.3v1.3h-1.3zM323.2 183.5h1.3v1.3h-1.3zM321.3 183.1h1.3v1.3h-1.3zM322.2 183.4h1.3v1.3h-1.3zM335.7 182.9h1.3v1.3h-1.3zM335.1 181.4h1.3v1.3h-1.3zM338.9 179.9h1.3v1.3h-1.3zM335.3 182.1h1.3v1.3h-1.3zM333.8 179.2h1.3v1.3h-1.3zM335.8 183.2h1.3v1.3h-1.3zM336.9 181.3h1.3v1.3h-1.3zM335.2 185.0h1.3v1.3h-1.3zM337.3 180.7h1.3v1.3h-1.3zM338.6 183.6h1.3v1.3h-1.3zM335.8 179.9h1.3v1.3h-1.3zM339.1 181.9h1.3v1.3h-1.3zM107.1 180.0h1.3v1.3h-1.3zM108.4 180.3h1.3v1.3h-1.3zM109.1 180.3h1.3v1.3h-1.3zM109.5 181.6h1.3v1.3h-1.3zM109.3 182.0h1.3v1.3h-1.3zM106.8 179.6h1.3v1.3h-1.3zM108.0 180.9h1.3v1.3h-1.3zM110.0 181.1h1.3v1.3h-1.3zM105.6 180.2h1.3v1.3h-1.3zM107.7 181.4h1.3v1.3h-1.3zM108.4 181.1h1.3v1.3h-1.3zM109.0 182.9h1.3v1.3h-1.3zM123.1 181.8h1.3v1.3h-1.3zM119.2 179.2h1.3v1.3h-1.3zM122.2 179.5h1.3v1.3h-1.3zM123.8 180.5h1.3v1.3h-1.3zM123.3 179.5h1.3v1.3h-1.3zM123.9 180.5h1.3v1.3h-1.3zM121.1 179.7h1.3v1.3h-1.3zM121.6 178.6h1.3v1.3h-1.3zM123.4 180.1h1.3v1.3h-1.3zM123.4 179.0h1.3v1.3h-1.3zM123.0 178.9h1.3v1.3h-1.3zM123.7 180.9h1.3v1.3h-1.3zM125.4 181.6h1.3v1.3h-1.3zM139.2 179.4h1.3v1.3h-1.3zM138.3 178.9h1.3v1.3h-1.3zM138.7 180.2h1.3v1.3h-1.3zM138.5 178.7h1.3v1.3h-1.3zM139.3 179.3h1.3v1.3h-1.3zM138.6 179.7h1.3v1.3h-1.3zM137.8 178.7h1.3v1.3h-1.3zM140.8 179.1h1.3v1.3h-1.3zM137.2 179.4h1.3v1.3h-1.3zM138.4 181.6h1.3v1.3h-1.3zM138.9 179.0h1.3v1.3h-1.3zM137.6 177.4h1.3v1.3h-1.3zM137.4 178.4h1.3v1.3h-1.3zM154.6 177.1h1.3v1.3h-1.3zM153.8 177.2h1.3v1.3h-1.3zM154.1 179.1h1.3v1.3h-1.3zM154.9 181.0h1.3v1.3h-1.3zM153.2 179.5h1.3v1.3h-1.3zM154.7 179.0h1.3v1.3h-1.3zM152.7 178.9h1.3v1.3h-1.3zM154.2 178.3h1.3v1.3h-1.3zM154.1 177.1h1.3v1.3h-1.3zM153.6 178.8h1.3v1.3h-1.3zM153.4 178.9h1.3v1.3h-1.3zM155.3 178.4h1.3v1.3h-1.3zM169.1 176.2h1.3v1.3h-1.3zM169.3 177.6h1.3v1.3h-1.3zM166.7 176.5h1.3v1.3h-1.3zM167.5 176.6h1.3v1.3h-1.3zM169.0 176.2h1.3v1.3h-1.3zM168.2 177.7h1.3v1.3h-1.3zM167.4 178.0h1.3v1.3h-1.3zM167.9 176.6h1.3v1.3h-1.3zM168.0 177.2h1.3v1.3h-1.3zM169.9 175.7h1.3v1.3h-1.3zM172.7 175.6h1.3v1.3h-1.3zM185.2 175.1h1.3v1.3h-1.3zM183.3 176.7h1.3v1.3h-1.3zM183.3 175.5h1.3v1.3h-1.3zM184.4 175.6h1.3v1.3h-1.3zM182.5 175.9h1.3v1.3h-1.3zM183.7 178.1h1.3v1.3h-1.3zM182.6 177.2h1.3v1.3h-1.3zM183.0 175.6h1.3v1.3h-1.3zM183.6 176.4h1.3v1.3h-1.3zM185.0 178.2h1.3v1.3h-1.3zM183.2 177.7h1.3v1.3h-1.3zM185.1 177.0h1.3v1.3h-1.3zM183.0 177.1h1.3v1.3h-1.3zM199.8 176.9h1.3v1.3h-1.3zM200.0 175.6h1.3v1.3h-1.3zM199.6 174.0h1.3v1.3h-1.3zM197.7 176.9h1.3v1.3h-1.3zM197.5 175.4h1.3v1.3h-1.3zM197.5 173.3h1.3v1.3h-1.3zM199.8 174.8h1.3v1.3h-1.3zM197.7 176.7h1.3v1.3h-1.3zM198.2 172.7h1.3v1.3h-1.3zM201.0 175.4h1.3v1.3h-1.3zM194.0 176.3h1.3v1.3h-1.3zM213.3 175.4h1.3v1.3h-1.3zM214.5 174.6h1.3v1.3h-1.3zM216.0 173.1h1.3v1.3h-1.3zM214.2 173.7h1.3v1.3h-1.3zM215.0 174.3h1.3v1.3h-1.3zM214.6 175.0h1.3v1.3h-1.3zM214.0 174.3h1.3v1.3h-1.3zM213.6 175.7h1.3v1.3h-1.3zM215.3 176.2h1.3v1.3h-1.3zM212.6 173.3h1.3v1.3h-1.3zM214.3 175.4h1.3v1.3h-1.3zM213.8 173.1h1.3v1.3h-1.3zM231.0 174.4h1.3v1.3h-1.3zM228.0 170.9h1.3v1.3h-1.3zM230.6 172.0h1.3v1.3h-1.3zM228.4 170.0h1.3v1.3h-1.3zM229.3 172.8h1.3v1.3h-1.3zM228.6 175.0h1.3v1.3h-1.3zM228.0 175.3h1.3v1.3h-1.3zM227.7 174.1h1.3v1.3h-1.3zM231.1 173.1h1.3v1.3h-1.3zM244.5 172.6h1.3v1.3h-1.3zM245.8 171.7h1.3v1.3h-1.3zM246.3 171.3h1.3v1.3h-1.3zM244.5 169.8h1.3v1.3h-1.3zM243.7 171.1h1.3v1.3h-1.3zM246.4 172.7h1.3v1.3h-1.3zM243.3 172.7h1.3v1.3h-1.3zM245.2 171.8h1.3v1.3h-1.3zM244.7 171.7h1.3v1.3h-1.3zM244.0 170.0h1.3v1.3h-1.3zM260.1 171.7h1.3v1.3h-1.3zM260.0 170.2h1.3v1.3h-1.3zM259.6 174.2h1.3v1.3h-1.3zM260.3 172.1h1.3v1.3h-1.3zM261.2 172.0h1.3v1.3h-1.3zM261.0 172.5h1.3v1.3h-1.3zM258.4 171.2h1.3v1.3h-1.3zM259.8 171.0h1.3v1.3h-1.3zM259.6 170.5h1.3v1.3h-1.3zM258.6 169.7h1.3v1.3h-1.3zM261.1 172.5h1.3v1.3h-1.3zM274.0 169.7h1.3v1.3h-1.3zM275.6 168.7h1.3v1.3h-1.3zM275.0 169.4h1.3v1.3h-1.3zM274.2 168.7h1.3v1.3h-1.3zM273.0 170.6h1.3v1.3h-1.3zM275.3 169.6h1.3v1.3h-1.3zM274.7 171.2h1.3v1.3h-1.3zM275.1 170.5h1.3v1.3h-1.3zM274.8 170.9h1.3v1.3h-1.3zM274.6 168.9h1.3v1.3h-1.3zM275.8 170.8h1.3v1.3h-1.3zM273.9 170.3h1.3v1.3h-1.3zM275.2 170.5h1.3v1.3h-1.3zM286.9 169.8h1.3v1.3h-1.3zM288.2 169.3h1.3v1.3h-1.3zM289.2 170.8h1.3v1.3h-1.3zM290.0 170.8h1.3v1.3h-1.3zM291.5 168.7h1.3v1.3h-1.3zM290.4 168.1h1.3v1.3h-1.3zM289.8 169.5h1.3v1.3h-1.3zM289.8 170.7h1.3v1.3h-1.3zM289.9 167.3h1.3v1.3h-1.3zM307.1 169.1h1.3v1.3h-1.3zM306.5 168.3h1.3v1.3h-1.3zM306.0 169.0h1.3v1.3h-1.3zM306.7 167.8h1.3v1.3h-1.3zM306.8 167.0h1.3v1.3h-1.3zM306.8 169.3h1.3v1.3h-1.3zM304.7 169.7h1.3v1.3h-1.3zM304.1 169.3h1.3v1.3h-1.3zM304.8 168.8h1.3v1.3h-1.3zM307.1 170.2h1.3v1.3h-1.3zM320.5 167.5h1.3v1.3h-1.3zM318.9 166.4h1.3v1.3h-1.3zM321.3 165.4h1.3v1.3h-1.3zM322.9 165.5h1.3v1.3h-1.3zM319.1 167.2h1.3v1.3h-1.3zM321.0 168.0h1.3v1.3h-1.3zM320.1 166.9h1.3v1.3h-1.3zM320.2 166.5h1.3v1.3h-1.3zM317.5 168.2h1.3v1.3h-1.3zM320.8 167.3h1.3v1.3h-1.3zM319.8 167.4h1.3v1.3h-1.3zM338.0 166.2h1.3v1.3h-1.3zM336.9 164.5h1.3v1.3h-1.3zM334.8 166.6h1.3v1.3h-1.3zM334.9 164.9h1.3v1.3h-1.3zM334.7 166.6h1.3v1.3h-1.3zM334.0 166.8h1.3v1.3h-1.3zM336.8 163.8h1.3v1.3h-1.3zM336.2 167.0h1.3v1.3h-1.3zM334.2 166.7h1.3v1.3h-1.3zM335.2 166.8h1.3v1.3h-1.3zM336.6 166.7h1.3v1.3h-1.3zM105.8 165.8h1.3v1.3h-1.3zM106.7 164.7h1.3v1.3h-1.3zM105.8 166.1h1.3v1.3h-1.3zM109.1 166.2h1.3v1.3h-1.3zM107.0 164.1h1.3v1.3h-1.3zM106.3 163.9h1.3v1.3h-1.3zM106.1 165.7h1.3v1.3h-1.3zM106.8 164.6h1.3v1.3h-1.3zM108.1 164.0h1.3v1.3h-1.3zM105.6 163.4h1.3v1.3h-1.3zM107.5 167.1h1.3v1.3h-1.3zM106.9 164.5h1.3v1.3h-1.3zM121.2 165.3h1.3v1.3h-1.3zM121.0 164.9h1.3v1.3h-1.3zM121.2 163.7h1.3v1.3h-1.3zM122.9 164.7h1.3v1.3h-1.3zM123.5 163.2h1.3v1.3h-1.3zM124.1 165.7h1.3v1.3h-1.3zM122.3 164.7h1.3v1.3h-1.3zM121.4 164.0h1.3v1.3h-1.3zM120.8 164.3h1.3v1.3h-1.3zM122.5 165.7h1.3v1.3h-1.3zM123.4 165.1h1.3v1.3h-1.3zM121.9 163.9h1.3v1.3h-1.3zM121.9 164.4h1.3v1.3h-1.3zM138.4 164.2h1.3v1.3h-1.3zM135.2 163.1h1.3v1.3h-1.3zM139.1 162.6h1.3v1.3h-1.3zM138.9 162.8h1.3v1.3h-1.3zM135.7 163.6h1.3v1.3h-1.3zM134.5 162.3h1.3v1.3h-1.3zM138.0 164.4h1.3v1.3h-1.3zM138.5 163.8h1.3v1.3h-1.3zM136.6 162.3h1.3v1.3h-1.3zM137.8 163.3h1.3v1.3h-1.3zM136.6 160.3h1.3v1.3h-1.3zM136.9 163.3h1.3v1.3h-1.3zM150.4 163.3h1.3v1.3h-1.3zM150.9 160.5h1.3v1.3h-1.3zM150.2 161.1h1.3v1.3h-1.3zM153.2 161.6h1.3v1.3h-1.3zM152.6 161.1h1.3v1.3h-1.3zM152.8 160.4h1.3v1.3h-1.3zM152.9 161.6h1.3v1.3h-1.3zM151.3 163.6h1.3v1.3h-1.3zM154.5 161.6h1.3v1.3h-1.3zM154.2 162.6h1.3v1.3h-1.3zM167.2 162.0h1.3v1.3h-1.3zM167.6 161.0h1.3v1.3h-1.3zM168.6 160.7h1.3v1.3h-1.3zM166.7 162.6h1.3v1.3h-1.3zM171.4 161.7h1.3v1.3h-1.3zM165.9 162.0h1.3v1.3h-1.3zM167.4 161.2h1.3v1.3h-1.3zM167.8 161.9h1.3v1.3h-1.3zM170.0 160.1h1.3v1.3h-1.3zM183.8 158.8h1.3v1.3h-1.3zM183.0 164.3h1.3v1.3h-1.3zM183.1 159.2h1.3v1.3h-1.3zM182.7 160.3h1.3v1.3h-1.3zM184.4 160.1h1.3v1.3h-1.3zM182.7 160.2h1.3v1.3h-1.3zM183.2 159.8h1.3v1.3h-1.3zM181.7 159.0h1.3v1.3h-1.3zM181.1 158.8h1.3v1.3h-1.3zM184.8 159.8h1.3v1.3h-1.3zM182.2 160.5h1.3v1.3h-1.3zM184.4 159.8h1.3v1.3h-1.3zM197.8 159.9h1.3v1.3h-1.3zM199.4 158.2h1.3v1.3h-1.3zM198.9 159.4h1.3v1.3h-1.3zM197.3 160.2h1.3v1.3h-1.3zM197.1 158.6h1.3v1.3h-1.3zM198.1 159.3h1.3v1.3h-1.3zM197.2 158.7h1.3v1.3h-1.3zM199.5 159.4h1.3v1.3h-1.3zM198.5 159.2h1.3v1.3h-1.3zM199.3 160.6h1.3v1.3h-1.3zM198.0 160.1h1.3v1.3h-1.3zM214.5 158.1h1.3v1.3h-1.3zM211.9 157.5h1.3v1.3h-1.3zM214.5 159.6h1.3v1.3h-1.3zM215.6 156.9h1.3v1.3h-1.3zM214.0 158.6h1.3v1.3h-1.3zM211.9 158.9h1.3v1.3h-1.3zM215.1 159.4h1.3v1.3h-1.3zM213.6 157.3h1.3v1.3h-1.3zM213.5 157.6h1.3v1.3h-1.3zM216.1 159.5h1.3v1.3h-1.3zM212.7 159.1h1.3v1.3h-1.3zM213.9 157.5h1.3v1.3h-1.3zM214.7 156.8h1.3v1.3h-1.3zM229.5 157.6h1.3v1.3h-1.3zM226.9 160.4h1.3v1.3h-1.3zM227.4 157.3h1.3v1.3h-1.3zM228.5 158.1h1.3v1.3h-1.3zM228.1 157.7h1.3v1.3h-1.3zM230.9 157.3h1.3v1.3h-1.3zM227.3 157.6h1.3v1.3h-1.3zM227.6 156.8h1.3v1.3h-1.3zM228.7 157.6h1.3v1.3h-1.3zM228.2 158.2h1.3v1.3h-1.3zM228.3 155.7h1.3v1.3h-1.3zM244.4 156.6h1.3v1.3h-1.3zM245.1 155.5h1.3v1.3h-1.3zM243.3 157.3h1.3v1.3h-1.3zM240.6 156.8h1.3v1.3h-1.3zM243.0 154.4h1.3v1.3h-1.3zM245.7 155.1h1.3v1.3h-1.3zM243.4 156.9h1.3v1.3h-1.3zM244.9 155.3h1.3v1.3h-1.3zM243.8 154.5h1.3v1.3h-1.3zM243.7 156.4h1.3v1.3h-1.3zM244.9 156.6h1.3v1.3h-1.3zM258.6 156.6h1.3v1.3h-1.3zM259.6 155.7h1.3v1.3h-1.3zM259.4 155.4h1.3v1.3h-1.3zM259.3 155.4h1.3v1.3h-1.3zM259.5 153.8h1.3v1.3h-1.3zM258.8 155.1h1.3v1.3h-1.3zM258.6 156.9h1.3v1.3h-1.3zM259.9 155.3h1.3v1.3h-1.3zM259.9 155.4h1.3v1.3h-1.3zM259.0 155.0h1.3v1.3h-1.3zM257.2 155.4h1.3v1.3h-1.3zM259.1 154.5h1.3v1.3h-1.3zM260.2 153.6h1.3v1.3h-1.3zM273.3 153.4h1.3v1.3h-1.3zM272.4 154.3h1.3v1.3h-1.3zM274.0 155.6h1.3v1.3h-1.3zM276.7 154.4h1.3v1.3h-1.3zM270.8 152.8h1.3v1.3h-1.3zM275.6 154.8h1.3v1.3h-1.3zM273.8 153.2h1.3v1.3h-1.3zM274.6 154.6h1.3v1.3h-1.3zM275.3 155.8h1.3v1.3h-1.3zM288.5 154.1h1.3v1.3h-1.3zM288.2 154.7h1.3v1.3h-1.3zM289.7 152.7h1.3v1.3h-1.3zM290.8 153.0h1.3v1.3h-1.3zM289.4 154.9h1.3v1.3h-1.3zM289.7 152.0h1.3v1.3h-1.3zM290.9 153.6h1.3v1.3h-1.3zM288.3 152.0h1.3v1.3h-1.3zM288.8 151.7h1.3v1.3h-1.3zM301.5 151.8h1.3v1.3h-1.3zM304.5 152.3h1.3v1.3h-1.3zM302.6 152.5h1.3v1.3h-1.3zM304.5 151.1h1.3v1.3h-1.3zM305.2 152.2h1.3v1.3h-1.3zM304.4 151.7h1.3v1.3h-1.3zM305.0 152.3h1.3v1.3h-1.3zM305.7 152.7h1.3v1.3h-1.3zM303.6 152.0h1.3v1.3h-1.3zM305.4 151.8h1.3v1.3h-1.3zM304.8 152.8h1.3v1.3h-1.3zM318.4 151.0h1.3v1.3h-1.3zM319.2 150.0h1.3v1.3h-1.3zM320.1 150.6h1.3v1.3h-1.3zM321.7 149.9h1.3v1.3h-1.3zM318.9 151.8h1.3v1.3h-1.3zM319.6 151.0h1.3v1.3h-1.3zM319.4 151.1h1.3v1.3h-1.3zM320.5 148.7h1.3v1.3h-1.3zM319.0 150.2h1.3v1.3h-1.3zM319.7 152.4h1.3v1.3h-1.3zM336.3 149.7h1.3v1.3h-1.3zM334.9 151.1h1.3v1.3h-1.3zM334.6 151.5h1.3v1.3h-1.3zM334.8 151.0h1.3v1.3h-1.3zM334.8 148.5h1.3v1.3h-1.3zM333.5 153.9h1.3v1.3h-1.3zM335.0 151.8h1.3v1.3h-1.3zM336.0 152.2h1.3v1.3h-1.3zM335.3 149.5h1.3v1.3h-1.3zM334.7 148.0h1.3v1.3h-1.3zM334.5 151.3h1.3v1.3h-1.3zM332.2 150.5h1.3v1.3h-1.3zM105.5 150.8h1.3v1.3h-1.3zM107.0 149.0h1.3v1.3h-1.3zM108.2 149.9h1.3v1.3h-1.3zM107.4 147.7h1.3v1.3h-1.3zM108.2 149.9h1.3v1.3h-1.3zM105.0 149.7h1.3v1.3h-1.3zM108.0 151.4h1.3v1.3h-1.3zM105.3 147.3h1.3v1.3h-1.3zM107.7 151.4h1.3v1.3h-1.3zM106.9 150.0h1.3v1.3h-1.3zM121.3 147.7h1.3v1.3h-1.3zM122.3 149.9h1.3v1.3h-1.3zM122.3 148.9h1.3v1.3h-1.3zM123.0 147.3h1.3v1.3h-1.3zM123.8 146.0h1.3v1.3h-1.3zM122.2 148.4h1.3v1.3h-1.3zM121.8 146.5h1.3v1.3h-1.3zM122.8 148.6h1.3v1.3h-1.3zM121.5 149.5h1.3v1.3h-1.3zM121.6 148.4h1.3v1.3h-1.3zM122.4 148.2h1.3v1.3h-1.3zM121.8 147.8h1.3v1.3h-1.3zM120.7 148.3h1.3v1.3h-1.3zM137.4 147.3h1.3v1.3h-1.3zM134.9 146.8h1.3v1.3h-1.3zM132.9 146.2h1.3v1.3h-1.3zM134.3 146.8h1.3v1.3h-1.3zM137.0 147.1h1.3v1.3h-1.3zM138.8 146.8h1.3v1.3h-1.3zM137.4 147.1h1.3v1.3h-1.3zM138.2 148.1h1.3v1.3h-1.3zM137.5 147.4h1.3v1.3h-1.3zM137.3 147.1h1.3v1.3h-1.3zM138.6 147.9h1.3v1.3h-1.3zM137.4 147.0h1.3v1.3h-1.3zM151.0 144.7h1.3v1.3h-1.3zM150.3 145.9h1.3v1.3h-1.3zM150.5 143.1h1.3v1.3h-1.3zM153.1 144.9h1.3v1.3h-1.3zM150.9 146.9h1.3v1.3h-1.3zM148.9 147.8h1.3v1.3h-1.3zM150.8 147.1h1.3v1.3h-1.3zM151.1 146.6h1.3v1.3h-1.3zM151.8 146.3h1.3v1.3h-1.3zM149.6 144.6h1.3v1.3h-1.3zM151.7 147.9h1.3v1.3h-1.3zM169.1 145.2h1.3v1.3h-1.3zM166.6 144.8h1.3v1.3h-1.3zM166.7 145.1h1.3v1.3h-1.3zM166.6 144.1h1.3v1.3h-1.3zM165.2 144.6h1.3v1.3h-1.3zM165.2 145.9h1.3v1.3h-1.3zM165.4 145.7h1.3v1.3h-1.3zM165.2 145.6h1.3v1.3h-1.3zM165.8 145.5h1.3v1.3h-1.3zM165.8 144.9h1.3v1.3h-1.3zM167.8 143.4h1.3v1.3h-1.3zM167.6 144.5h1.3v1.3h-1.3zM180.9 145.2h1.3v1.3h-1.3zM180.7 143.1h1.3v1.3h-1.3zM181.3 145.8h1.3v1.3h-1.3zM181.2 144.1h1.3v1.3h-1.3zM181.3 143.7h1.3v1.3h-1.3zM183.2 143.6h1.3v1.3h-1.3zM181.8 142.9h1.3v1.3h-1.3zM181.2 144.4h1.3v1.3h-1.3zM183.8 146.4h1.3v1.3h-1.3zM196.7 143.9h1.3v1.3h-1.3zM197.8 144.3h1.3v1.3h-1.3zM196.9 142.7h1.3v1.3h-1.3zM196.8 142.7h1.3v1.3h-1.3zM199.5 142.5h1.3v1.3h-1.3zM195.7 141.1h1.3v1.3h-1.3zM196.7 144.3h1.3v1.3h-1.3zM198.1 142.3h1.3v1.3h-1.3zM195.6 144.3h1.3v1.3h-1.3zM196.4 144.1h1.3v1.3h-1.3zM196.5 142.1h1.3v1.3h-1.3zM196.6 145.0h1.3v1.3h-1.3zM197.1 144.3h1.3v1.3h-1.3zM211.9 141.1h1.3v1.3h-1.3zM210.3 142.6h1.3v1.3h-1.3zM212.4 141.6h1.3v1.3h-1.3zM211.9 141.3h1.3v1.3h-1.3zM211.5 142.2h1.3v1.3h-1.3zM211.6 143.1h1.3v1.3h-1.3zM212.2 142.5h1.3v1.3h-1.3zM212.9 143.8h1.3v1.3h-1.3zM213.1 142.6h1.3v1.3h-1.3zM212.2 141.4h1.3v1.3h-1.3zM212.0 143.1h1.3v1.3h-1.3zM212.7 141.8h1.3v1.3h-1.3zM228.1 140.7h1.3v1.3h-1.3zM225.7 142.3h1.3v1.3h-1.3zM226.7 140.5h1.3v1.3h-1.3zM228.8 141.7h1.3v1.3h-1.3zM226.3 142.7h1.3v1.3h-1.3zM227.2 142.5h1.3v1.3h-1.3zM226.3 139.6h1.3v1.3h-1.3zM226.9 142.3h1.3v1.3h-1.3zM225.2 140.0h1.3v1.3h-1.3zM228.7 144.3h1.3v1.3h-1.3zM227.3 140.2h1.3v1.3h-1.3zM227.0 140.4h1.3v1.3h-1.3zM243.9 140.9h1.3v1.3h-1.3zM241.8 141.1h1.3v1.3h-1.3zM244.3 139.6h1.3v1.3h-1.3zM242.9 139.8h1.3v1.3h-1.3zM240.1 139.2h1.3v1.3h-1.3zM242.3 139.1h1.3v1.3h-1.3zM243.5 140.3h1.3v1.3h-1.3zM243.8 140.8h1.3v1.3h-1.3zM244.1 141.8h1.3v1.3h-1.3zM257.0 137.6h1.3v1.3h-1.3zM257.6 139.5h1.3v1.3h-1.3zM257.3 137.9h1.3v1.3h-1.3zM258.1 137.3h1.3v1.3h-1.3zM258.5 139.9h1.3v1.3h-1.3zM259.9 140.4h1.3v1.3h-1.3zM258.3 139.6h1.3v1.3h-1.3zM257.9 137.8h1.3v1.3h-1.3zM259.6 139.9h1.3v1.3h-1.3zM272.7 138.4h1.3v1.3h-1.3zM272.6 137.2h1.3v1.3h-1.3zM269.4 136.2h1.3v1.3h-1.3zM274.1 136.1h1.3v1.3h-1.3zM273.7 139.2h1.3v1.3h-1.3zM272.9 138.3h1.3v1.3h-1.3zM274.0 138.3h1.3v1.3h-1.3zM273.0 139.4h1.3v1.3h-1.3zM273.0 140.7h1.3v1.3h-1.3zM271.7 137.8h1.3v1.3h-1.3zM272.7 138.5h1.3v1.3h-1.3zM288.3 138.5h1.3v1.3h-1.3zM286.9 137.9h1.3v1.3h-1.3zM288.0 137.9h1.3v1.3h-1.3zM288.7 139.0h1.3v1.3h-1.3zM289.8 136.6h1.3v1.3h-1.3zM288.1 136.7h1.3v1.3h-1.3zM289.2 136.9h1.3v1.3h-1.3zM286.4 137.8h1.3v1.3h-1.3zM287.2 135.7h1.3v1.3h-1.3zM288.7 137.4h1.3v1.3h-1.3zM290.4 136.7h1.3v1.3h-1.3zM303.1 138.5h1.3v1.3h-1.3zM302.9 138.2h1.3v1.3h-1.3zM303.9 134.8h1.3v1.3h-1.3zM300.7 137.1h1.3v1.3h-1.3zM301.1 137.2h1.3v1.3h-1.3zM304.6 136.8h1.3v1.3h-1.3zM303.2 136.0h1.3v1.3h-1.3zM303.7 136.0h1.3v1.3h-1.3zM302.8 135.9h1.3v1.3h-1.3zM318.5 134.6h1.3v1.3h-1.3zM318.9 137.2h1.3v1.3h-1.3zM318.6 133.2h1.3v1.3h-1.3zM317.9 135.2h1.3v1.3h-1.3zM318.9 133.5h1.3v1.3h-1.3zM317.2 135.2h1.3v1.3h-1.3zM318.7 135.8h1.3v1.3h-1.3zM319.4 135.6h1.3v1.3h-1.3zM319.5 133.7h1.3v1.3h-1.3zM317.4 135.8h1.3v1.3h-1.3zM320.4 133.3h1.3v1.3h-1.3zM319.1 135.9h1.3v1.3h-1.3zM316.7 136.0h1.3v1.3h-1.3zM334.3 132.6h1.3v1.3h-1.3zM333.6 133.3h1.3v1.3h-1.3zM333.7 135.9h1.3v1.3h-1.3zM334.4 137.2h1.3v1.3h-1.3zM333.3 133.6h1.3v1.3h-1.3zM334.8 134.2h1.3v1.3h-1.3zM334.3 135.2h1.3v1.3h-1.3zM332.7 132.8h1.3v1.3h-1.3zM334.0 135.0h1.3v1.3h-1.3zM334.2 135.3h1.3v1.3h-1.3zM333.5 134.5h1.3v1.3h-1.3zM332.7 135.8h1.3v1.3h-1.3zM334.2 136.0h1.3v1.3h-1.3zM104.3 133.2h1.3v1.3h-1.3zM104.1 135.0h1.3v1.3h-1.3zM102.5 133.4h1.3v1.3h-1.3zM106.4 134.1h1.3v1.3h-1.3zM106.3 132.2h1.3v1.3h-1.3zM104.7 133.2h1.3v1.3h-1.3zM105.9 134.1h1.3v1.3h-1.3zM107.1 131.9h1.3v1.3h-1.3zM105.6 136.1h1.3v1.3h-1.3zM106.8 133.7h1.3v1.3h-1.3zM106.3 133.1h1.3v1.3h-1.3zM106.9 132.8h1.3v1.3h-1.3zM106.3 133.7h1.3v1.3h-1.3zM119.4 132.5h1.3v1.3h-1.3zM120.0 132.8h1.3v1.3h-1.3zM121.5 130.5h1.3v1.3h-1.3zM120.2 131.1h1.3v1.3h-1.3zM120.4 131.8h1.3v1.3h-1.3zM121.1 133.4h1.3v1.3h-1.3zM120.8 132.5h1.3v1.3h-1.3zM119.3 131.8h1.3v1.3h-1.3zM120.0 131.2h1.3v1.3h-1.3zM120.7 132.0h1.3v1.3h-1.3zM120.1 130.4h1.3v1.3h-1.3zM119.3 133.7h1.3v1.3h-1.3zM134.5 133.4h1.3v1.3h-1.3zM136.6 130.4h1.3v1.3h-1.3zM135.9 131.8h1.3v1.3h-1.3zM136.0 131.0h1.3v1.3h-1.3zM134.1 131.4h1.3v1.3h-1.3zM136.6 132.3h1.3v1.3h-1.3zM136.4 132.7h1.3v1.3h-1.3zM134.4 131.3h1.3v1.3h-1.3zM136.0 132.5h1.3v1.3h-1.3zM153.4 130.2h1.3v1.3h-1.3zM150.5 128.9h1.3v1.3h-1.3zM150.8 130.9h1.3v1.3h-1.3zM151.1 130.6h1.3v1.3h-1.3zM151.2 128.6h1.3v1.3h-1.3zM151.2 132.3h1.3v1.3h-1.3zM151.4 130.8h1.3v1.3h-1.3zM153.1 126.8h1.3v1.3h-1.3zM149.3 131.2h1.3v1.3h-1.3zM152.0 131.4h1.3v1.3h-1.3zM167.3 130.2h1.3v1.3h-1.3zM166.1 131.0h1.3v1.3h-1.3zM166.3 127.5h1.3v1.3h-1.3zM166.8 129.7h1.3v1.3h-1.3zM163.1 127.4h1.3v1.3h-1.3zM167.5 129.8h1.3v1.3h-1.3zM165.1 127.3h1.3v1.3h-1.3zM164.7 131.2h1.3v1.3h-1.3zM163.3 130.0h1.3v1.3h-1.3zM180.0 130.9h1.3v1.3h-1.3zM181.2 128.1h1.3v1.3h-1.3zM181.3 127.7h1.3v1.3h-1.3zM180.4 128.3h1.3v1.3h-1.3zM181.7 126.4h1.3v1.3h-1.3zM181.9 131.0h1.3v1.3h-1.3zM180.4 126.7h1.3v1.3h-1.3zM181.2 128.4h1.3v1.3h-1.3zM181.3 128.2h1.3v1.3h-1.3zM196.8 124.8h1.3v1.3h-1.3zM196.3 125.7h1.3v1.3h-1.3zM196.8 129.0h1.3v1.3h-1.3zM197.5 125.7h1.3v1.3h-1.3zM197.9 128.5h1.3v1.3h-1.3zM195.9 128.0h1.3v1.3h-1.3zM198.0 127.0h1.3v1.3h-1.3zM196.3 126.8h1.3v1.3h-1.3zM197.6 124.9h1.3v1.3h-1.3zM197.9 126.3h1.3v1.3h-1.3zM197.3 125.5h1.3v1.3h-1.3zM195.2 126.7h1.3v1.3h-1.3zM197.2 125.5h1.3v1.3h-1.3zM210.5 129.3h1.3v1.3h-1.3zM208.6 125.8h1.3v1.3h-1.3zM213.8 128.5h1.3v1.3h-1.3zM211.7 125.5h1.3v1.3h-1.3zM211.9 125.7h1.3v1.3h-1.3zM211.9 127.7h1.3v1.3h-1.3zM211.6 127.8h1.3v1.3h-1.3zM213.0 125.4h1.3v1.3h-1.3zM211.1 125.3h1.3v1.3h-1.3zM211.9 124.3h1.3v1.3h-1.3zM210.3 123.8h1.3v1.3h-1.3zM212.0 125.3h1.3v1.3h-1.3zM212.9 127.3h1.3v1.3h-1.3zM225.3 123.2h1.3v1.3h-1.3zM225.7 125.9h1.3v1.3h-1.3zM226.1 127.0h1.3v1.3h-1.3zM229.0 124.7h1.3v1.3h-1.3zM225.4 125.6h1.3v1.3h-1.3zM226.4 126.1h1.3v1.3h-1.3zM226.1 125.3h1.3v1.3h-1.3zM225.6 126.3h1.3v1.3h-1.3zM227.7 125.6h1.3v1.3h-1.3zM227.4 125.4h1.3v1.3h-1.3zM227.6 124.6h1.3v1.3h-1.3zM242.0 123.9h1.3v1.3h-1.3zM241.6 124.1h1.3v1.3h-1.3zM242.1 123.7h1.3v1.3h-1.3zM241.4 127.4h1.3v1.3h-1.3zM241.2 125.1h1.3v1.3h-1.3zM243.1 123.4h1.3v1.3h-1.3zM242.7 123.7h1.3v1.3h-1.3zM238.8 124.4h1.3v1.3h-1.3zM238.2 124.3h1.3v1.3h-1.3zM242.6 126.5h1.3v1.3h-1.3zM242.6 125.7h1.3v1.3h-1.3zM242.5 124.4h1.3v1.3h-1.3zM243.0 124.0h1.3v1.3h-1.3zM256.8 121.6h1.3v1.3h-1.3zM258.9 123.2h1.3v1.3h-1.3zM257.0 121.7h1.3v1.3h-1.3zM258.3 124.9h1.3v1.3h-1.3zM256.9 124.7h1.3v1.3h-1.3zM255.9 123.3h1.3v1.3h-1.3zM256.8 124.4h1.3v1.3h-1.3zM256.3 125.2h1.3v1.3h-1.3zM255.9 120.8h1.3v1.3h-1.3zM257.1 123.0h1.3v1.3h-1.3zM256.2 122.3h1.3v1.3h-1.3zM274.3 123.2h1.3v1.3h-1.3zM271.5 121.0h1.3v1.3h-1.3zM270.2 123.1h1.3v1.3h-1.3zM273.6 121.2h1.3v1.3h-1.3zM272.1 122.1h1.3v1.3h-1.3zM271.8 123.0h1.3v1.3h-1.3zM274.5 121.7h1.3v1.3h-1.3zM273.1 123.7h1.3v1.3h-1.3zM271.8 122.3h1.3v1.3h-1.3zM288.0 122.9h1.3v1.3h-1.3zM289.0 121.3h1.3v1.3h-1.3zM287.4 123.5h1.3v1.3h-1.3zM288.8 121.7h1.3v1.3h-1.3zM286.9 121.7h1.3v1.3h-1.3zM288.9 120.9h1.3v1.3h-1.3zM284.0 121.6h1.3v1.3h-1.3zM285.6 123.4h1.3v1.3h-1.3zM286.3 123.5h1.3v1.3h-1.3zM286.9 121.5h1.3v1.3h-1.3zM284.8 120.9h1.3v1.3h-1.3zM288.0 123.5h1.3v1.3h-1.3zM303.5 122.1h1.3v1.3h-1.3zM303.0 121.4h1.3v1.3h-1.3zM303.4 120.8h1.3v1.3h-1.3zM300.1 122.6h1.3v1.3h-1.3zM303.2 120.3h1.3v1.3h-1.3zM301.4 123.1h1.3v1.3h-1.3zM302.8 121.4h1.3v1.3h-1.3zM301.9 120.7h1.3v1.3h-1.3zM302.4 121.6h1.3v1.3h-1.3zM318.0 118.1h1.3v1.3h-1.3zM319.7 121.2h1.3v1.3h-1.3zM316.6 118.5h1.3v1.3h-1.3zM317.0 119.8h1.3v1.3h-1.3zM317.9 119.2h1.3v1.3h-1.3zM317.4 120.9h1.3v1.3h-1.3zM316.4 117.5h1.3v1.3h-1.3zM317.2 119.7h1.3v1.3h-1.3zM316.2 120.7h1.3v1.3h-1.3zM315.9 120.8h1.3v1.3h-1.3zM318.0 119.0h1.3v1.3h-1.3zM317.5 119.5h1.3v1.3h-1.3zM333.5 117.1h1.3v1.3h-1.3zM331.1 120.7h1.3v1.3h-1.3zM332.7 119.4h1.3v1.3h-1.3zM334.2 119.1h1.3v1.3h-1.3zM332.8 116.7h1.3v1.3h-1.3zM330.9 119.6h1.3v1.3h-1.3zM333.6 119.1h1.3v1.3h-1.3zM330.9 116.0h1.3v1.3h-1.3zM331.6 117.1h1.3v1.3h-1.3zM333.0 117.3h1.3v1.3h-1.3zM334.6 117.7h1.3v1.3h-1.3zM332.2 119.5h1.3v1.3h-1.3zM333.2 117.4h1.3v1.3h-1.3zM104.1 116.8h1.3v1.3h-1.3zM104.2 116.2h1.3v1.3h-1.3zM105.2 117.0h1.3v1.3h-1.3zM104.7 119.3h1.3v1.3h-1.3zM104.7 117.3h1.3v1.3h-1.3zM105.9 117.5h1.3v1.3h-1.3zM104.4 118.8h1.3v1.3h-1.3zM104.7 119.4h1.3v1.3h-1.3zM104.7 115.7h1.3v1.3h-1.3zM104.7 117.0h1.3v1.3h-1.3zM118.5 114.7h1.3v1.3h-1.3zM116.9 116.5h1.3v1.3h-1.3zM121.1 115.3h1.3v1.3h-1.3zM120.2 114.9h1.3v1.3h-1.3zM119.9 116.0h1.3v1.3h-1.3zM118.9 114.7h1.3v1.3h-1.3zM118.7 115.9h1.3v1.3h-1.3zM121.0 117.2h1.3v1.3h-1.3zM119.9 115.6h1.3v1.3h-1.3zM119.7 117.3h1.3v1.3h-1.3zM133.6 116.7h1.3v1.3h-1.3zM135.0 115.2h1.3v1.3h-1.3zM136.1 115.7h1.3v1.3h-1.3zM136.8 117.6h1.3v1.3h-1.3zM134.9 116.8h1.3v1.3h-1.3zM134.8 114.2h1.3v1.3h-1.3zM131.3 115.4h1.3v1.3h-1.3zM133.3 114.6h1.3v1.3h-1.3zM136.1 115.8h1.3v1.3h-1.3zM150.5 115.0h1.3v1.3h-1.3zM149.1 113.7h1.3v1.3h-1.3zM149.1 115.9h1.3v1.3h-1.3zM150.2 116.6h1.3v1.3h-1.3zM150.4 116.7h1.3v1.3h-1.3zM150.3 113.1h1.3v1.3h-1.3zM151.9 114.9h1.3v1.3h-1.3zM151.2 114.8h1.3v1.3h-1.3zM149.4 114.7h1.3v1.3h-1.3zM148.5 113.1h1.3v1.3h-1.3zM148.8 113.9h1.3v1.3h-1.3zM148.2 114.4h1.3v1.3h-1.3zM163.7 111.4h1.3v1.3h-1.3zM166.1 113.9h1.3v1.3h-1.3zM163.3 113.2h1.3v1.3h-1.3zM165.0 115.2h1.3v1.3h-1.3zM163.8 112.9h1.3v1.3h-1.3zM167.4 113.0h1.3v1.3h-1.3zM164.4 113.0h1.3v1.3h-1.3zM164.5 113.1h1.3v1.3h-1.3zM166.0 115.3h1.3v1.3h-1.3zM167.3 114.7h1.3v1.3h-1.3zM179.4 112.8h1.3v1.3h-1.3zM179.9 111.8h1.3v1.3h-1.3zM180.0 114.0h1.3v1.3h-1.3zM179.2 109.4h1.3v1.3h-1.3zM180.1 109.6h1.3v1.3h-1.3zM181.8 111.6h1.3v1.3h-1.3zM180.1 112.1h1.3v1.3h-1.3zM180.2 112.7h1.3v1.3h-1.3zM181.4 111.1h1.3v1.3h-1.3zM195.2 112.6h1.3v1.3h-1.3zM196.2 113.0h1.3v1.3h-1.3zM196.3 111.5h1.3v1.3h-1.3zM196.0 111.7h1.3v1.3h-1.3zM193.7 113.5h1.3v1.3h-1.3zM195.8 110.3h1.3v1.3h-1.3zM195.8 111.9h1.3v1.3h-1.3zM196.5 113.2h1.3v1.3h-1.3zM191.7 112.2h1.3v1.3h-1.3zM197.1 110.4h1.3v1.3h-1.3zM193.1 111.9h1.3v1.3h-1.3zM195.7 111.9h1.3v1.3h-1.3zM194.0 111.0h1.3v1.3h-1.3zM209.4 111.9h1.3v1.3h-1.3zM211.2 110.2h1.3v1.3h-1.3zM210.1 112.7h1.3v1.3h-1.3zM208.4 110.3h1.3v1.3h-1.3zM210.4 109.8h1.3v1.3h-1.3zM211.5 109.7h1.3v1.3h-1.3zM210.9 111.0h1.3v1.3h-1.3zM210.3 109.1h1.3v1.3h-1.3zM212.7 110.9h1.3v1.3h-1.3zM211.0 110.4h1.3v1.3h-1.3zM226.1 111.0h1.3v1.3h-1.3zM227.7 108.3h1.3v1.3h-1.3zM224.9 110.8h1.3v1.3h-1.3zM223.7 110.0h1.3v1.3h-1.3zM225.8 109.4h1.3v1.3h-1.3zM226.0 110.6h1.3v1.3h-1.3zM226.1 109.2h1.3v1.3h-1.3zM227.7 107.5h1.3v1.3h-1.3zM224.2 110.1h1.3v1.3h-1.3zM240.9 107.0h1.3v1.3h-1.3zM240.4 106.2h1.3v1.3h-1.3zM241.7 110.1h1.3v1.3h-1.3zM243.2 105.8h1.3v1.3h-1.3zM240.6 107.2h1.3v1.3h-1.3zM242.0 107.4h1.3v1.3h-1.3zM241.9 109.5h1.3v1.3h-1.3zM239.5 109.8h1.3v1.3h-1.3zM241.6 106.1h1.3v1.3h-1.3zM242.4 108.6h1.3v1.3h-1.3zM240.8 107.7h1.3v1.3h-1.3zM240.7 106.8h1.3v1.3h-1.3zM258.7 109.4h1.3v1.3h-1.3zM256.1 107.2h1.3v1.3h-1.3zM256.9 107.8h1.3v1.3h-1.3zM256.8 107.2h1.3v1.3h-1.3zM254.7 105.1h1.3v1.3h-1.3zM254.3 105.5h1.3v1.3h-1.3zM255.9 108.2h1.3v1.3h-1.3zM258.0 107.8h1.3v1.3h-1.3zM258.6 109.5h1.3v1.3h-1.3zM255.8 106.8h1.3v1.3h-1.3zM271.9 107.8h1.3v1.3h-1.3zM272.8 107.9h1.3v1.3h-1.3zM273.2 104.8h1.3v1.3h-1.3zM273.5 106.6h1.3v1.3h-1.3zM269.1 105.8h1.3v1.3h-1.3zM269.5 106.5h1.3v1.3h-1.3zM269.4 105.3h1.3v1.3h-1.3zM271.5 106.7h1.3v1.3h-1.3zM270.2 106.3h1.3v1.3h-1.3zM271.1 106.6h1.3v1.3h-1.3zM271.2 106.3h1.3v1.3h-1.3zM272.2 104.6h1.3v1.3h-1.3zM270.6 106.7h1.3v1.3h-1.3zM284.7 102.5h1.3v1.3h-1.3zM286.0 105.2h1.3v1.3h-1.3zM284.6 105.3h1.3v1.3h-1.3zM287.1 106.0h1.3v1.3h-1.3zM288.9 103.2h1.3v1.3h-1.3zM287.2 106.1h1.3v1.3h-1.3zM286.0 106.5h1.3v1.3h-1.3zM284.8 105.6h1.3v1.3h-1.3zM285.9 106.2h1.3v1.3h-1.3zM286.7 105.7h1.3v1.3h-1.3zM301.8 105.7h1.3v1.3h-1.3zM304.2 104.3h1.3v1.3h-1.3zM300.8 104.2h1.3v1.3h-1.3zM301.6 102.6h1.3v1.3h-1.3zM301.7 104.7h1.3v1.3h-1.3zM303.3 105.3h1.3v1.3h-1.3zM301.2 104.0h1.3v1.3h-1.3zM303.3 103.4h1.3v1.3h-1.3zM303.1 105.1h1.3v1.3h-1.3zM301.3 105.4h1.3v1.3h-1.3zM302.9 106.1h1.3v1.3h-1.3zM301.7 104.3h1.3v1.3h-1.3zM301.0 105.0h1.3v1.3h-1.3zM318.4 103.4h1.3v1.3h-1.3zM318.5 102.7h1.3v1.3h-1.3zM318.7 100.3h1.3v1.3h-1.3zM316.7 102.6h1.3v1.3h-1.3zM316.7 104.8h1.3v1.3h-1.3zM317.5 103.7h1.3v1.3h-1.3zM318.7 101.8h1.3v1.3h-1.3zM315.7 105.4h1.3v1.3h-1.3zM317.1 101.1h1.3v1.3h-1.3zM317.1 102.1h1.3v1.3h-1.3zM334.1 103.1h1.3v1.3h-1.3zM330.9 103.1h1.3v1.3h-1.3zM332.4 102.8h1.3v1.3h-1.3zM331.1 102.8h1.3v1.3h-1.3zM333.5 103.2h1.3v1.3h-1.3zM331.9 105.2h1.3v1.3h-1.3zM333.2 102.0h1.3v1.3h-1.3zM332.1 100.9h1.3v1.3h-1.3zM331.4 101.9h1.3v1.3h-1.3zM103.1 100.4h1.3v1.3h-1.3zM105.5 103.6h1.3v1.3h-1.3zM102.1 100.5h1.3v1.3h-1.3zM104.8 104.1h1.3v1.3h-1.3zM103.1 102.8h1.3v1.3h-1.3zM101.7 104.2h1.3v1.3h-1.3zM105.4 102.9h1.3v1.3h-1.3zM102.3 100.3h1.3v1.3h-1.3zM102.3 100.0h1.3v1.3h-1.3zM117.6 99.3h1.3v1.3h-1.3zM118.2 99.6h1.3v1.3h-1.3zM118.9 100.8h1.3v1.3h-1.3zM119.7 100.7h1.3v1.3h-1.3zM118.9 101.1h1.3v1.3h-1.3zM115.4 100.7h1.3v1.3h-1.3zM118.2 99.7h1.3v1.3h-1.3zM118.6 99.9h1.3v1.3h-1.3zM119.3 101.2h1.3v1.3h-1.3zM117.0 101.6h1.3v1.3h-1.3zM136.1 99.4h1.3v1.3h-1.3zM134.5 98.6h1.3v1.3h-1.3zM133.3 100.3h1.3v1.3h-1.3zM132.1 101.0h1.3v1.3h-1.3zM134.3 100.1h1.3v1.3h-1.3zM133.0 100.5h1.3v1.3h-1.3zM132.0 98.0h1.3v1.3h-1.3zM134.2 99.8h1.3v1.3h-1.3zM134.0 97.9h1.3v1.3h-1.3zM133.3 100.5h1.3v1.3h-1.3zM135.0 100.0h1.3v1.3h-1.3zM133.9 99.3h1.3v1.3h-1.3zM148.0 97.3h1.3v1.3h-1.3zM148.9 99.0h1.3v1.3h-1.3zM151.2 98.8h1.3v1.3h-1.3zM151.0 100.9h1.3v1.3h-1.3zM147.6 100.1h1.3v1.3h-1.3zM150.2 100.2h1.3v1.3h-1.3zM148.8 99.8h1.3v1.3h-1.3zM148.3 98.5h1.3v1.3h-1.3zM148.9 100.8h1.3v1.3h-1.3zM148.6 99.8h1.3v1.3h-1.3zM148.9 97.8h1.3v1.3h-1.3zM165.6 96.3h1.3v1.3h-1.3zM164.6 96.9h1.3v1.3h-1.3zM164.8 97.0h1.3v1.3h-1.3zM164.6 97.6h1.3v1.3h-1.3zM163.2 98.4h1.3v1.3h-1.3zM163.8 98.9h1.3v1.3h-1.3zM163.5 97.7h1.3v1.3h-1.3zM162.7 97.1h1.3v1.3h-1.3zM162.9 98.4h1.3v1.3h-1.3zM166.4 96.4h1.3v1.3h-1.3zM178.6 96.8h1.3v1.3h-1.3zM180.2 97.1h1.3v1.3h-1.3zM176.4 97.2h1.3v1.3h-1.3zM178.8 96.5h1.3v1.3h-1.3zM179.5 98.6h1.3v1.3h-1.3zM177.0 95.7h1.3v1.3h-1.3zM181.5 96.1h1.3v1.3h-1.3zM181.4 98.5h1.3v1.3h-1.3zM178.3 96.5h1.3v1.3h-1.3zM180.3 98.7h1.3v1.3h-1.3zM179.3 97.1h1.3v1.3h-1.3zM178.9 99.3h1.3v1.3h-1.3zM194.5 95.0h1.3v1.3h-1.3zM195.0 94.0h1.3v1.3h-1.3zM195.2 96.2h1.3v1.3h-1.3zM194.5 95.2h1.3v1.3h-1.3zM194.0 94.3h1.3v1.3h-1.3zM194.3 97.1h1.3v1.3h-1.3zM192.8 94.1h1.3v1.3h-1.3zM195.8 94.6h1.3v1.3h-1.3zM194.3 95.3h1.3v1.3h-1.3zM193.1 94.0h1.3v1.3h-1.3zM194.0 95.1h1.3v1.3h-1.3zM193.6 96.5h1.3v1.3h-1.3zM209.4 92.3h1.3v1.3h-1.3zM207.8 96.5h1.3v1.3h-1.3zM209.9 95.4h1.3v1.3h-1.3zM207.4 93.1h1.3v1.3h-1.3zM210.3 95.0h1.3v1.3h-1.3zM210.8 94.9h1.3v1.3h-1.3zM210.0 95.2h1.3v1.3h-1.3zM209.5 93.0h1.3v1.3h-1.3zM210.7 94.2h1.3v1.3h-1.3zM209.5 94.5h1.3v1.3h-1.3zM210.4 94.4h1.3v1.3h-1.3zM223.1 95.3h1.3v1.3h-1.3zM224.6 91.9h1.3v1.3h-1.3zM225.3 96.2h1.3v1.3h-1.3zM225.2 94.9h1.3v1.3h-1.3zM223.9 95.6h1.3v1.3h-1.3zM224.3 96.9h1.3v1.3h-1.3zM224.7 93.3h1.3v1.3h-1.3zM225.3 94.8h1.3v1.3h-1.3zM224.3 92.1h1.3v1.3h-1.3zM224.8 92.8h1.3v1.3h-1.3zM225.1 93.0h1.3v1.3h-1.3zM225.3 92.1h1.3v1.3h-1.3zM238.1 91.9h1.3v1.3h-1.3zM240.5 93.3h1.3v1.3h-1.3zM242.1 94.7h1.3v1.3h-1.3zM240.3 93.2h1.3v1.3h-1.3zM238.3 92.4h1.3v1.3h-1.3zM240.2 92.4h1.3v1.3h-1.3zM240.0 93.4h1.3v1.3h-1.3zM238.8 92.0h1.3v1.3h-1.3zM237.8 94.0h1.3v1.3h-1.3zM238.6 90.6h1.3v1.3h-1.3zM240.8 92.4h1.3v1.3h-1.3zM241.0 92.2h1.3v1.3h-1.3zM253.0 92.5h1.3v1.3h-1.3zM257.6 91.1h1.3v1.3h-1.3zM256.9 92.5h1.3v1.3h-1.3zM255.4 92.2h1.3v1.3h-1.3zM256.1 92.2h1.3v1.3h-1.3zM254.5 93.3h1.3v1.3h-1.3zM254.6 90.1h1.3v1.3h-1.3zM253.7 92.1h1.3v1.3h-1.3zM253.3 91.3h1.3v1.3h-1.3zM272.7 88.8h1.3v1.3h-1.3zM270.4 91.1h1.3v1.3h-1.3zM271.5 89.7h1.3v1.3h-1.3zM271.0 92.3h1.3v1.3h-1.3zM270.2 91.5h1.3v1.3h-1.3zM269.2 91.7h1.3v1.3h-1.3zM270.0 90.2h1.3v1.3h-1.3zM270.1 89.0h1.3v1.3h-1.3zM268.5 91.0h1.3v1.3h-1.3zM270.3 90.5h1.3v1.3h-1.3zM268.4 90.9h1.3v1.3h-1.3zM284.4 89.9h1.3v1.3h-1.3zM288.7 89.1h1.3v1.3h-1.3zM288.1 91.4h1.3v1.3h-1.3zM284.2 89.3h1.3v1.3h-1.3zM286.7 91.1h1.3v1.3h-1.3zM284.1 91.0h1.3v1.3h-1.3zM284.4 90.6h1.3v1.3h-1.3zM282.6 92.8h1.3v1.3h-1.3zM283.8 87.8h1.3v1.3h-1.3zM286.5 90.6h1.3v1.3h-1.3zM299.3 87.5h1.3v1.3h-1.3zM299.3 88.9h1.3v1.3h-1.3zM299.8 90.0h1.3v1.3h-1.3zM299.4 90.3h1.3v1.3h-1.3zM299.7 90.7h1.3v1.3h-1.3zM299.9 87.0h1.3v1.3h-1.3zM300.8 87.5h1.3v1.3h-1.3zM301.8 89.8h1.3v1.3h-1.3zM300.2 90.1h1.3v1.3h-1.3zM300.8 89.5h1.3v1.3h-1.3zM298.8 87.5h1.3v1.3h-1.3zM299.0 90.4h1.3v1.3h-1.3zM316.0 88.1h1.3v1.3h-1.3zM314.0 88.2h1.3v1.3h-1.3zM315.8 87.3h1.3v1.3h-1.3zM317.0 86.7h1.3v1.3h-1.3zM314.4 88.5h1.3v1.3h-1.3zM317.8 88.1h1.3v1.3h-1.3zM316.0 87.2h1.3v1.3h-1.3zM315.7 88.4h1.3v1.3h-1.3zM316.9 90.0h1.3v1.3h-1.3zM315.9 86.8h1.3v1.3h-1.3zM316.2 87.8h1.3v1.3h-1.3zM331.6 86.6h1.3v1.3h-1.3zM330.2 87.9h1.3v1.3h-1.3zM330.4 87.8h1.3v1.3h-1.3zM330.0 86.8h1.3v1.3h-1.3zM331.4 86.9h1.3v1.3h-1.3zM331.2 87.1h1.3v1.3h-1.3zM329.6 85.4h1.3v1.3h-1.3zM330.7 88.8h1.3v1.3h-1.3zM330.8 85.6h1.3v1.3h-1.3zM103.4 87.0h1.3v1.3h-1.3zM104.6 85.6h1.3v1.3h-1.3zM102.4 83.4h1.3v1.3h-1.3zM101.5 86.2h1.3v1.3h-1.3zM103.4 85.8h1.3v1.3h-1.3zM103.6 86.3h1.3v1.3h-1.3zM103.0 86.0h1.3v1.3h-1.3zM102.8 84.4h1.3v1.3h-1.3zM100.2 86.1h1.3v1.3h-1.3zM100.8 84.1h1.3v1.3h-1.3zM101.1 85.9h1.3v1.3h-1.3zM105.2 85.9h1.3v1.3h-1.3zM118.9 85.8h1.3v1.3h-1.3zM117.6 85.6h1.3v1.3h-1.3zM116.3 85.4h1.3v1.3h-1.3zM117.5 84.4h1.3v1.3h-1.3zM117.4 83.9h1.3v1.3h-1.3zM117.1 86.4h1.3v1.3h-1.3zM117.0 83.2h1.3v1.3h-1.3zM118.2 84.2h1.3v1.3h-1.3zM116.9 86.4h1.3v1.3h-1.3zM117.5 85.4h1.3v1.3h-1.3zM131.7 84.0h1.3v1.3h-1.3zM132.2 82.0h1.3v1.3h-1.3zM132.1 81.6h1.3v1.3h-1.3zM131.6 84.6h1.3v1.3h-1.3zM132.0 85.7h1.3v1.3h-1.3zM132.3 84.6h1.3v1.3h-1.3zM132.3 84.5h1.3v1.3h-1.3zM133.5 85.2h1.3v1.3h-1.3zM132.8 84.0h1.3v1.3h-1.3zM131.8 85.6h1.3v1.3h-1.3zM149.2 81.4h1.3v1.3h-1.3zM146.9 82.9h1.3v1.3h-1.3zM149.5 83.5h1.3v1.3h-1.3zM147.0 81.8h1.3v1.3h-1.3zM149.9 83.6h1.3v1.3h-1.3zM146.6 82.6h1.3v1.3h-1.3zM149.6 80.5h1.3v1.3h-1.3zM146.3 83.6h1.3v1.3h-1.3zM145.9 82.3h1.3v1.3h-1.3zM147.7 81.7h1.3v1.3h-1.3zM149.9 83.4h1.3v1.3h-1.3zM150.2 84.1h1.3v1.3h-1.3zM149.5 84.5h1.3v1.3h-1.3zM164.0 82.7h1.3v1.3h-1.3zM162.3 81.0h1.3v1.3h-1.3zM164.9 82.6h1.3v1.3h-1.3zM163.3 80.5h1.3v1.3h-1.3zM164.1 82.3h1.3v1.3h-1.3zM165.6 83.4h1.3v1.3h-1.3zM164.0 82.0h1.3v1.3h-1.3zM163.2 81.1h1.3v1.3h-1.3zM163.4 82.0h1.3v1.3h-1.3zM163.8 83.0h1.3v1.3h-1.3zM163.4 81.1h1.3v1.3h-1.3zM164.0 83.5h1.3v1.3h-1.3zM162.1 82.2h1.3v1.3h-1.3zM179.3 79.9h1.3v1.3h-1.3zM177.8 80.6h1.3v1.3h-1.3zM180.9 79.7h1.3v1.3h-1.3zM178.0 79.6h1.3v1.3h-1.3zM178.4 81.5h1.3v1.3h-1.3zM179.0 78.9h1.3v1.3h-1.3zM177.6 81.2h1.3v1.3h-1.3zM178.7 78.8h1.3v1.3h-1.3zM179.5 80.0h1.3v1.3h-1.3zM192.9 80.5h1.3v1.3h-1.3zM193.4 81.1h1.3v1.3h-1.3zM194.1 79.7h1.3v1.3h-1.3zM194.1 78.9h1.3v1.3h-1.3zM194.3 81.5h1.3v1.3h-1.3zM193.0 80.4h1.3v1.3h-1.3zM191.5 80.8h1.3v1.3h-1.3zM194.4 78.6h1.3v1.3h-1.3zM195.5 79.9h1.3v1.3h-1.3zM191.4 78.1h1.3v1.3h-1.3zM194.4 79.4h1.3v1.3h-1.3zM194.7 77.9h1.3v1.3h-1.3zM193.3 80.9h1.3v1.3h-1.3zM207.7 77.9h1.3v1.3h-1.3zM208.0 81.6h1.3v1.3h-1.3zM210.4 78.9h1.3v1.3h-1.3zM208.7 76.7h1.3v1.3h-1.3zM206.2 77.7h1.3v1.3h-1.3zM209.3 77.2h1.3v1.3h-1.3zM211.0 79.6h1.3v1.3h-1.3zM208.9 79.4h1.3v1.3h-1.3zM208.1 80.1h1.3v1.3h-1.3zM208.0 79.9h1.3v1.3h-1.3zM208.3 79.6h1.3v1.3h-1.3zM223.6 77.4h1.3v1.3h-1.3zM224.4 77.3h1.3v1.3h-1.3zM222.9 79.6h1.3v1.3h-1.3zM225.6 75.4h1.3v1.3h-1.3zM224.8 76.7h1.3v1.3h-1.3zM225.6 76.6h1.3v1.3h-1.3zM225.6 75.0h1.3v1.3h-1.3zM225.0 77.3h1.3v1.3h-1.3zM221.8 78.2h1.3v1.3h-1.3zM224.8 76.1h1.3v1.3h-1.3zM223.5 78.1h1.3v1.3h-1.3zM238.8 77.0h1.3v1.3h-1.3zM239.2 75.9h1.3v1.3h-1.3zM239.3 77.0h1.3v1.3h-1.3zM238.9 76.0h1.3v1.3h-1.3zM237.8 77.0h1.3v1.3h-1.3zM239.9 73.9h1.3v1.3h-1.3zM238.3 78.3h1.3v1.3h-1.3zM240.0 75.9h1.3v1.3h-1.3zM240.5 75.6h1.3v1.3h-1.3zM254.0 74.6h1.3v1.3h-1.3zM255.5 74.9h1.3v1.3h-1.3zM256.7 75.7h1.3v1.3h-1.3zM255.3 76.3h1.3v1.3h-1.3zM257.1 76.0h1.3v1.3h-1.3zM254.2 76.6h1.3v1.3h-1.3zM251.5 75.0h1.3v1.3h-1.3zM252.8 73.8h1.3v1.3h-1.3zM253.2 74.5h1.3v1.3h-1.3zM252.6 76.1h1.3v1.3h-1.3zM254.7 75.9h1.3v1.3h-1.3zM269.7 75.7h1.3v1.3h-1.3zM267.3 74.6h1.3v1.3h-1.3zM271.0 76.0h1.3v1.3h-1.3zM268.9 74.5h1.3v1.3h-1.3zM267.4 76.9h1.3v1.3h-1.3zM269.2 74.1h1.3v1.3h-1.3zM269.0 74.4h1.3v1.3h-1.3zM268.3 75.3h1.3v1.3h-1.3zM270.7 74.7h1.3v1.3h-1.3zM282.4 73.9h1.3v1.3h-1.3zM286.9 73.9h1.3v1.3h-1.3zM283.5 73.1h1.3v1.3h-1.3zM285.7 71.5h1.3v1.3h-1.3zM284.6 74.0h1.3v1.3h-1.3zM283.0 71.8h1.3v1.3h-1.3zM285.6 74.8h1.3v1.3h-1.3zM284.8 73.9h1.3v1.3h-1.3zM281.9 73.7h1.3v1.3h-1.3zM285.6 72.2h1.3v1.3h-1.3zM296.8 72.6h1.3v1.3h-1.3zM299.0 72.5h1.3v1.3h-1.3zM298.1 71.2h1.3v1.3h-1.3zM298.2 73.5h1.3v1.3h-1.3zM299.6 73.7h1.3v1.3h-1.3zM298.4 73.5h1.3v1.3h-1.3zM299.1 72.9h1.3v1.3h-1.3zM300.7 72.8h1.3v1.3h-1.3zM299.2 70.8h1.3v1.3h-1.3zM299.7 73.7h1.3v1.3h-1.3zM315.2 71.0h1.3v1.3h-1.3zM315.9 74.0h1.3v1.3h-1.3zM316.7 71.5h1.3v1.3h-1.3zM315.8 72.6h1.3v1.3h-1.3zM314.1 71.3h1.3v1.3h-1.3zM315.4 70.7h1.3v1.3h-1.3zM313.4 71.7h1.3v1.3h-1.3zM317.2 71.8h1.3v1.3h-1.3zM316.5 69.9h1.3v1.3h-1.3zM313.6 71.3h1.3v1.3h-1.3zM314.5 72.5h1.3v1.3h-1.3zM315.1 73.3h1.3v1.3h-1.3zM313.2 72.8h1.3v1.3h-1.3zM330.3 73.2h1.3v1.3h-1.3zM329.2 71.8h1.3v1.3h-1.3zM329.3 72.4h1.3v1.3h-1.3zM329.3 71.0h1.3v1.3h-1.3zM329.4 70.5h1.3v1.3h-1.3zM329.6 72.0h1.3v1.3h-1.3zM331.1 69.1h1.3v1.3h-1.3zM328.8 70.1h1.3v1.3h-1.3zM329.7 72.2h1.3v1.3h-1.3zM328.5 71.0h1.3v1.3h-1.3zM101.7 70.2h1.3v1.3h-1.3zM100.5 66.8h1.3v1.3h-1.3zM100.5 70.5h1.3v1.3h-1.3zM100.5 70.3h1.3v1.3h-1.3zM101.0 68.7h1.3v1.3h-1.3zM102.8 71.8h1.3v1.3h-1.3zM101.3 69.8h1.3v1.3h-1.3zM102.6 68.2h1.3v1.3h-1.3zM100.4 71.2h1.3v1.3h-1.3zM102.5 69.2h1.3v1.3h-1.3zM100.5 70.2h1.3v1.3h-1.3zM99.8 69.2h1.3v1.3h-1.3zM101.2 66.9h1.3v1.3h-1.3zM115.4 67.5h1.3v1.3h-1.3zM115.8 69.5h1.3v1.3h-1.3zM115.9 68.5h1.3v1.3h-1.3zM116.8 68.2h1.3v1.3h-1.3zM115.0 68.3h1.3v1.3h-1.3zM116.5 69.5h1.3v1.3h-1.3zM119.3 67.0h1.3v1.3h-1.3zM115.0 67.4h1.3v1.3h-1.3zM115.7 69.2h1.3v1.3h-1.3zM116.4 68.8h1.3v1.3h-1.3zM129.1 67.3h1.3v1.3h-1.3zM130.9 66.8h1.3v1.3h-1.3zM131.2 68.9h1.3v1.3h-1.3zM130.2 66.5h1.3v1.3h-1.3zM131.7 69.0h1.3v1.3h-1.3zM130.9 68.6h1.3v1.3h-1.3zM133.1 67.1h1.3v1.3h-1.3zM131.6 68.9h1.3v1.3h-1.3zM132.1 67.2h1.3v1.3h-1.3zM131.7 67.6h1.3v1.3h-1.3zM131.9 68.2h1.3v1.3h-1.3zM132.0 67.2h1.3v1.3h-1.3zM131.8 68.2h1.3v1.3h-1.3zM149.3 69.1h1.3v1.3h-1.3zM147.4 66.5h1.3v1.3h-1.3zM147.9 68.0h1.3v1.3h-1.3zM149.0 66.5h1.3v1.3h-1.3zM148.3 68.7h1.3v1.3h-1.3zM148.3 67.2h1.3v1.3h-1.3zM146.8 65.6h1.3v1.3h-1.3zM145.7 65.5h1.3v1.3h-1.3zM147.2 67.4h1.3v1.3h-1.3zM146.8 67.3h1.3v1.3h-1.3zM147.1 67.1h1.3v1.3h-1.3zM161.7 64.2h1.3v1.3h-1.3zM162.7 66.3h1.3v1.3h-1.3zM162.8 67.3h1.3v1.3h-1.3zM160.6 63.0h1.3v1.3h-1.3zM160.0 68.4h1.3v1.3h-1.3zM161.0 66.3h1.3v1.3h-1.3zM162.1 66.7h1.3v1.3h-1.3zM166.0 65.2h1.3v1.3h-1.3zM161.9 65.1h1.3v1.3h-1.3zM162.4 66.5h1.3v1.3h-1.3zM161.0 67.4h1.3v1.3h-1.3zM175.7 65.4h1.3v1.3h-1.3zM179.0 63.7h1.3v1.3h-1.3zM174.9 64.1h1.3v1.3h-1.3zM178.6 65.0h1.3v1.3h-1.3zM179.0 65.1h1.3v1.3h-1.3zM176.5 63.6h1.3v1.3h-1.3zM177.5 65.1h1.3v1.3h-1.3zM177.6 63.4h1.3v1.3h-1.3zM175.5 64.9h1.3v1.3h-1.3zM192.4 63.7h1.3v1.3h-1.3zM193.2 61.9h1.3v1.3h-1.3zM192.3 63.8h1.3v1.3h-1.3zM192.8 62.7h1.3v1.3h-1.3zM191.7 62.5h1.3v1.3h-1.3zM192.3 62.6h1.3v1.3h-1.3zM195.4 63.1h1.3v1.3h-1.3zM194.0 63.1h1.3v1.3h-1.3zM192.0 64.9h1.3v1.3h-1.3zM192.2 66.4h1.3v1.3h-1.3zM209.2 59.5h1.3v1.3h-1.3zM207.2 61.9h1.3v1.3h-1.3zM207.7 61.9h1.3v1.3h-1.3zM207.1 62.4h1.3v1.3h-1.3zM208.5 61.8h1.3v1.3h-1.3zM207.2 65.5h1.3v1.3h-1.3zM210.0 64.2h1.3v1.3h-1.3zM207.7 62.2h1.3v1.3h-1.3zM207.8 61.3h1.3v1.3h-1.3zM209.0 62.0h1.3v1.3h-1.3zM205.1 64.1h1.3v1.3h-1.3zM209.4 63.9h1.3v1.3h-1.3zM208.4 63.4h1.3v1.3h-1.3zM221.8 61.1h1.3v1.3h-1.3zM224.4 60.4h1.3v1.3h-1.3zM224.0 62.5h1.3v1.3h-1.3zM222.6 62.1h1.3v1.3h-1.3zM223.3 61.0h1.3v1.3h-1.3zM223.7 62.2h1.3v1.3h-1.3zM223.0 61.1h1.3v1.3h-1.3zM221.4 61.8h1.3v1.3h-1.3zM220.8 61.5h1.3v1.3h-1.3zM235.7 61.5h1.3v1.3h-1.3zM235.6 62.6h1.3v1.3h-1.3zM237.4 61.0h1.3v1.3h-1.3zM238.0 60.2h1.3v1.3h-1.3zM237.8 60.5h1.3v1.3h-1.3zM239.5 60.8h1.3v1.3h-1.3zM237.9 60.2h1.3v1.3h-1.3zM237.2 60.0h1.3v1.3h-1.3zM238.0 63.1h1.3v1.3h-1.3zM239.3 61.2h1.3v1.3h-1.3zM240.0 62.1h1.3v1.3h-1.3zM253.5 61.5h1.3v1.3h-1.3zM253.5 59.5h1.3v1.3h-1.3zM252.6 62.1h1.3v1.3h-1.3zM250.8 58.0h1.3v1.3h-1.3zM251.9 58.3h1.3v1.3h-1.3zM251.8 58.1h1.3v1.3h-1.3zM253.1 60.6h1.3v1.3h-1.3zM253.9 59.4h1.3v1.3h-1.3zM253.7 59.2h1.3v1.3h-1.3zM269.0 58.4h1.3v1.3h-1.3zM269.7 58.0h1.3v1.3h-1.3zM270.4 58.5h1.3v1.3h-1.3zM267.3 57.8h1.3v1.3h-1.3zM269.1 57.9h1.3v1.3h-1.3zM270.5 60.4h1.3v1.3h-1.3zM268.9 57.2h1.3v1.3h-1.3zM268.3 58.0h1.3v1.3h-1.3zM266.2 59.4h1.3v1.3h-1.3zM271.0 58.2h1.3v1.3h-1.3zM269.3 60.4h1.3v1.3h-1.3zM282.4 60.2h1.3v1.3h-1.3zM285.7 56.6h1.3v1.3h-1.3zM280.8 58.4h1.3v1.3h-1.3zM283.0 57.7h1.3v1.3h-1.3zM280.3 57.9h1.3v1.3h-1.3zM283.0 58.9h1.3v1.3h-1.3zM284.5 58.5h1.3v1.3h-1.3zM285.9 59.9h1.3v1.3h-1.3zM282.5 57.9h1.3v1.3h-1.3zM282.7 59.3h1.3v1.3h-1.3zM284.4 59.7h1.3v1.3h-1.3zM282.9 59.1h1.3v1.3h-1.3zM284.8 57.5h1.3v1.3h-1.3zM296.0 55.8h1.3v1.3h-1.3zM298.2 55.8h1.3v1.3h-1.3zM300.3 56.4h1.3v1.3h-1.3zM296.4 56.3h1.3v1.3h-1.3zM298.1 55.9h1.3v1.3h-1.3zM297.9 56.3h1.3v1.3h-1.3zM299.5 56.7h1.3v1.3h-1.3zM299.1 56.8h1.3v1.3h-1.3zM300.2 57.0h1.3v1.3h-1.3zM299.1 58.3h1.3v1.3h-1.3zM300.4 58.4h1.3v1.3h-1.3zM312.7 53.4h1.3v1.3h-1.3zM315.6 55.8h1.3v1.3h-1.3zM313.8 55.8h1.3v1.3h-1.3zM315.0 56.3h1.3v1.3h-1.3zM314.9 55.7h1.3v1.3h-1.3zM313.7 55.8h1.3v1.3h-1.3zM311.6 57.2h1.3v1.3h-1.3zM311.9 54.7h1.3v1.3h-1.3zM314.6 56.0h1.3v1.3h-1.3zM329.7 54.4h1.3v1.3h-1.3zM329.2 55.5h1.3v1.3h-1.3zM327.3 53.9h1.3v1.3h-1.3zM330.7 54.4h1.3v1.3h-1.3zM326.2 57.4h1.3v1.3h-1.3zM330.6 55.2h1.3v1.3h-1.3zM328.6 53.7h1.3v1.3h-1.3zM330.2 52.7h1.3v1.3h-1.3zM327.7 54.8h1.3v1.3h-1.3zM329.2 54.7h1.3v1.3h-1.3zM104.3 53.8h1.3v1.3h-1.3zM99.3 52.7h1.3v1.3h-1.3zM101.5 55.6h1.3v1.3h-1.3zM99.4 53.6h1.3v1.3h-1.3zM101.2 53.4h1.3v1.3h-1.3zM100.9 54.5h1.3v1.3h-1.3zM101.4 55.2h1.3v1.3h-1.3zM100.7 53.3h1.3v1.3h-1.3zM98.9 53.9h1.3v1.3h-1.3zM114.3 53.0h1.3v1.3h-1.3zM115.7 51.0h1.3v1.3h-1.3zM115.7 53.6h1.3v1.3h-1.3zM115.8 52.9h1.3v1.3h-1.3zM116.6 52.2h1.3v1.3h-1.3zM116.0 50.7h1.3v1.3h-1.3zM114.6 52.3h1.3v1.3h-1.3zM115.3 53.0h1.3v1.3h-1.3zM119.4 52.4h1.3v1.3h-1.3zM119.1 54.0h1.3v1.3h-1.3zM115.7 53.3h1.3v1.3h-1.3zM116.4 52.6h1.3v1.3h-1.3zM115.5 55.0h1.3v1.3h-1.3zM130.6 52.4h1.3v1.3h-1.3zM130.9 51.5h1.3v1.3h-1.3zM131.1 50.7h1.3v1.3h-1.3zM130.6 51.3h1.3v1.3h-1.3zM128.3 53.1h1.3v1.3h-1.3zM132.0 52.8h1.3v1.3h-1.3zM132.3 51.2h1.3v1.3h-1.3zM127.2 52.0h1.3v1.3h-1.3zM130.7 50.0h1.3v1.3h-1.3zM145.9 51.3h1.3v1.3h-1.3zM147.4 51.4h1.3v1.3h-1.3zM146.0 50.2h1.3v1.3h-1.3zM145.3 51.4h1.3v1.3h-1.3zM146.2 51.8h1.3v1.3h-1.3zM145.2 51.2h1.3v1.3h-1.3zM144.2 51.3h1.3v1.3h-1.3zM145.7 50.5h1.3v1.3h-1.3zM144.8 51.8h1.3v1.3h-1.3zM162.3 49.9h1.3v1.3h-1.3zM161.0 51.7h1.3v1.3h-1.3zM161.4 51.1h1.3v1.3h-1.3zM160.7 48.8h1.3v1.3h-1.3zM161.4 50.3h1.3v1.3h-1.3zM157.7 49.0h1.3v1.3h-1.3zM161.7 49.7h1.3v1.3h-1.3zM159.8 49.9h1.3v1.3h-1.3zM161.8 51.6h1.3v1.3h-1.3zM159.0 50.0h1.3v1.3h-1.3zM160.5 52.7h1.3v1.3h-1.3zM176.7 49.3h1.3v1.3h-1.3zM174.7 49.6h1.3v1.3h-1.3zM177.1 49.1h1.3v1.3h-1.3zM178.3 48.8h1.3v1.3h-1.3zM176.9 46.9h1.3v1.3h-1.3zM178.3 49.9h1.3v1.3h-1.3zM176.4 49.8h1.3v1.3h-1.3zM177.3 48.7h1.3v1.3h-1.3zM177.4 50.9h1.3v1.3h-1.3zM174.5 50.2h1.3v1.3h-1.3zM177.0 50.1h1.3v1.3h-1.3zM176.6 49.5h1.3v1.3h-1.3zM191.2 45.6h1.3v1.3h-1.3zM191.1 47.4h1.3v1.3h-1.3zM192.8 46.6h1.3v1.3h-1.3zM192.4 48.7h1.3v1.3h-1.3zM191.5 47.9h1.3v1.3h-1.3zM192.6 48.3h1.3v1.3h-1.3zM194.4 45.1h1.3v1.3h-1.3zM190.4 50.4h1.3v1.3h-1.3zM192.1 45.6h1.3v1.3h-1.3zM188.8 46.3h1.3v1.3h-1.3zM189.7 45.7h1.3v1.3h-1.3zM190.8 47.6h1.3v1.3h-1.3zM190.2 47.8h1.3v1.3h-1.3zM207.5 47.8h1.3v1.3h-1.3zM203.3 45.7h1.3v1.3h-1.3zM205.4 45.8h1.3v1.3h-1.3zM206.9 47.2h1.3v1.3h-1.3zM205.2 47.7h1.3v1.3h-1.3zM207.7 47.2h1.3v1.3h-1.3zM207.9 48.1h1.3v1.3h-1.3zM205.6 47.4h1.3v1.3h-1.3zM204.8 47.2h1.3v1.3h-1.3zM207.7 45.9h1.3v1.3h-1.3zM205.7 46.7h1.3v1.3h-1.3zM222.4 44.7h1.3v1.3h-1.3zM221.8 45.2h1.3v1.3h-1.3zM220.8 46.3h1.3v1.3h-1.3zM221.5 47.0h1.3v1.3h-1.3zM221.9 44.0h1.3v1.3h-1.3zM222.1 46.8h1.3v1.3h-1.3zM222.2 44.3h1.3v1.3h-1.3zM221.1 44.5h1.3v1.3h-1.3zM221.5 45.1h1.3v1.3h-1.3zM236.4 46.0h1.3v1.3h-1.3zM235.5 45.6h1.3v1.3h-1.3zM238.9 43.4h1.3v1.3h-1.3zM236.3 47.0h1.3v1.3h-1.3zM236.3 46.1h1.3v1.3h-1.3zM236.7 43.1h1.3v1.3h-1.3zM237.3 45.5h1.3v1.3h-1.3zM237.9 47.4h1.3v1.3h-1.3zM237.6 45.2h1.3v1.3h-1.3zM253.6 42.0h1.3v1.3h-1.3zM251.0 44.5h1.3v1.3h-1.3zM250.9 47.0h1.3v1.3h-1.3zM252.5 44.6h1.3v1.3h-1.3zM251.7 46.6h1.3v1.3h-1.3zM252.9 43.1h1.3v1.3h-1.3zM253.7 42.0h1.3v1.3h-1.3zM251.5 44.3h1.3v1.3h-1.3zM252.4 42.8h1.3v1.3h-1.3zM254.1 45.8h1.3v1.3h-1.3zM251.1 44.4h1.3v1.3h-1.3zM270.9 42.7h1.3v1.3h-1.3zM266.8 43.5h1.3v1.3h-1.3zM267.8 41.1h1.3v1.3h-1.3zM268.2 43.7h1.3v1.3h-1.3zM267.6 43.2h1.3v1.3h-1.3zM267.2 42.2h1.3v1.3h-1.3zM266.0 42.2h1.3v1.3h-1.3zM267.4 43.5h1.3v1.3h-1.3zM266.8 40.7h1.3v1.3h-1.3zM267.5 44.3h1.3v1.3h-1.3zM267.7 40.5h1.3v1.3h-1.3zM268.5 44.1h1.3v1.3h-1.3zM265.0 42.8h1.3v1.3h-1.3zM281.9 42.0h1.3v1.3h-1.3zM282.8 43.0h1.3v1.3h-1.3zM281.6 42.6h1.3v1.3h-1.3zM283.0 41.7h1.3v1.3h-1.3zM283.4 41.9h1.3v1.3h-1.3zM283.1 41.3h1.3v1.3h-1.3zM281.6 41.4h1.3v1.3h-1.3zM284.6 42.5h1.3v1.3h-1.3zM282.9 41.1h1.3v1.3h-1.3zM297.5 41.0h1.3v1.3h-1.3zM297.0 39.9h1.3v1.3h-1.3zM297.1 40.6h1.3v1.3h-1.3zM296.6 40.2h1.3v1.3h-1.3zM298.4 40.8h1.3v1.3h-1.3zM300.9 40.1h1.3v1.3h-1.3zM297.8 39.0h1.3v1.3h-1.3zM300.0 40.1h1.3v1.3h-1.3zM296.8 43.3h1.3v1.3h-1.3zM297.6 40.6h1.3v1.3h-1.3zM298.4 40.6h1.3v1.3h-1.3zM299.0 41.0h1.3v1.3h-1.3zM312.4 41.8h1.3v1.3h-1.3zM309.5 39.7h1.3v1.3h-1.3zM313.6 41.3h1.3v1.3h-1.3zM311.7 40.1h1.3v1.3h-1.3zM313.4 39.4h1.3v1.3h-1.3zM313.7 39.2h1.3v1.3h-1.3zM312.0 41.4h1.3v1.3h-1.3zM312.0 39.6h1.3v1.3h-1.3zM315.5 41.5h1.3v1.3h-1.3zM312.5 40.4h1.3v1.3h-1.3zM312.1 38.8h1.3v1.3h-1.3zM312.4 41.0h1.3v1.3h-1.3zM327.4 40.1h1.3v1.3h-1.3zM329.2 38.7h1.3v1.3h-1.3zM327.5 39.4h1.3v1.3h-1.3zM327.1 37.5h1.3v1.3h-1.3zM326.9 39.4h1.3v1.3h-1.3zM328.3 41.1h1.3v1.3h-1.3zM325.9 39.6h1.3v1.3h-1.3zM326.7 40.4h1.3v1.3h-1.3zM328.9 39.2h1.3v1.3h-1.3zM98.8 36.4h1.3v1.3h-1.3zM98.2 38.1h1.3v1.3h-1.3zM99.8 38.7h1.3v1.3h-1.3zM98.4 36.6h1.3v1.3h-1.3zM99.5 39.8h1.3v1.3h-1.3zM100.6 39.3h1.3v1.3h-1.3zM100.2 39.3h1.3v1.3h-1.3zM99.0 39.4h1.3v1.3h-1.3zM100.5 39.1h1.3v1.3h-1.3zM99.1 37.6h1.3v1.3h-1.3zM98.9 39.7h1.3v1.3h-1.3zM116.8 36.7h1.3v1.3h-1.3zM116.8 36.2h1.3v1.3h-1.3zM113.8 35.3h1.3v1.3h-1.3zM114.5 37.6h1.3v1.3h-1.3zM115.6 35.9h1.3v1.3h-1.3zM114.0 36.8h1.3v1.3h-1.3zM117.3 38.1h1.3v1.3h-1.3zM116.2 37.9h1.3v1.3h-1.3zM113.2 36.0h1.3v1.3h-1.3zM114.0 37.0h1.3v1.3h-1.3zM114.9 36.6h1.3v1.3h-1.3zM117.2 35.4h1.3v1.3h-1.3zM116.4 37.3h1.3v1.3h-1.3zM127.8 36.9h1.3v1.3h-1.3zM129.3 34.7h1.3v1.3h-1.3zM130.4 35.4h1.3v1.3h-1.3zM130.8 35.4h1.3v1.3h-1.3zM131.0 36.2h1.3v1.3h-1.3zM130.3 36.2h1.3v1.3h-1.3zM129.5 35.6h1.3v1.3h-1.3zM130.4 36.9h1.3v1.3h-1.3zM129.4 38.7h1.3v1.3h-1.3zM131.9 34.7h1.3v1.3h-1.3zM142.5 33.1h1.3v1.3h-1.3zM144.9 35.0h1.3v1.3h-1.3zM146.0 35.4h1.3v1.3h-1.3zM144.0 37.8h1.3v1.3h-1.3zM144.3 33.9h1.3v1.3h-1.3zM143.1 33.6h1.3v1.3h-1.3zM144.0 36.1h1.3v1.3h-1.3zM143.5 36.6h1.3v1.3h-1.3zM146.4 32.6h1.3v1.3h-1.3zM145.2 36.0h1.3v1.3h-1.3zM146.4 34.6h1.3v1.3h-1.3zM145.8 35.8h1.3v1.3h-1.3zM160.4 34.9h1.3v1.3h-1.3zM161.3 33.7h1.3v1.3h-1.3zM158.8 34.0h1.3v1.3h-1.3zM162.2 34.4h1.3v1.3h-1.3zM160.2 31.6h1.3v1.3h-1.3zM159.7 34.7h1.3v1.3h-1.3zM159.1 35.7h1.3v1.3h-1.3zM159.6 33.0h1.3v1.3h-1.3zM159.5 34.0h1.3v1.3h-1.3zM174.0 33.3h1.3v1.3h-1.3zM175.6 32.3h1.3v1.3h-1.3zM175.2 32.0h1.3v1.3h-1.3zM175.6 32.6h1.3v1.3h-1.3zM175.1 34.8h1.3v1.3h-1.3zM174.2 33.2h1.3v1.3h-1.3zM174.7 32.7h1.3v1.3h-1.3zM175.3 33.1h1.3v1.3h-1.3zM175.7 32.2h1.3v1.3h-1.3zM176.1 31.7h1.3v1.3h-1.3zM188.2 31.1h1.3v1.3h-1.3zM190.4 31.4h1.3v1.3h-1.3zM190.3 31.6h1.3v1.3h-1.3zM191.8 31.8h1.3v1.3h-1.3zM188.3 32.5h1.3v1.3h-1.3zM190.3 30.8h1.3v1.3h-1.3zM191.0 31.5h1.3v1.3h-1.3zM191.8 34.3h1.3v1.3h-1.3zM189.9 33.6h1.3v1.3h-1.3zM189.7 32.5h1.3v1.3h-1.3zM192.1 33.2h1.3v1.3h-1.3zM191.0 31.5h1.3v1.3h-1.3zM189.9 31.7h1.3v1.3h-1.3zM205.2 31.1h1.3v1.3h-1.3zM208.2 30.8h1.3v1.3h-1.3zM203.4 31.9h1.3v1.3h-1.3zM205.4 30.6h1.3v1.3h-1.3zM203.6 32.0h1.3v1.3h-1.3zM207.4 30.9h1.3v1.3h-1.3zM203.4 29.5h1.3v1.3h-1.3zM206.3 32.1h1.3v1.3h-1.3zM207.5 32.4h1.3v1.3h-1.3zM206.4 31.0h1.3v1.3h-1.3zM205.4 31.9h1.3v1.3h-1.3zM206.6 29.1h1.3v1.3h-1.3zM207.2 31.7h1.3v1.3h-1.3zM221.2 30.9h1.3v1.3h-1.3zM220.8 32.4h1.3v1.3h-1.3zM220.9 30.8h1.3v1.3h-1.3zM223.6 30.1h1.3v1.3h-1.3zM221.1 31.0h1.3v1.3h-1.3zM221.8 29.2h1.3v1.3h-1.3zM221.0 27.7h1.3v1.3h-1.3zM222.4 31.4h1.3v1.3h-1.3zM219.6 30.5h1.3v1.3h-1.3zM236.9 29.1h1.3v1.3h-1.3zM238.1 29.6h1.3v1.3h-1.3zM233.7 30.6h1.3v1.3h-1.3zM235.3 29.7h1.3v1.3h-1.3zM238.7 30.4h1.3v1.3h-1.3zM234.8 29.0h1.3v1.3h-1.3zM234.2 29.9h1.3v1.3h-1.3zM236.8 27.9h1.3v1.3h-1.3zM236.6 30.2h1.3v1.3h-1.3zM251.3 28.5h1.3v1.3h-1.3zM251.9 31.0h1.3v1.3h-1.3zM254.5 25.8h1.3v1.3h-1.3zM250.7 28.1h1.3v1.3h-1.3zM250.2 25.7h1.3v1.3h-1.3zM251.1 28.2h1.3v1.3h-1.3zM251.2 29.5h1.3v1.3h-1.3zM251.7 28.8h1.3v1.3h-1.3zM252.3 25.9h1.3v1.3h-1.3zM249.7 28.8h1.3v1.3h-1.3zM251.9 27.8h1.3v1.3h-1.3zM251.2 28.2h1.3v1.3h-1.3zM267.7 27.3h1.3v1.3h-1.3zM265.7 28.5h1.3v1.3h-1.3zM266.1 27.6h1.3v1.3h-1.3zM266.0 26.2h1.3v1.3h-1.3zM266.7 26.1h1.3v1.3h-1.3zM264.3 26.5h1.3v1.3h-1.3zM267.9 28.4h1.3v1.3h-1.3zM269.0 28.3h1.3v1.3h-1.3zM268.3 27.4h1.3v1.3h-1.3zM265.9 27.7h1.3v1.3h-1.3zM265.3 28.0h1.3v1.3h-1.3zM282.1 25.7h1.3v1.3h-1.3zM280.2 26.4h1.3v1.3h-1.3zM281.1 26.3h1.3v1.3h-1.3zM282.6 25.6h1.3v1.3h-1.3zM282.0 27.4h1.3v1.3h-1.3zM281.3 25.0h1.3v1.3h-1.3zM280.1 25.9h1.3v1.3h-1.3zM282.4 24.7h1.3v1.3h-1.3zM281.1 25.3h1.3v1.3h-1.3zM282.2 25.8h1.3v1.3h-1.3zM280.3 27.2h1.3v1.3h-1.3zM280.5 27.4h1.3v1.3h-1.3zM294.2 26.4h1.3v1.3h-1.3zM297.5 24.6h1.3v1.3h-1.3zM295.6 24.7h1.3v1.3h-1.3zM298.0 25.4h1.3v1.3h-1.3zM297.6 24.6h1.3v1.3h-1.3zM295.1 24.1h1.3v1.3h-1.3zM299.3 26.2h1.3v1.3h-1.3zM297.6 25.8h1.3v1.3h-1.3zM296.7 24.9h1.3v1.3h-1.3zM296.3 25.6h1.3v1.3h-1.3zM312.2 24.3h1.3v1.3h-1.3zM310.2 24.1h1.3v1.3h-1.3zM312.5 22.7h1.3v1.3h-1.3zM311.6 23.8h1.3v1.3h-1.3zM311.2 27.2h1.3v1.3h-1.3zM310.5 24.7h1.3v1.3h-1.3zM310.7 27.0h1.3v1.3h-1.3zM308.9 22.8h1.3v1.3h-1.3zM310.2 23.7h1.3v1.3h-1.3zM311.8 24.5h1.3v1.3h-1.3zM312.9 24.9h1.3v1.3h-1.3zM311.2 23.8h1.3v1.3h-1.3zM326.7 22.2h1.3v1.3h-1.3zM326.9 23.0h1.3v1.3h-1.3zM326.1 23.4h1.3v1.3h-1.3zM325.5 22.6h1.3v1.3h-1.3zM326.6 23.1h1.3v1.3h-1.3zM326.0 23.0h1.3v1.3h-1.3zM326.4 23.9h1.3v1.3h-1.3zM327.6 22.3h1.3v1.3h-1.3zM326.8 24.0h1.3v1.3h-1.3zM328.3 22.4h1.3v1.3h-1.3zM325.8 22.2h1.3v1.3h-1.3z" fill="#14dc14"/><text x="204.8" y="14.0" font-family="Liberation Serif" font-weight="bold" font-size="9" fill="#fff">Q</text><text x="355.3" y="160.7" font-family="Liberation Serif" font-weight="bold" font-size="9" fill="#fff">I</text></svg>
<div class="a" style="left:275.3px;top:443.2px;width:1044.7px;height:2.8px;background:#dadada;"></div>
<div class="a" style="left:275.2px;top:446.0px;width:1044.8px;height:223.8px;background:#fff;border:1px solid #7c7c7c;border-bottom-color:#5a5a5a;"></div>
<div class="a hdr" style="left:276.2px;top:447px;width:1042.8px;height:15px;border-bottom:1px solid #bdbdbd;"></div>
<svg class="a" style="left:280.8px;top:451.2px" width="7" height="7" viewBox="0 0 8 8"><path d="M1 1l3 2.6 3-2.6M1 4.2l3 2.6 3-2.6" stroke="#111" stroke-width="1.35" fill="none"/></svg>
<div class="t" style="left:292.5px;top:449.2px;line-height:12px;">ETSI TR 101 290</div>
<div class="a" style="left:279.1px;top:464.9px;width:8.2px;height:8.2px;border-radius:50%;background:radial-gradient(circle at 38% 30%,#ffe0e0 0%,#f05858 28%,#cc1a1a 62%,#8a0c0c 100%);box-shadow:0 0 0 0.5px #8a2a2a;"></div>
<div class="t" style="left:290.9px;top:463.5px;line-height:12px;">Priority Level 1</div>
<div class="t" style="left:384.8px;top:463.5px;line-height:12px;">166</div>
<div class="a" style="left:279.1px;top:475.6px;width:8.2px;height:8.2px;border-radius:50%;background:radial-gradient(circle at 38% 30%,#d8ffc8 0%,#58e038 28%,#1fae12 62%,#0e7a08 100%);box-shadow:0 0 0 0.5px #2c7a20;"></div>
<div class="t" style="left:290.9px;top:474.2px;line-height:12px;">1.1 TS_sync_loss</div>
<div class="t" style="left:384.8px;top:474.2px;line-height:12px;">0</div>
<div class="a" style="left:279.1px;top:486.3px;width:8.2px;height:8.2px;border-radius:50%;background:radial-gradient(circle at 38% 30%,#d8ffc8 0%,#58e038 28%,#1fae12 62%,#0e7a08 100%);box-shadow:0 0 0 0.5px #2c7a20;"></div>
<div class="t" style="left:290.9px;top:484.9px;line-height:12px;">1.2 Sync_byte_error</div>
<div class="t" style="left:384.8px;top:484.9px;line-height:12px;">0</div>
<div class="a" style="left:279.1px;top:497.1px;width:8.2px;height:8.2px;border-radius:50%;background:radial-gradient(circle at 38% 30%,#ffe0e0 0%,#f05858 28%,#cc1a1a 62%,#8a0c0c 100%);box-shadow:0 0 0 0.5px #8a2a2a;"></div>
<div class="t" style="left:290.9px;top:495.7px;line-height:12px;">1.3.a PAT_error_2</div>
<div class="t" style="left:384.8px;top:495.7px;line-height:12px;">1</div>
<div class="a" style="left:279.1px;top:507.8px;width:8.2px;height:8.2px;border-radius:50%;background:radial-gradient(circle at 38% 30%,#ffe0e0 0%,#f05858 28%,#cc1a1a 62%,#8a0c0c 100%);box-shadow:0 0 0 0.5px #8a2a2a;"></div>
<div class="t" style="left:290.9px;top:506.4px;line-height:12px;">1.4 Continuity_count_error</div>
<div class="t" style="left:384.8px;top:506.4px;line-height:12px;">164</div>
<div class="a" style="left:279.1px;top:518.5px;width:8.2px;height:8.2px;border-radius:50%;background:radial-gradient(circle at 38% 30%,#ffe0e0 0%,#f05858 28%,#cc1a1a 62%,#8a0c0c 100%);box-shadow:0 0 0 0.5px #8a2a2a;"></div>
<div class="t" style="left:290.9px;top:517.1px;line-height:12px;">1.5.a PMT_error_2</div>
<div class="t" style="left:384.8px;top:517.1px;line-height:12px;">1</div>
<div class="a" style="left:279.1px;top:529.2px;width:8.2px;height:8.2px;border-radius:50%;background:radial-gradient(circle at 38% 30%,#d8ffc8 0%,#58e038 28%,#1fae12 62%,#0e7a08 100%);box-shadow:0 0 0 0.5px #2c7a20;"></div>
<div class="t" style="left:290.9px;top:527.8px;line-height:12px;">1.6 PID_error</div>
<div class="t" style="left:384.8px;top:527.8px;line-height:12px;">0</div>
<div class="a" style="left:528.9px;top:464.9px;width:8.2px;height:8.2px;border-radius:50%;background:radial-gradient(circle at 38% 30%,#ffe0e0 0%,#f05858 28%,#cc1a1a 62%,#8a0c0c 100%);box-shadow:0 0 0 0.5px #8a2a2a;"></div>
<div class="t" style="left:541.0px;top:463.5px;line-height:12px;">Priority Level 2</div>
<div class="t" style="left:640.5px;top:463.5px;line-height:12px;">8022</div>
<div class="a" style="left:528.9px;top:475.6px;width:8.2px;height:8.2px;border-radius:50%;background:radial-gradient(circle at 38% 30%,#ffe0e0 0%,#f05858 28%,#cc1a1a 62%,#8a0c0c 100%);box-shadow:0 0 0 0.5px #8a2a2a;"></div>
<div class="t" style="left:541.0px;top:474.2px;line-height:12px;">2.1 Transport_error</div>
<div class="t" style="left:640.5px;top:474.2px;line-height:12px;">7</div>
<div class="a" style="left:528.9px;top:486.3px;width:8.2px;height:8.2px;border-radius:50%;background:radial-gradient(circle at 38% 30%,#d8ffc8 0%,#58e038 28%,#1fae12 62%,#0e7a08 100%);box-shadow:0 0 0 0.5px #2c7a20;"></div>
<div class="t" style="left:541.0px;top:484.9px;line-height:12px;">2.2 CRC_error</div>
<div class="t" style="left:640.5px;top:484.9px;line-height:12px;">0</div>
<div class="a" style="left:528.9px;top:497.1px;width:8.2px;height:8.2px;border-radius:50%;background:radial-gradient(circle at 38% 30%,#d8ffc8 0%,#58e038 28%,#1fae12 62%,#0e7a08 100%);box-shadow:0 0 0 0.5px #2c7a20;"></div>
<div class="t" style="left:541.0px;top:495.7px;line-height:12px;">2.3a PCR_repetition_error</div>
<div class="t" style="left:640.5px;top:495.7px;line-height:12px;">0</div>
<div class="a" style="left:528.9px;top:507.8px;width:8.2px;height:8.2px;border-radius:50%;background:radial-gradient(circle at 38% 30%,#d8ffc8 0%,#58e038 28%,#1fae12 62%,#0e7a08 100%);box-shadow:0 0 0 0.5px #2c7a20;"></div>
<div class="t" style="left:541.0px;top:506.4px;line-height:12px;">2.3b PCR_discontinuity_error</div>
<div class="t" style="left:640.5px;top:506.4px;line-height:12px;">0</div>
<div class="a" style="left:528.9px;top:518.5px;width:8.2px;height:8.2px;border-radius:50%;background:radial-gradient(circle at 38% 30%,#ffe0e0 0%,#f05858 28%,#cc1a1a 62%,#8a0c0c 100%);box-shadow:0 0 0 0.5px #8a2a2a;"></div>
<div class="t" style="left:541.0px;top:517.1px;line-height:12px;">2.4 PCR_accuracy_error</div>
<div class="t" style="left:640.5px;top:517.1px;line-height:12px;">8015</div>
<div class="a" style="left:528.9px;top:529.2px;width:8.2px;height:8.2px;border-radius:50%;background:radial-gradient(circle at 38% 30%,#d8ffc8 0%,#58e038 28%,#1fae12 62%,#0e7a08 100%);box-shadow:0 0 0 0.5px #2c7a20;"></div>
<div class="t" style="left:541.0px;top:527.8px;line-height:12px;">2.5 PTS_error</div>
<div class="t" style="left:640.5px;top:527.8px;line-height:12px;">0</div>
<div class="a" style="left:528.9px;top:539.9px;width:8.2px;height:8.2px;border-radius:50%;background:radial-gradient(circle at 38% 30%,#d8ffc8 0%,#58e038 28%,#1fae12 62%,#0e7a08 100%);box-shadow:0 0 0 0.5px #2c7a20;"></div>
<div class="t" style="left:541.0px;top:538.5px;line-height:12px;">2.6 CAT_error</div>
<div class="t" style="left:640.5px;top:538.5px;line-height:12px;">0</div>
<div class="a" style="left:821.2px;top:464.9px;width:8.2px;height:8.2px;border-radius:50%;background:radial-gradient(circle at 38% 30%,#d8ffc8 0%,#58e038 28%,#1fae12 62%,#0e7a08 100%);box-shadow:0 0 0 0.5px #2c7a20;"></div>
<div class="t" style="left:833.0px;top:463.5px;line-height:12px;">Priority Level 3</div>
<div class="t" style="left:920.0px;top:463.5px;line-height:12px;">0</div>
<div class="a" style="left:821.2px;top:475.6px;width:8.2px;height:8.2px;border-radius:50%;background:radial-gradient(circle at 38% 30%,#d8ffc8 0%,#58e038 28%,#1fae12 62%,#0e7a08 100%);box-shadow:0 0 0 0.5px #2c7a20;"></div>
<div class="t" style="left:833.0px;top:474.2px;line-height:12px;">3.1.a NIT_actual_error</div>
<div class="t" style="left:920.0px;top:474.2px;line-height:12px;">0</div>
<div class="a" style="left:821.2px;top:486.3px;width:8.2px;height:8.2px;border-radius:50%;background:radial-gradient(circle at 38% 30%,#d8ffc8 0%,#58e038 28%,#1fae12 62%,#0e7a08 100%);box-shadow:0 0 0 0.5px #2c7a20;"></div>
<div class="t" style="left:833.0px;top:484.9px;line-height:12px;">3.1.b NIT_other_error</div>
<div class="t" style="left:920.0px;top:484.9px;line-height:12px;">0</div>
<div class="a" style="left:821.2px;top:497.1px;width:8.2px;height:8.2px;border-radius:50%;background:radial-gradient(circle at 38% 30%,#d8ffc8 0%,#58e038 28%,#1fae12 62%,#0e7a08 100%);box-shadow:0 0 0 0.5px #2c7a20;"></div>
<div class="t" style="left:833.0px;top:495.7px;line-height:12px;">3.2 SI_repetition_error</div>
<div class="t" style="left:920.0px;top:495.7px;line-height:12px;">0</div>
<div class="a" style="left:821.2px;top:507.8px;width:8.2px;height:8.2px;border-radius:50%;background:radial-gradient(circle at 38% 30%,#d8ffc8 0%,#58e038 28%,#1fae12 62%,#0e7a08 100%);box-shadow:0 0 0 0.5px #2c7a20;"></div>
<div class="t" style="left:833.0px;top:506.4px;line-height:12px;">3.4 Unreferenced_PID</div>
<div class="t" style="left:920.0px;top:506.4px;line-height:12px;">0</div>
<div class="a" style="left:821.2px;top:518.5px;width:8.2px;height:8.2px;border-radius:50%;background:radial-gradient(circle at 38% 30%,#d8ffc8 0%,#58e038 28%,#1fae12 62%,#0e7a08 100%);box-shadow:0 0 0 0.5px #2c7a20;"></div>
<div class="t" style="left:833.0px;top:517.1px;line-height:12px;">3.5.a SDT_actual_error</div>
<div class="t" style="left:920.0px;top:517.1px;line-height:12px;">0</div>
<div class="a" style="left:821.2px;top:529.2px;width:8.2px;height:8.2px;border-radius:50%;background:radial-gradient(circle at 38% 30%,#d8ffc8 0%,#58e038 28%,#1fae12 62%,#0e7a08 100%);box-shadow:0 0 0 0.5px #2c7a20;"></div>
<div class="t" style="left:833.0px;top:527.8px;line-height:12px;">3.5.b SDT_other_error</div>
<div class="t" style="left:920.0px;top:527.8px;line-height:12px;">0</div>
<div class="a" style="left:821.2px;top:539.9px;width:8.2px;height:8.2px;border-radius:50%;background:radial-gradient(circle at 38% 30%,#d8ffc8 0%,#58e038 28%,#1fae12 62%,#0e7a08 100%);box-shadow:0 0 0 0.5px #2c7a20;"></div>
<div class="t" style="left:833.0px;top:538.5px;line-height:12px;">3.6.a EIT_actual_error</div>
<div class="t" style="left:920.0px;top:538.5px;line-height:12px;">0</div>
<div class="a" style="left:821.2px;top:550.7px;width:8.2px;height:8.2px;border-radius:50%;background:radial-gradient(circle at 38% 30%,#d8ffc8 0%,#58e038 28%,#1fae12 62%,#0e7a08 100%);box-shadow:0 0 0 0.5px #2c7a20;"></div>
<div class="t" style="left:833.0px;top:549.3px;line-height:12px;">3.6.b EIT_other_error</div>
<div class="t" style="left:920.0px;top:549.3px;line-height:12px;">0</div>
<div class="a" style="left:821.2px;top:561.4px;width:8.2px;height:8.2px;border-radius:50%;background:radial-gradient(circle at 38% 30%,#d8ffc8 0%,#58e038 28%,#1fae12 62%,#0e7a08 100%);box-shadow:0 0 0 0.5px #2c7a20;"></div>
<div class="t" style="left:833.0px;top:560.0px;line-height:12px;">3.6.c EIT_PF_error</div>
<div class="t" style="left:920.0px;top:560.0px;line-height:12px;">0</div>
<div class="a" style="left:821.2px;top:572.1px;width:8.2px;height:8.2px;border-radius:50%;background:radial-gradient(circle at 38% 30%,#d8ffc8 0%,#58e038 28%,#1fae12 62%,#0e7a08 100%);box-shadow:0 0 0 0.5px #2c7a20;"></div>
<div class="t" style="left:833.0px;top:570.7px;line-height:12px;">3.7 RST_error</div>
<div class="t" style="left:920.0px;top:570.7px;line-height:12px;">0</div>
<div class="a" style="left:821.2px;top:582.8px;width:8.2px;height:8.2px;border-radius:50%;background:radial-gradient(circle at 38% 30%,#d8ffc8 0%,#58e038 28%,#1fae12 62%,#0e7a08 100%);box-shadow:0 0 0 0.5px #2c7a20;"></div>
<div class="t" style="left:833.0px;top:581.4px;line-height:12px;">3.8 TDT_error</div>
<div class="t" style="left:920.0px;top:581.4px;line-height:12px;">0</div>
<div class="a" style="left:1070.9px;top:464.9px;width:8.2px;height:8.2px;border-radius:50%;background:radial-gradient(circle at 38% 30%,#d8ffc8 0%,#58e038 28%,#1fae12 62%,#0e7a08 100%);box-shadow:0 0 0 0.5px #2c7a20;"></div>
<div class="t" style="left:1083.0px;top:463.5px;line-height:12px;">Miscellanous</div>
<div class="t" style="left:1163.0px;top:463.5px;line-height:12px;">0</div>
<div class="a" style="left:1070.9px;top:475.6px;width:8.2px;height:8.2px;border-radius:50%;background:radial-gradient(circle at 38% 30%,#d8ffc8 0%,#58e038 28%,#1fae12 62%,#0e7a08 100%);box-shadow:0 0 0 0.5px #2c7a20;"></div>
<div class="t" style="left:1083.0px;top:474.2px;line-height:12px;">MIP_timing_error</div>
<div class="t" style="left:1163.0px;top:474.2px;line-height:12px;">0</div>
<div class="a" style="left:1070.9px;top:486.3px;width:8.2px;height:8.2px;border-radius:50%;background:radial-gradient(circle at 38% 30%,#d8ffc8 0%,#58e038 28%,#1fae12 62%,#0e7a08 100%);box-shadow:0 0 0 0.5px #2c7a20;"></div>
<div class="t" style="left:1083.0px;top:484.9px;line-height:12px;">MIP_structure_error</div>
<div class="t" style="left:1163.0px;top:484.9px;line-height:12px;">0</div>
<div class="a" style="left:1070.9px;top:497.1px;width:8.2px;height:8.2px;border-radius:50%;background:radial-gradient(circle at 38% 30%,#d8ffc8 0%,#58e038 28%,#1fae12 62%,#0e7a08 100%);box-shadow:0 0 0 0.5px #2c7a20;"></div>
<div class="t" style="left:1083.0px;top:495.7px;line-height:12px;">MIP_presence_error</div>
<div class="t" style="left:1163.0px;top:495.7px;line-height:12px;">0</div>
<div class="a" style="left:1070.9px;top:507.8px;width:8.2px;height:8.2px;border-radius:50%;background:radial-gradient(circle at 38% 30%,#d8ffc8 0%,#58e038 28%,#1fae12 62%,#0e7a08 100%);box-shadow:0 0 0 0.5px #2c7a20;"></div>
<div class="t" style="left:1083.0px;top:506.4px;line-height:12px;">MIP_pointer_error</div>
<div class="t" style="left:1163.0px;top:506.4px;line-height:12px;">0</div>
<div class="a" style="left:1070.9px;top:518.5px;width:8.2px;height:8.2px;border-radius:50%;background:radial-gradient(circle at 38% 30%,#d8ffc8 0%,#58e038 28%,#1fae12 62%,#0e7a08 100%);box-shadow:0 0 0 0.5px #2c7a20;"></div>
<div class="t" style="left:1083.0px;top:517.1px;line-height:12px;">MIP_periodicity_error</div>
<div class="t" style="left:1163.0px;top:517.1px;line-height:12px;">0</div>
<div class="a" style="left:1070.9px;top:529.2px;width:8.2px;height:8.2px;border-radius:50%;background:radial-gradient(circle at 38% 30%,#d8ffc8 0%,#58e038 28%,#1fae12 62%,#0e7a08 100%);box-shadow:0 0 0 0.5px #2c7a20;"></div>
<div class="t" style="left:1083.0px;top:527.8px;line-height:12px;">MIP_ts_rate_error</div>
<div class="t" style="left:1163.0px;top:527.8px;line-height:12px;">0</div>
<div class="a hdr" style="left:276.2px;top:649px;width:1042.8px;height:15.6px;"></div>
<div class="a" style="left:279.0px;top:666.4px;width:1037.0px;height:1.0px;background:#cdcdcd;"></div>
<svg class="a" style="left:280.8px;top:653.7px" width="7" height="7" viewBox="0 0 8 8"><path d="M1 1l2.6 3-2.6 3M4.2 1l2.6 3-2.6 3" stroke="#111" stroke-width="1.35" fill="none"/></svg>
<div class="t" style="left:293.0px;top:651.6px;line-height:12px;">Log Info</div>
<div class="a" style="left:49.9px;top:677.0px;width:131.6px;height:36.8px;border:1px solid #3d6fd6;border-radius:3px;box-shadow:0 0.6px 0 #9db6ea;"></div>
<div class="a" style="left:63.5px;top:671.0px;width:103.0px;height:12.0px;background:#f0f0f0;"></div>
<div class="a" style="left:65.7px;top:672.6px;width:7.8px;height:7.8px;border-radius:50%;background:radial-gradient(circle at 38% 30%,#d8ffc8 0%,#58e038 28%,#1fae12 62%,#0e7a08 100%);box-shadow:0 0 0 0.5px #2c7a20;"></div>
<div class="t" style="left:78.0px;top:671.2px;line-height:12px;font-size:8.6px;color:#0a36b0;font-weight:bold;transform:scaleX(.875);transform-origin:left;">RF Source: 4K_Pruebas</div>
<div class="t" style="left:51.0px;top:682.2px;line-height:12px;color:#2b55c8;width:130.0px;text-align:center;">DVB-T2 Base, Frequency: 642 MHz</div>
<div class="t" style="left:51.0px;top:692.2px;line-height:12px;color:#2b55c8;width:130.0px;text-align:center;">Bandwidth: 8.0 MHz</div>
<div class="t" style="left:51.0px;top:702.2px;line-height:12px;color:#2b55c8;width:130.0px;text-align:center;">Bitrate: 50.29 MBit/s</div>
<div class="a" style="left:40.0px;top:720.0px;width:1280.0px;height:1.0px;background:#d7d7d7;"></div>
<div class="t" style="left:41.2px;top:722.0px;line-height:12px;">(VID 0x04B4 - PID 0x2021) DEVA USB Generic Driver</div>
<svg class="a" style="left:1311px;top:724px" width="9" height="9" viewBox="0 0 9 9"><g fill="#b4b4b4"><rect x="6" y="1" width="2" height="2"/><rect x="6" y="3.5" width="2" height="2"/><rect x="3.5" y="3.5" width="2" height="2"/><rect x="6" y="6" width="2" height="2"/><rect x="3.5" y="6" width="2" height="2"/><rect x="1" y="6" width="2" height="2"/></g></svg>
<svg class="a" style="left:440.0px;top:681.5px" width="24" height="24" viewBox="-12 -12 24 24"><circle r="9.7" fill="none" stroke="#454545" stroke-width="2.0" stroke-dasharray="16.93 3.39" transform="rotate(-80)"/><path d="M-3.1 -5.2L5.2 0L-3.1 5.2Z" fill="#555"/></svg>
<svg class="a" style="left:498.5px;top:681.5px" width="24" height="24" viewBox="-12 -12 24 24"><circle r="9.7" fill="none" stroke="#0b7a0b" stroke-width="2.0" stroke-dasharray="16.93 3.39" transform="rotate(-80)"/><rect x="-4.1" y="-4.1" width="8.2" height="8.2" fill="#0b7a0b"/></svg>
<svg class="a" style="left:554.0px;top:681.5px" width="24" height="24" viewBox="-12 -12 24 24"><circle r="9.7" fill="none" stroke="#0b7a0b" stroke-width="2.0" stroke-dasharray="16.93 3.39" transform="rotate(-80)"/><circle r="5.6" fill="#f00000"/></svg>
<div class="t" style="left:467.3px;top:688.9px;line-height:12px;color:#8c8c8c;transform:scaleX(.89);transform-origin:left;">PLAY</div>
<div class="t" style="left:526.0px;top:688.9px;line-height:12px;transform:scaleX(.89);transform-origin:left;">STOP</div>
<div class="t" style="left:581.0px;top:688.9px;line-height:12px;transform:scaleX(.89);transform-origin:left;">RECORD</div>
<svg class="a" style="left:620px;top:682px" width="26" height="24" viewBox="0 0 26 24"><rect x="2.8" y="3.6" width="19.8" height="12.8" fill="none" stroke="#0b7a0b" stroke-width="1.7"/><path d="M10.8 6.8l4.6 3-4.6 3z" fill="#0b7a0b"/><path d="M10.5 16.6h4.6l0.8 2.4h-6.2z" fill="#0b7a0b"/><path d="M5.5 19.8h14.6" stroke="#0b7a0b" stroke-width="1.5"/></svg>
<div class="t" style="left:648.0px;top:688.9px;line-height:12px;">Video</div>
<svg class="a" style="left:679px;top:681px" width="26" height="26" viewBox="0 0 26 26"><rect x="2.3" y="2.6" width="20.4" height="20.4" rx="3" fill="none" stroke="#0b7a0b" stroke-width="1.6"/><path d="M6.2 19.4V9.6h3V7.4h6.6v2.2h3v9.8z" fill="#0b7a0b"/><path d="M9.2 10.8l3.4 2.4-3.4 2.4zM12.6 10.8l3.4 2.4-3.4 2.4z" fill="#f0f0f0"/><path d="M8.6 17v2.4M10.9 17v2.4M13.2 17v2.4M15.5 17v2.4" stroke="#f0f0f0" stroke-width="0.7"/></svg>
<div class="t" style="left:707.3px;top:688.9px;line-height:12px;">IP Forward</div>
<svg class="a" style="left:756.5px;top:680.5px" width="26" height="26" viewBox="0 0 26 26"><path d="M13.18 16.09L15.11 16.10L15.11 18.30L13.18 18.31L12.51 19.93L13.86 21.31L12.31 22.86L10.93 21.51L9.31 22.18L9.30 24.11L7.10 24.11L7.09 22.18L5.47 21.51L4.09 22.86L2.54 21.31L3.89 19.93L3.22 18.31L1.29 18.30L1.29 16.10L3.22 16.09L3.89 14.47L2.54 13.09L4.09 11.54L5.47 12.89L7.09 12.22L7.10 10.29L9.30 10.29L9.31 12.22L10.93 12.89L12.31 11.54L13.86 13.09L12.51 14.47ZM8.2 14.8a2.4 2.4 0 1 0 0.01 0Z" fill="#0b7a0b" fill-rule="evenodd"/><path d="M21.31 6.77L22.83 6.77L22.83 8.43L21.31 8.43L20.81 9.64L21.89 10.72L20.72 11.89L19.64 10.81L18.43 11.31L18.43 12.83L16.77 12.83L16.77 11.31L15.56 10.81L14.48 11.89L13.31 10.72L14.39 9.64L13.89 8.43L12.37 8.43L12.37 6.77L13.89 6.77L14.39 5.56L13.31 4.48L14.48 3.31L15.56 4.39L16.77 3.89L16.77 2.37L18.43 2.37L18.43 3.89L19.64 4.39L20.72 3.31L21.89 4.48L20.81 5.56ZM17.6 5.9a1.7 1.7 0 1 0 0.01 0Z" fill="#0b7a0b" fill-rule="evenodd"/></svg>
<div class="t" style="left:784.0px;top:688.9px;line-height:12px;">Settings</div>
<svg class="a" style="left:825px;top:681px" width="26" height="26" viewBox="0 0 26 26"><rect x="2.4" y="2.4" width="20.6" height="20.6" rx="2.2" fill="none" stroke="#4a4a4a" stroke-width="1.3"/><g stroke="#4a4a4a" stroke-width="0.9" fill="#f0f0f0"><path d="M6 8h13.6M6 12.8h13.6M6 17.6h13.6"/><circle cx="9.2" cy="8" r="1.5"/><circle cx="16.6" cy="12.8" r="1.5"/><circle cx="9.2" cy="17.6" r="1.5"/></g></svg>
<div class="t" style="left:853.5px;top:688.9px;line-height:12px;color:#8c8c8c;">Configuration</div>
<svg class="a" style="left:1171.1px;top:685px" width="140" height="22" viewBox="0 0 140 22">
<path d="M0 0H54.5Q60.1 0 60.1 5.4Q60.1 9.4 57.6 10.45Q60.1 11.5 60.1 15.5Q60.1 20.9 54.5 20.9H0Z" fill="#0a3ab4"/>
<rect x="3.3" y="3.3" width="25.9" height="14.3" fill="#f6f6fa"/>
<path d="M6.6 7.5H23.4a2.5 2.5 0 0 1 0 5.1H6.6Z" fill="#0a3ab4"/>
<path d="M32.6 3.3H53.6a2.7 2.7 0 0 1 0 5.5H32.6Z" fill="#f6f6fa"/>
<path d="M32.6 12.1H53.6a2.7 2.7 0 0 1 0 5.5H32.6Z" fill="#f6f6fa"/>
<text x="63.6" y="13.75" font-family="Liberation Sans" font-weight="bold" font-size="18.5" stroke="#0a3ab4" stroke-width="0.35" textLength="70.4" lengthAdjust="spacingAndGlyphs" fill="#0a3ab4">DEVA</text>
<text x="63.7" y="20.75" font-family="Liberation Sans" font-weight="bold" font-size="6.5" textLength="72.2" lengthAdjust="spacingAndGlyphs" fill="#0a3ab4">BROADCAST</text>
<circle cx="135.3" cy="3.5" r="1.7" fill="none" stroke="#0a3ab4" stroke-width="0.5"/>
<text x="134.4" y="4.5" font-family="Liberation Sans" font-weight="bold" font-size="2.8" fill="#0a3ab4">R</text>
</svg>
<div class="a" style="left:373.0px;top:721.5px;width:1.0px;height:11.0px;background:#dcdcdc;"></div>
<div class="a" style="left:439.5px;top:721.5px;width:1.0px;height:11.0px;background:#dcdcdc;"></div>
<div class="a" style="left:586.0px;top:721.5px;width:1.0px;height:11.0px;background:#dcdcdc;"></div>
<div class="a" style="left:686.5px;top:721.5px;width:1.0px;height:11.0px;background:#dcdcdc;"></div>
<div class="a" style="left:752.7px;top:721.5px;width:1.0px;height:11.0px;background:#dcdcdc;"></div>
<div class="a" style="left:819.6px;top:721.5px;width:1.0px;height:11.0px;background:#dcdcdc;"></div>
</body></html>
